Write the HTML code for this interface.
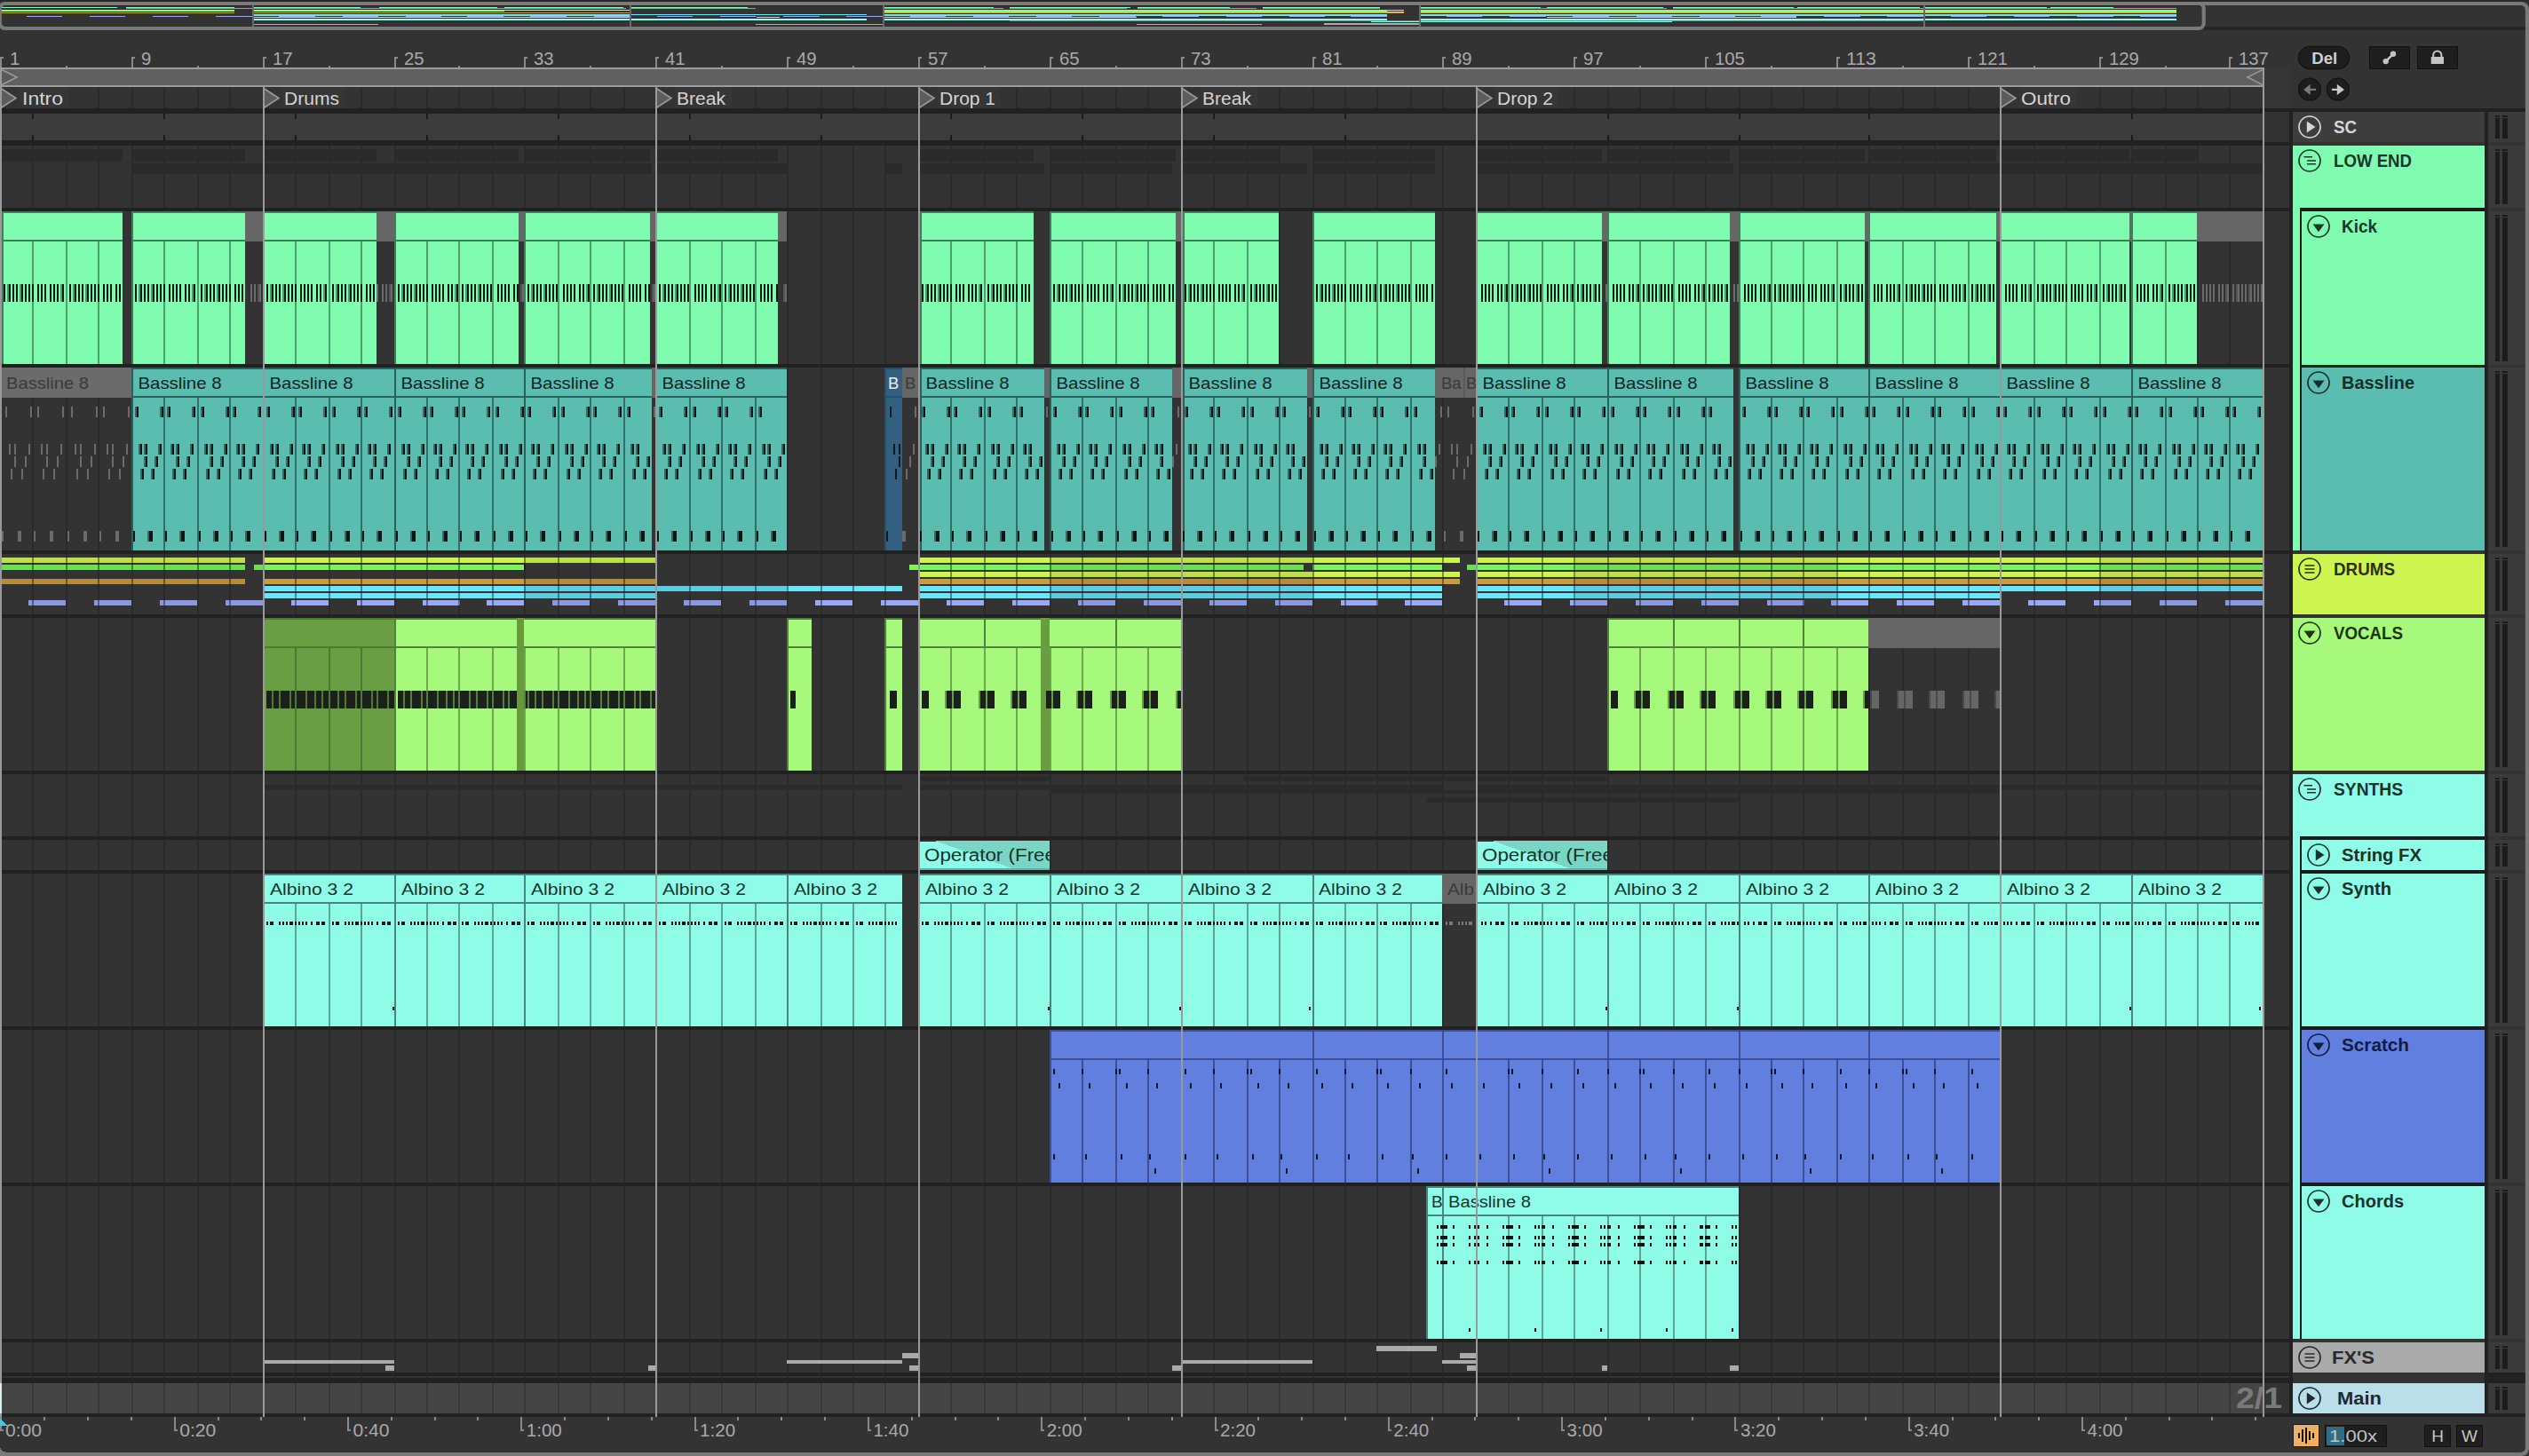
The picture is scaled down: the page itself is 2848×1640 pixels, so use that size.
<!DOCTYPE html>
<html><head><meta charset="utf-8"><style>
html,body{margin:0;padding:0;background:#333;width:2848px;height:1640px;overflow:hidden}
svg{display:block;font-family:"Liberation Sans",sans-serif}
path,rect{shape-rendering:crispEdges}
circle,path.s{shape-rendering:geometricPrecision}
.gp,.gp *{shape-rendering:geometricPrecision !important}
</style></head><body>
<svg width="2848" height="1640" viewBox="0 0 2848 1640">
<path fill="#333333" d="M0 0h2848v1640h-2848z"/>
<path fill="#2a2a2a" d="M0 0h2848v2h-2848z"/>
<path fill="#212121" d="M0 122h2582v1474h-2582z"/>
<path fill="#333333" d="M2 128h2546v30h-2546zM2550 126h28v34h-28zM2 164h2546v70h-2546zM2550 164h28v70h-28zM2 238h2546v172h-2546zM2550 238h28v172h-28zM2 414h2546v206h-2546zM2550 414h28v206h-28zM2 624h2546v68h-2546zM2550 624h28v68h-28zM2 696h2546v172h-2546zM2550 696h28v172h-28zM2 872h2546v70h-2546zM2550 872h28v70h-28zM2 946h2546v34h-2546zM2550 946h28v34h-28zM2 984h2546v172h-2546zM2550 984h28v172h-28zM2 1160h2546v172h-2546zM2550 1160h28v172h-28zM2 1336h2546v172h-2546zM2550 1336h28v172h-28zM2 1512h2546v34h-2546zM2550 1512h28v34h-28z"/>
<path fill="#454545" d="M2 1558h2546v34h-2546z"/>
<path fill="#333333" d="M2550 1558h28v34h-28z"/>
<path fill="#2a2a2a" d="M36 164h2v70h-2zM74 164h2v70h-2zM110 164h2v70h-2zM148 164h2v70h-2zM184 164h2v70h-2zM222 164h2v70h-2zM258 164h2v70h-2zM296 164h2v70h-2zM332 164h2v70h-2zM370 164h2v70h-2zM406 164h2v70h-2zM444 164h2v70h-2zM480 164h2v70h-2zM516 164h2v70h-2zM554 164h2v70h-2zM590 164h2v70h-2zM628 164h2v70h-2zM664 164h2v70h-2zM702 164h2v70h-2zM738 164h2v70h-2zM776 164h2v70h-2zM812 164h2v70h-2zM850 164h2v70h-2zM886 164h2v70h-2zM924 164h2v70h-2zM960 164h2v70h-2zM996 164h2v70h-2zM1034 164h2v70h-2zM1070 164h2v70h-2zM1108 164h2v70h-2zM1144 164h2v70h-2zM1182 164h2v70h-2zM1218 164h2v70h-2zM1256 164h2v70h-2zM1292 164h2v70h-2zM1330 164h2v70h-2zM1366 164h2v70h-2zM1404 164h2v70h-2zM1440 164h2v70h-2zM1478 164h2v70h-2zM1514 164h2v70h-2zM1550 164h2v70h-2zM1588 164h2v70h-2zM1624 164h2v70h-2zM1662 164h2v70h-2zM1698 164h2v70h-2zM1736 164h2v70h-2zM1772 164h2v70h-2zM1810 164h2v70h-2zM1846 164h2v70h-2zM1884 164h2v70h-2zM1920 164h2v70h-2zM1958 164h2v70h-2zM1994 164h2v70h-2zM2030 164h2v70h-2zM2068 164h2v70h-2zM2104 164h2v70h-2zM2142 164h2v70h-2zM2178 164h2v70h-2zM2216 164h2v70h-2zM2252 164h2v70h-2zM2290 164h2v70h-2zM2326 164h2v70h-2zM2364 164h2v70h-2zM2400 164h2v70h-2zM2438 164h2v70h-2zM2474 164h2v70h-2zM2510 164h2v70h-2zM36 238h2v172h-2zM74 238h2v172h-2zM110 238h2v172h-2zM148 238h2v172h-2zM184 238h2v172h-2zM222 238h2v172h-2zM258 238h2v172h-2zM296 238h2v172h-2zM332 238h2v172h-2zM370 238h2v172h-2zM406 238h2v172h-2zM444 238h2v172h-2zM480 238h2v172h-2zM516 238h2v172h-2zM554 238h2v172h-2zM590 238h2v172h-2zM628 238h2v172h-2zM664 238h2v172h-2zM702 238h2v172h-2zM738 238h2v172h-2zM776 238h2v172h-2zM812 238h2v172h-2zM850 238h2v172h-2zM886 238h2v172h-2zM924 238h2v172h-2zM960 238h2v172h-2zM996 238h2v172h-2zM1034 238h2v172h-2zM1070 238h2v172h-2zM1108 238h2v172h-2zM1144 238h2v172h-2zM1182 238h2v172h-2zM1218 238h2v172h-2zM1256 238h2v172h-2zM1292 238h2v172h-2zM1330 238h2v172h-2zM1366 238h2v172h-2zM1404 238h2v172h-2zM1440 238h2v172h-2zM1478 238h2v172h-2zM1514 238h2v172h-2zM1550 238h2v172h-2zM1588 238h2v172h-2zM1624 238h2v172h-2zM1662 238h2v172h-2zM1698 238h2v172h-2zM1736 238h2v172h-2zM1772 238h2v172h-2zM1810 238h2v172h-2zM1846 238h2v172h-2zM1884 238h2v172h-2zM1920 238h2v172h-2zM1958 238h2v172h-2zM1994 238h2v172h-2zM2030 238h2v172h-2zM2068 238h2v172h-2zM2104 238h2v172h-2zM2142 238h2v172h-2zM2178 238h2v172h-2zM2216 238h2v172h-2zM2252 238h2v172h-2zM2290 238h2v172h-2zM2326 238h2v172h-2zM2364 238h2v172h-2zM2400 238h2v172h-2zM2438 238h2v172h-2zM2474 238h2v172h-2zM2510 238h2v172h-2zM36 414h2v206h-2zM74 414h2v206h-2zM110 414h2v206h-2zM148 414h2v206h-2zM184 414h2v206h-2zM222 414h2v206h-2zM258 414h2v206h-2zM296 414h2v206h-2zM332 414h2v206h-2zM370 414h2v206h-2zM406 414h2v206h-2zM444 414h2v206h-2zM480 414h2v206h-2zM516 414h2v206h-2zM554 414h2v206h-2zM590 414h2v206h-2zM628 414h2v206h-2zM664 414h2v206h-2zM702 414h2v206h-2zM738 414h2v206h-2zM776 414h2v206h-2zM812 414h2v206h-2zM850 414h2v206h-2zM886 414h2v206h-2zM924 414h2v206h-2zM960 414h2v206h-2zM996 414h2v206h-2zM1034 414h2v206h-2zM1070 414h2v206h-2zM1108 414h2v206h-2zM1144 414h2v206h-2zM1182 414h2v206h-2zM1218 414h2v206h-2zM1256 414h2v206h-2zM1292 414h2v206h-2zM1330 414h2v206h-2zM1366 414h2v206h-2zM1404 414h2v206h-2zM1440 414h2v206h-2zM1478 414h2v206h-2zM1514 414h2v206h-2zM1550 414h2v206h-2zM1588 414h2v206h-2zM1624 414h2v206h-2zM1662 414h2v206h-2zM1698 414h2v206h-2zM1736 414h2v206h-2zM1772 414h2v206h-2zM1810 414h2v206h-2zM1846 414h2v206h-2zM1884 414h2v206h-2zM1920 414h2v206h-2zM1958 414h2v206h-2zM1994 414h2v206h-2zM2030 414h2v206h-2zM2068 414h2v206h-2zM2104 414h2v206h-2zM2142 414h2v206h-2zM2178 414h2v206h-2zM2216 414h2v206h-2zM2252 414h2v206h-2zM2290 414h2v206h-2zM2326 414h2v206h-2zM2364 414h2v206h-2zM2400 414h2v206h-2zM2438 414h2v206h-2zM2474 414h2v206h-2zM2510 414h2v206h-2zM36 624h2v68h-2zM74 624h2v68h-2zM110 624h2v68h-2zM148 624h2v68h-2zM184 624h2v68h-2zM222 624h2v68h-2zM258 624h2v68h-2zM296 624h2v68h-2zM332 624h2v68h-2zM370 624h2v68h-2zM406 624h2v68h-2zM444 624h2v68h-2zM480 624h2v68h-2zM516 624h2v68h-2zM554 624h2v68h-2zM590 624h2v68h-2zM628 624h2v68h-2zM664 624h2v68h-2zM702 624h2v68h-2zM738 624h2v68h-2zM776 624h2v68h-2zM812 624h2v68h-2zM850 624h2v68h-2zM886 624h2v68h-2zM924 624h2v68h-2zM960 624h2v68h-2zM996 624h2v68h-2zM1034 624h2v68h-2zM1070 624h2v68h-2zM1108 624h2v68h-2zM1144 624h2v68h-2zM1182 624h2v68h-2zM1218 624h2v68h-2zM1256 624h2v68h-2zM1292 624h2v68h-2zM1330 624h2v68h-2zM1366 624h2v68h-2zM1404 624h2v68h-2zM1440 624h2v68h-2zM1478 624h2v68h-2zM1514 624h2v68h-2zM1550 624h2v68h-2zM1588 624h2v68h-2zM1624 624h2v68h-2zM1662 624h2v68h-2zM1698 624h2v68h-2zM1736 624h2v68h-2zM1772 624h2v68h-2zM1810 624h2v68h-2zM1846 624h2v68h-2zM1884 624h2v68h-2zM1920 624h2v68h-2zM1958 624h2v68h-2zM1994 624h2v68h-2zM2030 624h2v68h-2zM2068 624h2v68h-2zM2104 624h2v68h-2zM2142 624h2v68h-2zM2178 624h2v68h-2zM2216 624h2v68h-2zM2252 624h2v68h-2zM2290 624h2v68h-2zM2326 624h2v68h-2zM2364 624h2v68h-2zM2400 624h2v68h-2zM2438 624h2v68h-2zM2474 624h2v68h-2zM2510 624h2v68h-2zM36 696h2v172h-2zM74 696h2v172h-2zM110 696h2v172h-2zM148 696h2v172h-2zM184 696h2v172h-2zM222 696h2v172h-2zM258 696h2v172h-2zM296 696h2v172h-2zM332 696h2v172h-2zM370 696h2v172h-2zM406 696h2v172h-2zM444 696h2v172h-2zM480 696h2v172h-2zM516 696h2v172h-2zM554 696h2v172h-2zM590 696h2v172h-2zM628 696h2v172h-2zM664 696h2v172h-2zM702 696h2v172h-2zM738 696h2v172h-2zM776 696h2v172h-2zM812 696h2v172h-2zM850 696h2v172h-2zM886 696h2v172h-2zM924 696h2v172h-2zM960 696h2v172h-2zM996 696h2v172h-2zM1034 696h2v172h-2zM1070 696h2v172h-2zM1108 696h2v172h-2zM1144 696h2v172h-2zM1182 696h2v172h-2zM1218 696h2v172h-2zM1256 696h2v172h-2zM1292 696h2v172h-2zM1330 696h2v172h-2zM1366 696h2v172h-2zM1404 696h2v172h-2zM1440 696h2v172h-2zM1478 696h2v172h-2zM1514 696h2v172h-2zM1550 696h2v172h-2zM1588 696h2v172h-2zM1624 696h2v172h-2zM1662 696h2v172h-2zM1698 696h2v172h-2zM1736 696h2v172h-2zM1772 696h2v172h-2zM1810 696h2v172h-2zM1846 696h2v172h-2zM1884 696h2v172h-2zM1920 696h2v172h-2zM1958 696h2v172h-2zM1994 696h2v172h-2zM2030 696h2v172h-2zM2068 696h2v172h-2zM2104 696h2v172h-2zM2142 696h2v172h-2zM2178 696h2v172h-2zM2216 696h2v172h-2zM2252 696h2v172h-2zM2290 696h2v172h-2zM2326 696h2v172h-2zM2364 696h2v172h-2zM2400 696h2v172h-2zM2438 696h2v172h-2zM2474 696h2v172h-2zM2510 696h2v172h-2zM36 872h2v70h-2zM74 872h2v70h-2zM110 872h2v70h-2zM148 872h2v70h-2zM184 872h2v70h-2zM222 872h2v70h-2zM258 872h2v70h-2zM296 872h2v70h-2zM332 872h2v70h-2zM370 872h2v70h-2zM406 872h2v70h-2zM444 872h2v70h-2zM480 872h2v70h-2zM516 872h2v70h-2zM554 872h2v70h-2zM590 872h2v70h-2zM628 872h2v70h-2zM664 872h2v70h-2zM702 872h2v70h-2zM738 872h2v70h-2zM776 872h2v70h-2zM812 872h2v70h-2zM850 872h2v70h-2zM886 872h2v70h-2zM924 872h2v70h-2zM960 872h2v70h-2zM996 872h2v70h-2zM1034 872h2v70h-2zM1070 872h2v70h-2zM1108 872h2v70h-2zM1144 872h2v70h-2zM1182 872h2v70h-2zM1218 872h2v70h-2zM1256 872h2v70h-2zM1292 872h2v70h-2zM1330 872h2v70h-2zM1366 872h2v70h-2zM1404 872h2v70h-2zM1440 872h2v70h-2zM1478 872h2v70h-2zM1514 872h2v70h-2zM1550 872h2v70h-2zM1588 872h2v70h-2zM1624 872h2v70h-2zM1662 872h2v70h-2zM1698 872h2v70h-2zM1736 872h2v70h-2zM1772 872h2v70h-2zM1810 872h2v70h-2zM1846 872h2v70h-2zM1884 872h2v70h-2zM1920 872h2v70h-2zM1958 872h2v70h-2zM1994 872h2v70h-2zM2030 872h2v70h-2zM2068 872h2v70h-2zM2104 872h2v70h-2zM2142 872h2v70h-2zM2178 872h2v70h-2zM2216 872h2v70h-2zM2252 872h2v70h-2zM2290 872h2v70h-2zM2326 872h2v70h-2zM2364 872h2v70h-2zM2400 872h2v70h-2zM2438 872h2v70h-2zM2474 872h2v70h-2zM2510 872h2v70h-2zM36 946h2v34h-2zM74 946h2v34h-2zM110 946h2v34h-2zM148 946h2v34h-2zM184 946h2v34h-2zM222 946h2v34h-2zM258 946h2v34h-2zM296 946h2v34h-2zM332 946h2v34h-2zM370 946h2v34h-2zM406 946h2v34h-2zM444 946h2v34h-2zM480 946h2v34h-2zM516 946h2v34h-2zM554 946h2v34h-2zM590 946h2v34h-2zM628 946h2v34h-2zM664 946h2v34h-2zM702 946h2v34h-2zM738 946h2v34h-2zM776 946h2v34h-2zM812 946h2v34h-2zM850 946h2v34h-2zM886 946h2v34h-2zM924 946h2v34h-2zM960 946h2v34h-2zM996 946h2v34h-2zM1034 946h2v34h-2zM1070 946h2v34h-2zM1108 946h2v34h-2zM1144 946h2v34h-2zM1182 946h2v34h-2zM1218 946h2v34h-2zM1256 946h2v34h-2zM1292 946h2v34h-2zM1330 946h2v34h-2zM1366 946h2v34h-2zM1404 946h2v34h-2zM1440 946h2v34h-2zM1478 946h2v34h-2zM1514 946h2v34h-2zM1550 946h2v34h-2zM1588 946h2v34h-2zM1624 946h2v34h-2zM1662 946h2v34h-2zM1698 946h2v34h-2zM1736 946h2v34h-2zM1772 946h2v34h-2zM1810 946h2v34h-2zM1846 946h2v34h-2zM1884 946h2v34h-2zM1920 946h2v34h-2zM1958 946h2v34h-2zM1994 946h2v34h-2zM2030 946h2v34h-2zM2068 946h2v34h-2zM2104 946h2v34h-2zM2142 946h2v34h-2zM2178 946h2v34h-2zM2216 946h2v34h-2zM2252 946h2v34h-2zM2290 946h2v34h-2zM2326 946h2v34h-2zM2364 946h2v34h-2zM2400 946h2v34h-2zM2438 946h2v34h-2zM2474 946h2v34h-2zM2510 946h2v34h-2zM36 984h2v172h-2zM74 984h2v172h-2zM110 984h2v172h-2zM148 984h2v172h-2zM184 984h2v172h-2zM222 984h2v172h-2zM258 984h2v172h-2zM296 984h2v172h-2zM332 984h2v172h-2zM370 984h2v172h-2zM406 984h2v172h-2zM444 984h2v172h-2zM480 984h2v172h-2zM516 984h2v172h-2zM554 984h2v172h-2zM590 984h2v172h-2zM628 984h2v172h-2zM664 984h2v172h-2zM702 984h2v172h-2zM738 984h2v172h-2zM776 984h2v172h-2zM812 984h2v172h-2zM850 984h2v172h-2zM886 984h2v172h-2zM924 984h2v172h-2zM960 984h2v172h-2zM996 984h2v172h-2zM1034 984h2v172h-2zM1070 984h2v172h-2zM1108 984h2v172h-2zM1144 984h2v172h-2zM1182 984h2v172h-2zM1218 984h2v172h-2zM1256 984h2v172h-2zM1292 984h2v172h-2zM1330 984h2v172h-2zM1366 984h2v172h-2zM1404 984h2v172h-2zM1440 984h2v172h-2zM1478 984h2v172h-2zM1514 984h2v172h-2zM1550 984h2v172h-2zM1588 984h2v172h-2zM1624 984h2v172h-2zM1662 984h2v172h-2zM1698 984h2v172h-2zM1736 984h2v172h-2zM1772 984h2v172h-2zM1810 984h2v172h-2zM1846 984h2v172h-2zM1884 984h2v172h-2zM1920 984h2v172h-2zM1958 984h2v172h-2zM1994 984h2v172h-2zM2030 984h2v172h-2zM2068 984h2v172h-2zM2104 984h2v172h-2zM2142 984h2v172h-2zM2178 984h2v172h-2zM2216 984h2v172h-2zM2252 984h2v172h-2zM2290 984h2v172h-2zM2326 984h2v172h-2zM2364 984h2v172h-2zM2400 984h2v172h-2zM2438 984h2v172h-2zM2474 984h2v172h-2zM2510 984h2v172h-2zM36 1160h2v172h-2zM74 1160h2v172h-2zM110 1160h2v172h-2zM148 1160h2v172h-2zM184 1160h2v172h-2zM222 1160h2v172h-2zM258 1160h2v172h-2zM296 1160h2v172h-2zM332 1160h2v172h-2zM370 1160h2v172h-2zM406 1160h2v172h-2zM444 1160h2v172h-2zM480 1160h2v172h-2zM516 1160h2v172h-2zM554 1160h2v172h-2zM590 1160h2v172h-2zM628 1160h2v172h-2zM664 1160h2v172h-2zM702 1160h2v172h-2zM738 1160h2v172h-2zM776 1160h2v172h-2zM812 1160h2v172h-2zM850 1160h2v172h-2zM886 1160h2v172h-2zM924 1160h2v172h-2zM960 1160h2v172h-2zM996 1160h2v172h-2zM1034 1160h2v172h-2zM1070 1160h2v172h-2zM1108 1160h2v172h-2zM1144 1160h2v172h-2zM1182 1160h2v172h-2zM1218 1160h2v172h-2zM1256 1160h2v172h-2zM1292 1160h2v172h-2zM1330 1160h2v172h-2zM1366 1160h2v172h-2zM1404 1160h2v172h-2zM1440 1160h2v172h-2zM1478 1160h2v172h-2zM1514 1160h2v172h-2zM1550 1160h2v172h-2zM1588 1160h2v172h-2zM1624 1160h2v172h-2zM1662 1160h2v172h-2zM1698 1160h2v172h-2zM1736 1160h2v172h-2zM1772 1160h2v172h-2zM1810 1160h2v172h-2zM1846 1160h2v172h-2zM1884 1160h2v172h-2zM1920 1160h2v172h-2zM1958 1160h2v172h-2zM1994 1160h2v172h-2zM2030 1160h2v172h-2zM2068 1160h2v172h-2zM2104 1160h2v172h-2zM2142 1160h2v172h-2zM2178 1160h2v172h-2zM2216 1160h2v172h-2zM2252 1160h2v172h-2zM2290 1160h2v172h-2zM2326 1160h2v172h-2zM2364 1160h2v172h-2zM2400 1160h2v172h-2zM2438 1160h2v172h-2zM2474 1160h2v172h-2zM2510 1160h2v172h-2zM36 1336h2v172h-2zM74 1336h2v172h-2zM110 1336h2v172h-2zM148 1336h2v172h-2zM184 1336h2v172h-2zM222 1336h2v172h-2zM258 1336h2v172h-2zM296 1336h2v172h-2zM332 1336h2v172h-2zM370 1336h2v172h-2zM406 1336h2v172h-2zM444 1336h2v172h-2zM480 1336h2v172h-2zM516 1336h2v172h-2zM554 1336h2v172h-2zM590 1336h2v172h-2zM628 1336h2v172h-2zM664 1336h2v172h-2zM702 1336h2v172h-2zM738 1336h2v172h-2zM776 1336h2v172h-2zM812 1336h2v172h-2zM850 1336h2v172h-2zM886 1336h2v172h-2zM924 1336h2v172h-2zM960 1336h2v172h-2zM996 1336h2v172h-2zM1034 1336h2v172h-2zM1070 1336h2v172h-2zM1108 1336h2v172h-2zM1144 1336h2v172h-2zM1182 1336h2v172h-2zM1218 1336h2v172h-2zM1256 1336h2v172h-2zM1292 1336h2v172h-2zM1330 1336h2v172h-2zM1366 1336h2v172h-2zM1404 1336h2v172h-2zM1440 1336h2v172h-2zM1478 1336h2v172h-2zM1514 1336h2v172h-2zM1550 1336h2v172h-2zM1588 1336h2v172h-2zM1624 1336h2v172h-2zM1662 1336h2v172h-2zM1698 1336h2v172h-2zM1736 1336h2v172h-2zM1772 1336h2v172h-2zM1810 1336h2v172h-2zM1846 1336h2v172h-2zM1884 1336h2v172h-2zM1920 1336h2v172h-2zM1958 1336h2v172h-2zM1994 1336h2v172h-2zM2030 1336h2v172h-2zM2068 1336h2v172h-2zM2104 1336h2v172h-2zM2142 1336h2v172h-2zM2178 1336h2v172h-2zM2216 1336h2v172h-2zM2252 1336h2v172h-2zM2290 1336h2v172h-2zM2326 1336h2v172h-2zM2364 1336h2v172h-2zM2400 1336h2v172h-2zM2438 1336h2v172h-2zM2474 1336h2v172h-2zM2510 1336h2v172h-2zM36 1512h2v34h-2zM74 1512h2v34h-2zM110 1512h2v34h-2zM148 1512h2v34h-2zM184 1512h2v34h-2zM222 1512h2v34h-2zM258 1512h2v34h-2zM296 1512h2v34h-2zM332 1512h2v34h-2zM370 1512h2v34h-2zM406 1512h2v34h-2zM444 1512h2v34h-2zM480 1512h2v34h-2zM516 1512h2v34h-2zM554 1512h2v34h-2zM590 1512h2v34h-2zM628 1512h2v34h-2zM664 1512h2v34h-2zM702 1512h2v34h-2zM738 1512h2v34h-2zM776 1512h2v34h-2zM812 1512h2v34h-2zM850 1512h2v34h-2zM886 1512h2v34h-2zM924 1512h2v34h-2zM960 1512h2v34h-2zM996 1512h2v34h-2zM1034 1512h2v34h-2zM1070 1512h2v34h-2zM1108 1512h2v34h-2zM1144 1512h2v34h-2zM1182 1512h2v34h-2zM1218 1512h2v34h-2zM1256 1512h2v34h-2zM1292 1512h2v34h-2zM1330 1512h2v34h-2zM1366 1512h2v34h-2zM1404 1512h2v34h-2zM1440 1512h2v34h-2zM1478 1512h2v34h-2zM1514 1512h2v34h-2zM1550 1512h2v34h-2zM1588 1512h2v34h-2zM1624 1512h2v34h-2zM1662 1512h2v34h-2zM1698 1512h2v34h-2zM1736 1512h2v34h-2zM1772 1512h2v34h-2zM1810 1512h2v34h-2zM1846 1512h2v34h-2zM1884 1512h2v34h-2zM1920 1512h2v34h-2zM1958 1512h2v34h-2zM1994 1512h2v34h-2zM2030 1512h2v34h-2zM2068 1512h2v34h-2zM2104 1512h2v34h-2zM2142 1512h2v34h-2zM2178 1512h2v34h-2zM2216 1512h2v34h-2zM2252 1512h2v34h-2zM2290 1512h2v34h-2zM2326 1512h2v34h-2zM2364 1512h2v34h-2zM2400 1512h2v34h-2zM2438 1512h2v34h-2zM2474 1512h2v34h-2zM2510 1512h2v34h-2z"/>
<path fill="#383838" d="M36 1558h2v34h-2zM74 1558h2v34h-2zM110 1558h2v34h-2zM148 1558h2v34h-2zM184 1558h2v34h-2zM222 1558h2v34h-2zM258 1558h2v34h-2zM296 1558h2v34h-2zM332 1558h2v34h-2zM370 1558h2v34h-2zM406 1558h2v34h-2zM444 1558h2v34h-2zM480 1558h2v34h-2zM516 1558h2v34h-2zM554 1558h2v34h-2zM590 1558h2v34h-2zM628 1558h2v34h-2zM664 1558h2v34h-2zM702 1558h2v34h-2zM738 1558h2v34h-2zM776 1558h2v34h-2zM812 1558h2v34h-2zM850 1558h2v34h-2zM886 1558h2v34h-2zM924 1558h2v34h-2zM960 1558h2v34h-2zM996 1558h2v34h-2zM1034 1558h2v34h-2zM1070 1558h2v34h-2zM1108 1558h2v34h-2zM1144 1558h2v34h-2zM1182 1558h2v34h-2zM1218 1558h2v34h-2zM1256 1558h2v34h-2zM1292 1558h2v34h-2zM1330 1558h2v34h-2zM1366 1558h2v34h-2zM1404 1558h2v34h-2zM1440 1558h2v34h-2zM1478 1558h2v34h-2zM1514 1558h2v34h-2zM1550 1558h2v34h-2zM1588 1558h2v34h-2zM1624 1558h2v34h-2zM1662 1558h2v34h-2zM1698 1558h2v34h-2zM1736 1558h2v34h-2zM1772 1558h2v34h-2zM1810 1558h2v34h-2zM1846 1558h2v34h-2zM1884 1558h2v34h-2zM1920 1558h2v34h-2zM1958 1558h2v34h-2zM1994 1558h2v34h-2zM2030 1558h2v34h-2zM2068 1558h2v34h-2zM2104 1558h2v34h-2zM2142 1558h2v34h-2zM2178 1558h2v34h-2zM2216 1558h2v34h-2zM2252 1558h2v34h-2zM2290 1558h2v34h-2zM2326 1558h2v34h-2zM2364 1558h2v34h-2zM2400 1558h2v34h-2zM2438 1558h2v34h-2zM2474 1558h2v34h-2zM2510 1558h2v34h-2z"/>
<path fill="#3c3c3c" d="M2 128h2546v30h-2546z"/>
<path fill="#1f1717" d="M36 128h2v6h-2zM36 152h2v6h-2zM184 128h2v6h-2zM184 152h2v6h-2zM332 128h2v6h-2zM332 152h2v6h-2zM480 128h2v6h-2zM480 152h2v6h-2zM628 128h2v6h-2zM628 152h2v6h-2zM776 128h2v6h-2zM776 152h2v6h-2zM924 128h2v6h-2zM924 152h2v6h-2zM1070 128h2v6h-2zM1070 152h2v6h-2zM1218 128h2v6h-2zM1218 152h2v6h-2zM1366 128h2v6h-2zM1366 152h2v6h-2zM1514 128h2v6h-2zM1514 152h2v6h-2zM1662 128h2v6h-2zM1662 152h2v6h-2zM1810 128h2v6h-2zM1810 152h2v6h-2zM1958 128h2v6h-2zM1958 152h2v6h-2zM2104 128h2v6h-2zM2104 152h2v6h-2zM2252 128h2v6h-2zM2252 152h2v6h-2zM2400 128h2v6h-2zM2400 152h2v6h-2zM2548 128h2v6h-2zM2548 152h2v6h-2z"/>
<path fill="#2b2b2b" d="M2 168h136v14h-136zM148 168h128v14h-128zM296 168h128v14h-128zM444 168h140v14h-140zM590 168h142v14h-142zM738 168h138v14h-138zM1036 168h128v14h-128zM1182 168h142v14h-142zM1332 168h108v14h-108zM1478 168h138v14h-138zM1662 168h142v14h-142zM1810 168h138v14h-138zM1958 168h142v14h-142zM2104 168h144v14h-144zM2252 168h146v14h-146zM2400 168h74v14h-74zM148 184h148v12h-148zM296 184h148v12h-148zM444 184h146v12h-146zM590 184h144v12h-144zM738 184h148v12h-148zM996 184h20v12h-20zM1036 184h140v12h-140zM1182 184h138v12h-138zM1332 184h140v12h-140zM1478 184h138v12h-138zM1662 184h148v12h-148zM1810 184h142v12h-142zM1958 184h146v12h-146zM2104 184h148v12h-148zM2252 184h148v12h-148zM2400 184h148v12h-148zM1034 874h148v6h-148zM1400 874h410v6h-410zM296 884h720v6h-720zM1034 884h590v6h-590zM1662 884h886v6h-886zM1182 890h1070v4h-1070zM1606 898h352v6h-352z"/>
<path fill="#2a2a2a" d="M36 164h2v70h-2zM74 164h2v70h-2zM110 164h2v70h-2zM148 164h2v70h-2zM184 164h2v70h-2zM222 164h2v70h-2zM258 164h2v70h-2zM296 164h2v70h-2zM332 164h2v70h-2zM370 164h2v70h-2zM406 164h2v70h-2zM444 164h2v70h-2zM480 164h2v70h-2zM516 164h2v70h-2zM554 164h2v70h-2zM590 164h2v70h-2zM628 164h2v70h-2zM664 164h2v70h-2zM702 164h2v70h-2zM738 164h2v70h-2zM776 164h2v70h-2zM812 164h2v70h-2zM850 164h2v70h-2zM886 164h2v70h-2zM924 164h2v70h-2zM960 164h2v70h-2zM996 164h2v70h-2zM1034 164h2v70h-2zM1070 164h2v70h-2zM1108 164h2v70h-2zM1144 164h2v70h-2zM1182 164h2v70h-2zM1218 164h2v70h-2zM1256 164h2v70h-2zM1292 164h2v70h-2zM1330 164h2v70h-2zM1366 164h2v70h-2zM1404 164h2v70h-2zM1440 164h2v70h-2zM1478 164h2v70h-2zM1514 164h2v70h-2zM1550 164h2v70h-2zM1588 164h2v70h-2zM1624 164h2v70h-2zM1662 164h2v70h-2zM1698 164h2v70h-2zM1736 164h2v70h-2zM1772 164h2v70h-2zM1810 164h2v70h-2zM1846 164h2v70h-2zM1884 164h2v70h-2zM1920 164h2v70h-2zM1958 164h2v70h-2zM1994 164h2v70h-2zM2030 164h2v70h-2zM2068 164h2v70h-2zM2104 164h2v70h-2zM2142 164h2v70h-2zM2178 164h2v70h-2zM2216 164h2v70h-2zM2252 164h2v70h-2zM2290 164h2v70h-2zM2326 164h2v70h-2zM2364 164h2v70h-2zM2400 164h2v70h-2zM2438 164h2v70h-2zM2474 164h2v70h-2zM2510 164h2v70h-2zM36 872h2v70h-2zM74 872h2v70h-2zM110 872h2v70h-2zM148 872h2v70h-2zM184 872h2v70h-2zM222 872h2v70h-2zM258 872h2v70h-2zM296 872h2v70h-2zM332 872h2v70h-2zM370 872h2v70h-2zM406 872h2v70h-2zM444 872h2v70h-2zM480 872h2v70h-2zM516 872h2v70h-2zM554 872h2v70h-2zM590 872h2v70h-2zM628 872h2v70h-2zM664 872h2v70h-2zM702 872h2v70h-2zM738 872h2v70h-2zM776 872h2v70h-2zM812 872h2v70h-2zM850 872h2v70h-2zM886 872h2v70h-2zM924 872h2v70h-2zM960 872h2v70h-2zM996 872h2v70h-2zM1034 872h2v70h-2zM1070 872h2v70h-2zM1108 872h2v70h-2zM1144 872h2v70h-2zM1182 872h2v70h-2zM1218 872h2v70h-2zM1256 872h2v70h-2zM1292 872h2v70h-2zM1330 872h2v70h-2zM1366 872h2v70h-2zM1404 872h2v70h-2zM1440 872h2v70h-2zM1478 872h2v70h-2zM1514 872h2v70h-2zM1550 872h2v70h-2zM1588 872h2v70h-2zM1624 872h2v70h-2zM1662 872h2v70h-2zM1698 872h2v70h-2zM1736 872h2v70h-2zM1772 872h2v70h-2zM1810 872h2v70h-2zM1846 872h2v70h-2zM1884 872h2v70h-2zM1920 872h2v70h-2zM1958 872h2v70h-2zM1994 872h2v70h-2zM2030 872h2v70h-2zM2068 872h2v70h-2zM2104 872h2v70h-2zM2142 872h2v70h-2zM2178 872h2v70h-2zM2216 872h2v70h-2zM2252 872h2v70h-2zM2290 872h2v70h-2zM2326 872h2v70h-2zM2364 872h2v70h-2zM2400 872h2v70h-2zM2438 872h2v70h-2zM2474 872h2v70h-2zM2510 872h2v70h-2z"/>
<path fill="#80fcb0" d="M2 238h136v172h-136z"/>
<path fill="#3e7f5a" d="M2 238h136v2h-136zM2 270h136v2h-136zM2 238h2v172h-2z"/>
<path fill="#4f9f70" d="M36 272h2v138h-2zM74 272h2v138h-2zM110 272h2v138h-2z"/>
<path fill="#111a14" d="M4 320h2v20h-2z"/>
<path fill="#4f9a6c" d="M8 320h2v20h-2z"/>
<path fill="#111a14" d="M10 320h2v20h-2zM14 320h2v20h-2zM18 320h2v20h-2z"/>
<path fill="#4f9a6c" d="M22 320h2v20h-2z"/>
<path fill="#111a14" d="M24 320h2v20h-2zM28 320h2v20h-2zM32 320h2v20h-2zM36 320h2v20h-2zM42 320h2v20h-2zM46 320h2v20h-2zM50 320h2v20h-2zM56 320h2v20h-2zM60 320h2v20h-2zM64 320h2v20h-2z"/>
<path fill="#4f9a6c" d="M68 320h2v20h-2z"/>
<path fill="#111a14" d="M70 320h2v20h-2zM78 320h2v20h-2z"/>
<path fill="#4f9a6c" d="M82 320h2v20h-2z"/>
<path fill="#111a14" d="M84 320h2v20h-2zM88 320h2v20h-2zM92 320h2v20h-2z"/>
<path fill="#4f9a6c" d="M96 320h2v20h-2z"/>
<path fill="#111a14" d="M98 320h2v20h-2zM102 320h2v20h-2zM106 320h2v20h-2zM110 320h2v20h-2zM116 320h2v20h-2zM120 320h2v20h-2zM124 320h2v20h-2zM130 320h2v20h-2zM134 320h2v20h-2z"/>
<path fill="#80fcb0" d="M148 238h128v172h-128z"/>
<path fill="#3e7f5a" d="M148 238h128v2h-128zM148 270h128v2h-128zM148 238h2v172h-2z"/>
<path fill="#4f9f70" d="M184 272h2v138h-2zM222 272h2v138h-2zM258 272h2v138h-2z"/>
<path fill="#111a14" d="M152 320h2v20h-2z"/>
<path fill="#4f9a6c" d="M156 320h2v20h-2z"/>
<path fill="#111a14" d="M158 320h2v20h-2zM162 320h2v20h-2zM166 320h2v20h-2z"/>
<path fill="#4f9a6c" d="M170 320h2v20h-2z"/>
<path fill="#111a14" d="M172 320h2v20h-2zM176 320h2v20h-2zM180 320h2v20h-2zM184 320h2v20h-2zM190 320h2v20h-2zM194 320h2v20h-2zM198 320h2v20h-2zM202 320h2v20h-2zM208 320h2v20h-2zM212 320h2v20h-2z"/>
<path fill="#4f9a6c" d="M216 320h2v20h-2z"/>
<path fill="#111a14" d="M218 320h2v20h-2zM226 320h2v20h-2z"/>
<path fill="#4f9a6c" d="M230 320h2v20h-2z"/>
<path fill="#111a14" d="M232 320h2v20h-2zM236 320h2v20h-2zM240 320h2v20h-2z"/>
<path fill="#4f9a6c" d="M244 320h2v20h-2z"/>
<path fill="#111a14" d="M246 320h2v20h-2zM250 320h2v20h-2zM254 320h2v20h-2zM258 320h2v20h-2zM264 320h2v20h-2zM268 320h2v20h-2zM272 320h2v20h-2z"/>
<path fill="#666666" d="M276 238h20v34h-20z"/>
<path fill="#6a6a6a" d="M282 320h2v20h-2zM286 320h2v20h-2z"/>
<path fill="#555555" d="M290 320h2v20h-2z"/>
<path fill="#6a6a6a" d="M292 320h2v20h-2z"/>
<path fill="#80fcb0" d="M296 238h128v172h-128z"/>
<path fill="#3e7f5a" d="M296 238h128v2h-128zM296 270h128v2h-128zM296 238h2v172h-2z"/>
<path fill="#4f9f70" d="M332 272h2v138h-2zM370 272h2v138h-2zM406 272h2v138h-2z"/>
<path fill="#111a14" d="M300 320h2v20h-2z"/>
<path fill="#4f9a6c" d="M304 320h2v20h-2z"/>
<path fill="#111a14" d="M306 320h2v20h-2zM310 320h2v20h-2zM314 320h2v20h-2z"/>
<path fill="#4f9a6c" d="M318 320h2v20h-2z"/>
<path fill="#111a14" d="M320 320h2v20h-2zM324 320h2v20h-2zM328 320h2v20h-2zM332 320h2v20h-2zM338 320h2v20h-2zM342 320h2v20h-2zM346 320h2v20h-2zM350 320h2v20h-2zM356 320h2v20h-2zM360 320h2v20h-2z"/>
<path fill="#4f9a6c" d="M364 320h2v20h-2z"/>
<path fill="#111a14" d="M366 320h2v20h-2zM374 320h2v20h-2z"/>
<path fill="#4f9a6c" d="M378 320h2v20h-2z"/>
<path fill="#111a14" d="M380 320h2v20h-2zM384 320h2v20h-2zM388 320h2v20h-2z"/>
<path fill="#4f9a6c" d="M392 320h2v20h-2z"/>
<path fill="#111a14" d="M394 320h2v20h-2zM398 320h2v20h-2zM402 320h2v20h-2zM406 320h2v20h-2zM412 320h2v20h-2zM416 320h2v20h-2zM420 320h2v20h-2z"/>
<path fill="#666666" d="M424 238h20v34h-20z"/>
<path fill="#6a6a6a" d="M424 320h2v20h-2zM430 320h2v20h-2zM434 320h2v20h-2z"/>
<path fill="#555555" d="M438 320h2v20h-2z"/>
<path fill="#6a6a6a" d="M440 320h2v20h-2z"/>
<path fill="#80fcb0" d="M444 238h140v172h-140z"/>
<path fill="#3e7f5a" d="M444 238h140v2h-140zM444 270h140v2h-140zM444 238h2v172h-2z"/>
<path fill="#4f9f70" d="M480 272h2v138h-2zM516 272h2v138h-2zM554 272h2v138h-2z"/>
<path fill="#111a14" d="M448 320h2v20h-2z"/>
<path fill="#4f9a6c" d="M452 320h2v20h-2z"/>
<path fill="#111a14" d="M454 320h2v20h-2zM458 320h2v20h-2zM462 320h2v20h-2z"/>
<path fill="#4f9a6c" d="M466 320h2v20h-2z"/>
<path fill="#111a14" d="M468 320h2v20h-2zM472 320h2v20h-2zM476 320h2v20h-2zM480 320h2v20h-2zM486 320h2v20h-2zM490 320h2v20h-2zM494 320h2v20h-2zM498 320h2v20h-2zM504 320h2v20h-2zM508 320h2v20h-2z"/>
<path fill="#4f9a6c" d="M512 320h2v20h-2z"/>
<path fill="#111a14" d="M514 320h2v20h-2zM520 320h2v20h-2z"/>
<path fill="#4f9a6c" d="M524 320h2v20h-2z"/>
<path fill="#111a14" d="M526 320h2v20h-2zM530 320h2v20h-2zM534 320h2v20h-2z"/>
<path fill="#4f9a6c" d="M538 320h2v20h-2z"/>
<path fill="#111a14" d="M540 320h2v20h-2zM544 320h2v20h-2zM548 320h2v20h-2zM552 320h2v20h-2zM560 320h2v20h-2zM564 320h2v20h-2zM568 320h2v20h-2zM572 320h2v20h-2zM578 320h2v20h-2zM582 320h2v20h-2z"/>
<path fill="#666666" d="M584 238h6v34h-6z"/>
<path fill="#555555" d="M586 320h2v20h-2z"/>
<path fill="#6a6a6a" d="M588 320h2v20h-2z"/>
<path fill="#80fcb0" d="M590 238h142v172h-142z"/>
<path fill="#3e7f5a" d="M590 238h142v2h-142zM590 270h142v2h-142zM590 238h2v172h-2z"/>
<path fill="#4f9f70" d="M628 272h2v138h-2zM664 272h2v138h-2zM702 272h2v138h-2z"/>
<path fill="#111a14" d="M594 320h2v20h-2z"/>
<path fill="#4f9a6c" d="M598 320h2v20h-2z"/>
<path fill="#111a14" d="M600 320h2v20h-2zM604 320h2v20h-2zM608 320h2v20h-2z"/>
<path fill="#4f9a6c" d="M612 320h2v20h-2z"/>
<path fill="#111a14" d="M614 320h2v20h-2zM618 320h2v20h-2zM622 320h2v20h-2zM626 320h2v20h-2zM634 320h2v20h-2zM638 320h2v20h-2zM642 320h2v20h-2zM646 320h2v20h-2zM652 320h2v20h-2zM656 320h2v20h-2z"/>
<path fill="#4f9a6c" d="M660 320h2v20h-2z"/>
<path fill="#111a14" d="M662 320h2v20h-2zM668 320h2v20h-2z"/>
<path fill="#4f9a6c" d="M672 320h2v20h-2z"/>
<path fill="#111a14" d="M674 320h2v20h-2zM678 320h2v20h-2zM682 320h2v20h-2z"/>
<path fill="#4f9a6c" d="M686 320h2v20h-2z"/>
<path fill="#111a14" d="M688 320h2v20h-2zM692 320h2v20h-2zM696 320h2v20h-2zM700 320h2v20h-2zM708 320h2v20h-2zM712 320h2v20h-2zM716 320h2v20h-2zM720 320h2v20h-2zM726 320h2v20h-2zM730 320h2v20h-2z"/>
<path fill="#666666" d="M732 238h6v34h-6z"/>
<path fill="#555555" d="M734 320h2v20h-2z"/>
<path fill="#6a6a6a" d="M736 320h2v20h-2z"/>
<path fill="#80fcb0" d="M738 238h138v172h-138z"/>
<path fill="#3e7f5a" d="M738 238h138v2h-138zM738 270h138v2h-138zM738 238h2v172h-2z"/>
<path fill="#4f9f70" d="M776 272h2v138h-2zM812 272h2v138h-2zM850 272h2v138h-2z"/>
<path fill="#111a14" d="M742 320h2v20h-2z"/>
<path fill="#4f9a6c" d="M746 320h2v20h-2z"/>
<path fill="#111a14" d="M748 320h2v20h-2zM752 320h2v20h-2zM756 320h2v20h-2z"/>
<path fill="#4f9a6c" d="M760 320h2v20h-2z"/>
<path fill="#111a14" d="M762 320h2v20h-2zM766 320h2v20h-2zM770 320h2v20h-2zM774 320h2v20h-2zM782 320h2v20h-2zM786 320h2v20h-2zM790 320h2v20h-2zM794 320h2v20h-2zM800 320h2v20h-2zM804 320h2v20h-2z"/>
<path fill="#4f9a6c" d="M808 320h2v20h-2z"/>
<path fill="#111a14" d="M810 320h2v20h-2zM816 320h2v20h-2z"/>
<path fill="#4f9a6c" d="M820 320h2v20h-2z"/>
<path fill="#111a14" d="M822 320h2v20h-2zM826 320h2v20h-2zM830 320h2v20h-2z"/>
<path fill="#4f9a6c" d="M834 320h2v20h-2z"/>
<path fill="#111a14" d="M836 320h2v20h-2zM840 320h2v20h-2zM844 320h2v20h-2zM848 320h2v20h-2zM856 320h2v20h-2zM860 320h2v20h-2zM864 320h2v20h-2zM868 320h2v20h-2zM874 320h2v20h-2z"/>
<path fill="#666666" d="M876 238h10v34h-10z"/>
<path fill="#555555" d="M882 320h2v20h-2z"/>
<path fill="#6a6a6a" d="M884 320h2v20h-2z"/>
<path fill="#80fcb0" d="M1036 238h128v172h-128z"/>
<path fill="#3e7f5a" d="M1036 238h128v2h-128zM1036 270h128v2h-128zM1036 238h2v172h-2z"/>
<path fill="#4f9f70" d="M1070 272h2v138h-2zM1108 272h2v138h-2zM1144 272h2v138h-2z"/>
<path fill="#111a14" d="M1038 320h2v20h-2z"/>
<path fill="#4f9a6c" d="M1042 320h2v20h-2z"/>
<path fill="#111a14" d="M1044 320h2v20h-2zM1048 320h2v20h-2zM1052 320h2v20h-2z"/>
<path fill="#4f9a6c" d="M1056 320h2v20h-2z"/>
<path fill="#111a14" d="M1058 320h2v20h-2zM1062 320h2v20h-2zM1066 320h2v20h-2zM1070 320h2v20h-2zM1076 320h2v20h-2zM1080 320h2v20h-2zM1084 320h2v20h-2zM1090 320h2v20h-2zM1094 320h2v20h-2zM1098 320h2v20h-2z"/>
<path fill="#4f9a6c" d="M1102 320h2v20h-2z"/>
<path fill="#111a14" d="M1104 320h2v20h-2zM1112 320h2v20h-2z"/>
<path fill="#4f9a6c" d="M1116 320h2v20h-2z"/>
<path fill="#111a14" d="M1118 320h2v20h-2zM1122 320h2v20h-2zM1126 320h2v20h-2z"/>
<path fill="#4f9a6c" d="M1130 320h2v20h-2z"/>
<path fill="#111a14" d="M1132 320h2v20h-2zM1136 320h2v20h-2zM1140 320h2v20h-2zM1144 320h2v20h-2zM1150 320h2v20h-2zM1154 320h2v20h-2zM1158 320h2v20h-2z"/>
<path fill="#80fcb0" d="M1182 238h142v172h-142z"/>
<path fill="#3e7f5a" d="M1182 238h142v2h-142zM1182 270h142v2h-142zM1182 238h2v172h-2z"/>
<path fill="#4f9f70" d="M1218 272h2v138h-2zM1256 272h2v138h-2zM1292 272h2v138h-2z"/>
<path fill="#111a14" d="M1186 320h2v20h-2z"/>
<path fill="#4f9a6c" d="M1190 320h2v20h-2z"/>
<path fill="#111a14" d="M1192 320h2v20h-2zM1196 320h2v20h-2zM1200 320h2v20h-2z"/>
<path fill="#4f9a6c" d="M1204 320h2v20h-2z"/>
<path fill="#111a14" d="M1206 320h2v20h-2zM1210 320h2v20h-2zM1214 320h2v20h-2zM1218 320h2v20h-2zM1224 320h2v20h-2zM1228 320h2v20h-2zM1232 320h2v20h-2zM1236 320h2v20h-2zM1242 320h2v20h-2zM1246 320h2v20h-2z"/>
<path fill="#4f9a6c" d="M1250 320h2v20h-2z"/>
<path fill="#111a14" d="M1252 320h2v20h-2zM1260 320h2v20h-2z"/>
<path fill="#4f9a6c" d="M1264 320h2v20h-2z"/>
<path fill="#111a14" d="M1266 320h2v20h-2zM1270 320h2v20h-2zM1274 320h2v20h-2z"/>
<path fill="#4f9a6c" d="M1278 320h2v20h-2z"/>
<path fill="#111a14" d="M1280 320h2v20h-2zM1284 320h2v20h-2zM1288 320h2v20h-2zM1292 320h2v20h-2zM1298 320h2v20h-2zM1302 320h2v20h-2zM1306 320h2v20h-2zM1310 320h2v20h-2zM1316 320h2v20h-2zM1320 320h2v20h-2z"/>
<path fill="#666666" d="M1324 238h6v34h-6z"/>
<path fill="#80fcb0" d="M1332 238h108v172h-108z"/>
<path fill="#3e7f5a" d="M1332 238h108v2h-108zM1332 270h108v2h-108zM1332 238h2v172h-2z"/>
<path fill="#4f9f70" d="M1366 272h2v138h-2zM1404 272h2v138h-2z"/>
<path fill="#111a14" d="M1334 320h2v20h-2z"/>
<path fill="#4f9a6c" d="M1338 320h2v20h-2z"/>
<path fill="#111a14" d="M1340 320h2v20h-2zM1344 320h2v20h-2zM1348 320h2v20h-2z"/>
<path fill="#4f9a6c" d="M1352 320h2v20h-2z"/>
<path fill="#111a14" d="M1354 320h2v20h-2zM1358 320h2v20h-2zM1362 320h2v20h-2zM1366 320h2v20h-2zM1372 320h2v20h-2zM1376 320h2v20h-2zM1380 320h2v20h-2zM1384 320h2v20h-2zM1390 320h2v20h-2zM1394 320h2v20h-2z"/>
<path fill="#4f9a6c" d="M1398 320h2v20h-2z"/>
<path fill="#111a14" d="M1400 320h2v20h-2zM1408 320h2v20h-2z"/>
<path fill="#4f9a6c" d="M1412 320h2v20h-2z"/>
<path fill="#111a14" d="M1414 320h2v20h-2zM1418 320h2v20h-2zM1422 320h2v20h-2z"/>
<path fill="#4f9a6c" d="M1426 320h2v20h-2z"/>
<path fill="#111a14" d="M1428 320h2v20h-2zM1432 320h2v20h-2zM1436 320h2v20h-2z"/>
<path fill="#80fcb0" d="M1478 238h138v172h-138z"/>
<path fill="#3e7f5a" d="M1478 238h138v2h-138zM1478 270h138v2h-138zM1478 238h2v172h-2z"/>
<path fill="#4f9f70" d="M1514 272h2v138h-2zM1550 272h2v138h-2zM1588 272h2v138h-2z"/>
<path fill="#111a14" d="M1482 320h2v20h-2z"/>
<path fill="#4f9a6c" d="M1486 320h2v20h-2z"/>
<path fill="#111a14" d="M1488 320h2v20h-2zM1492 320h2v20h-2zM1496 320h2v20h-2z"/>
<path fill="#4f9a6c" d="M1500 320h2v20h-2z"/>
<path fill="#111a14" d="M1502 320h2v20h-2zM1506 320h2v20h-2zM1510 320h2v20h-2zM1514 320h2v20h-2zM1520 320h2v20h-2zM1524 320h2v20h-2zM1528 320h2v20h-2zM1532 320h2v20h-2zM1538 320h2v20h-2zM1542 320h2v20h-2z"/>
<path fill="#4f9a6c" d="M1546 320h2v20h-2z"/>
<path fill="#111a14" d="M1548 320h2v20h-2zM1554 320h2v20h-2z"/>
<path fill="#4f9a6c" d="M1558 320h2v20h-2z"/>
<path fill="#111a14" d="M1560 320h2v20h-2zM1564 320h2v20h-2zM1568 320h2v20h-2z"/>
<path fill="#4f9a6c" d="M1572 320h2v20h-2z"/>
<path fill="#111a14" d="M1574 320h2v20h-2zM1578 320h2v20h-2zM1582 320h2v20h-2zM1586 320h2v20h-2zM1594 320h2v20h-2zM1598 320h2v20h-2zM1602 320h2v20h-2zM1606 320h2v20h-2zM1612 320h2v20h-2z"/>
<path fill="#80fcb0" d="M1662 238h142v172h-142z"/>
<path fill="#3e7f5a" d="M1662 238h142v2h-142zM1662 270h142v2h-142zM1662 238h2v172h-2z"/>
<path fill="#4f9f70" d="M1698 272h2v138h-2zM1736 272h2v138h-2zM1772 272h2v138h-2z"/>
<path fill="#111a14" d="M1668 320h2v20h-2zM1672 320h2v20h-2zM1676 320h2v20h-2zM1680 320h2v20h-2zM1686 320h2v20h-2zM1690 320h2v20h-2z"/>
<path fill="#4f9a6c" d="M1694 320h2v20h-2z"/>
<path fill="#111a14" d="M1696 320h2v20h-2zM1702 320h2v20h-2z"/>
<path fill="#4f9a6c" d="M1706 320h2v20h-2z"/>
<path fill="#111a14" d="M1708 320h2v20h-2zM1712 320h2v20h-2zM1716 320h2v20h-2z"/>
<path fill="#4f9a6c" d="M1720 320h2v20h-2z"/>
<path fill="#111a14" d="M1722 320h2v20h-2zM1726 320h2v20h-2zM1730 320h2v20h-2zM1734 320h2v20h-2zM1742 320h2v20h-2zM1746 320h2v20h-2zM1750 320h2v20h-2zM1754 320h2v20h-2zM1760 320h2v20h-2zM1764 320h2v20h-2z"/>
<path fill="#4f9a6c" d="M1768 320h2v20h-2z"/>
<path fill="#111a14" d="M1770 320h2v20h-2zM1776 320h2v20h-2z"/>
<path fill="#4f9a6c" d="M1780 320h2v20h-2z"/>
<path fill="#111a14" d="M1782 320h2v20h-2zM1786 320h2v20h-2zM1790 320h2v20h-2z"/>
<path fill="#4f9a6c" d="M1794 320h2v20h-2z"/>
<path fill="#111a14" d="M1796 320h2v20h-2zM1800 320h2v20h-2z"/>
<path fill="#666666" d="M1804 238h6v34h-6z"/>
<path fill="#6a6a6a" d="M1808 320h2v20h-2z"/>
<path fill="#80fcb0" d="M1810 238h138v172h-138z"/>
<path fill="#3e7f5a" d="M1810 238h138v2h-138zM1810 270h138v2h-138zM1810 238h2v172h-2z"/>
<path fill="#4f9f70" d="M1846 272h2v138h-2zM1884 272h2v138h-2zM1920 272h2v138h-2z"/>
<path fill="#111a14" d="M1816 320h2v20h-2zM1820 320h2v20h-2zM1824 320h2v20h-2zM1828 320h2v20h-2zM1834 320h2v20h-2zM1838 320h2v20h-2z"/>
<path fill="#4f9a6c" d="M1842 320h2v20h-2z"/>
<path fill="#111a14" d="M1844 320h2v20h-2zM1850 320h2v20h-2z"/>
<path fill="#4f9a6c" d="M1854 320h2v20h-2z"/>
<path fill="#111a14" d="M1856 320h2v20h-2zM1860 320h2v20h-2zM1864 320h2v20h-2z"/>
<path fill="#4f9a6c" d="M1868 320h2v20h-2z"/>
<path fill="#111a14" d="M1870 320h2v20h-2zM1874 320h2v20h-2zM1878 320h2v20h-2zM1882 320h2v20h-2zM1890 320h2v20h-2zM1894 320h2v20h-2zM1898 320h2v20h-2zM1902 320h2v20h-2zM1908 320h2v20h-2zM1912 320h2v20h-2z"/>
<path fill="#4f9a6c" d="M1916 320h2v20h-2z"/>
<path fill="#111a14" d="M1918 320h2v20h-2zM1924 320h2v20h-2z"/>
<path fill="#4f9a6c" d="M1928 320h2v20h-2z"/>
<path fill="#111a14" d="M1930 320h2v20h-2zM1934 320h2v20h-2zM1938 320h2v20h-2z"/>
<path fill="#4f9a6c" d="M1942 320h2v20h-2z"/>
<path fill="#111a14" d="M1944 320h2v20h-2z"/>
<path fill="#666666" d="M1948 238h10v34h-10z"/>
<path fill="#6a6a6a" d="M1952 320h2v20h-2zM1956 320h2v20h-2z"/>
<path fill="#80fcb0" d="M1958 238h142v172h-142z"/>
<path fill="#3e7f5a" d="M1958 238h142v2h-142zM1958 270h142v2h-142zM1958 238h2v172h-2z"/>
<path fill="#4f9f70" d="M1994 272h2v138h-2zM2030 272h2v138h-2zM2068 272h2v138h-2z"/>
<path fill="#111a14" d="M1964 320h2v20h-2zM1968 320h2v20h-2zM1972 320h2v20h-2zM1976 320h2v20h-2zM1982 320h2v20h-2zM1986 320h2v20h-2z"/>
<path fill="#4f9a6c" d="M1990 320h2v20h-2z"/>
<path fill="#111a14" d="M1992 320h2v20h-2zM1998 320h2v20h-2z"/>
<path fill="#4f9a6c" d="M2002 320h2v20h-2z"/>
<path fill="#111a14" d="M2004 320h2v20h-2zM2008 320h2v20h-2zM2012 320h2v20h-2z"/>
<path fill="#4f9a6c" d="M2016 320h2v20h-2z"/>
<path fill="#111a14" d="M2018 320h2v20h-2zM2022 320h2v20h-2zM2026 320h2v20h-2zM2030 320h2v20h-2zM2036 320h2v20h-2zM2040 320h2v20h-2zM2044 320h2v20h-2zM2050 320h2v20h-2zM2054 320h2v20h-2zM2058 320h2v20h-2z"/>
<path fill="#4f9a6c" d="M2062 320h2v20h-2z"/>
<path fill="#111a14" d="M2064 320h2v20h-2zM2072 320h2v20h-2z"/>
<path fill="#4f9a6c" d="M2076 320h2v20h-2z"/>
<path fill="#111a14" d="M2078 320h2v20h-2zM2082 320h2v20h-2zM2086 320h2v20h-2z"/>
<path fill="#4f9a6c" d="M2090 320h2v20h-2z"/>
<path fill="#111a14" d="M2092 320h2v20h-2zM2096 320h2v20h-2z"/>
<path fill="#666666" d="M2100 238h6v34h-6z"/>
<path fill="#80fcb0" d="M2104 238h144v172h-144z"/>
<path fill="#3e7f5a" d="M2104 238h144v2h-144zM2104 270h144v2h-144zM2104 238h2v172h-2z"/>
<path fill="#4f9f70" d="M2142 272h2v138h-2zM2178 272h2v138h-2zM2216 272h2v138h-2z"/>
<path fill="#111a14" d="M2110 320h2v20h-2zM2114 320h2v20h-2zM2118 320h2v20h-2zM2124 320h2v20h-2zM2128 320h2v20h-2zM2132 320h2v20h-2z"/>
<path fill="#4f9a6c" d="M2136 320h2v20h-2z"/>
<path fill="#111a14" d="M2138 320h2v20h-2zM2146 320h2v20h-2z"/>
<path fill="#4f9a6c" d="M2150 320h2v20h-2z"/>
<path fill="#111a14" d="M2152 320h2v20h-2zM2156 320h2v20h-2zM2160 320h2v20h-2z"/>
<path fill="#4f9a6c" d="M2164 320h2v20h-2z"/>
<path fill="#111a14" d="M2166 320h2v20h-2zM2170 320h2v20h-2zM2174 320h2v20h-2zM2178 320h2v20h-2zM2184 320h2v20h-2zM2188 320h2v20h-2zM2192 320h2v20h-2zM2198 320h2v20h-2zM2202 320h2v20h-2zM2206 320h2v20h-2z"/>
<path fill="#4f9a6c" d="M2210 320h2v20h-2z"/>
<path fill="#111a14" d="M2212 320h2v20h-2zM2220 320h2v20h-2z"/>
<path fill="#4f9a6c" d="M2224 320h2v20h-2z"/>
<path fill="#111a14" d="M2226 320h2v20h-2zM2230 320h2v20h-2zM2234 320h2v20h-2z"/>
<path fill="#4f9a6c" d="M2238 320h2v20h-2z"/>
<path fill="#111a14" d="M2240 320h2v20h-2zM2244 320h2v20h-2z"/>
<path fill="#666666" d="M2248 238h4v34h-4z"/>
<path fill="#80fcb0" d="M2252 238h146v172h-146z"/>
<path fill="#3e7f5a" d="M2252 238h146v2h-146zM2252 270h146v2h-146zM2252 238h2v172h-2z"/>
<path fill="#4f9f70" d="M2290 272h2v138h-2zM2326 272h2v138h-2zM2364 272h2v138h-2z"/>
<path fill="#111a14" d="M2258 320h2v20h-2zM2262 320h2v20h-2zM2266 320h2v20h-2zM2270 320h2v20h-2zM2276 320h2v20h-2zM2280 320h2v20h-2z"/>
<path fill="#4f9a6c" d="M2284 320h2v20h-2z"/>
<path fill="#111a14" d="M2286 320h2v20h-2zM2294 320h2v20h-2z"/>
<path fill="#4f9a6c" d="M2298 320h2v20h-2z"/>
<path fill="#111a14" d="M2300 320h2v20h-2zM2304 320h2v20h-2zM2308 320h2v20h-2z"/>
<path fill="#4f9a6c" d="M2312 320h2v20h-2z"/>
<path fill="#111a14" d="M2314 320h2v20h-2zM2318 320h2v20h-2zM2322 320h2v20h-2zM2326 320h2v20h-2zM2332 320h2v20h-2zM2336 320h2v20h-2zM2340 320h2v20h-2zM2344 320h2v20h-2zM2350 320h2v20h-2zM2354 320h2v20h-2z"/>
<path fill="#4f9a6c" d="M2358 320h2v20h-2z"/>
<path fill="#111a14" d="M2360 320h2v20h-2zM2368 320h2v20h-2z"/>
<path fill="#4f9a6c" d="M2372 320h2v20h-2z"/>
<path fill="#111a14" d="M2374 320h2v20h-2zM2378 320h2v20h-2zM2382 320h2v20h-2z"/>
<path fill="#4f9a6c" d="M2386 320h2v20h-2z"/>
<path fill="#111a14" d="M2388 320h2v20h-2zM2392 320h2v20h-2z"/>
<path fill="#666666" d="M2398 238h4v34h-4z"/>
<path fill="#80fcb0" d="M2400 238h74v172h-74z"/>
<path fill="#3e7f5a" d="M2400 238h74v2h-74zM2400 270h74v2h-74zM2400 238h2v172h-2z"/>
<path fill="#4f9f70" d="M2438 272h2v138h-2z"/>
<path fill="#111a14" d="M2406 320h2v20h-2zM2410 320h2v20h-2zM2414 320h2v20h-2zM2418 320h2v20h-2zM2424 320h2v20h-2zM2428 320h2v20h-2z"/>
<path fill="#4f9a6c" d="M2432 320h2v20h-2z"/>
<path fill="#111a14" d="M2434 320h2v20h-2zM2442 320h2v20h-2z"/>
<path fill="#4f9a6c" d="M2446 320h2v20h-2z"/>
<path fill="#111a14" d="M2448 320h2v20h-2zM2452 320h2v20h-2zM2456 320h2v20h-2z"/>
<path fill="#4f9a6c" d="M2460 320h2v20h-2z"/>
<path fill="#111a14" d="M2462 320h2v20h-2zM2466 320h2v20h-2zM2470 320h2v20h-2z"/>
<path fill="#666666" d="M2474 238h74v34h-74z"/>
<path fill="#6a6a6a" d="M2480 320h2v20h-2zM2484 320h2v20h-2zM2488 320h2v20h-2zM2492 320h2v20h-2zM2498 320h2v20h-2zM2502 320h2v20h-2z"/>
<path fill="#555555" d="M2506 320h2v20h-2z"/>
<path fill="#6a6a6a" d="M2508 320h2v20h-2zM2514 320h2v20h-2z"/>
<path fill="#555555" d="M2518 320h2v20h-2z"/>
<path fill="#6a6a6a" d="M2520 320h2v20h-2zM2524 320h2v20h-2zM2528 320h2v20h-2z"/>
<path fill="#555555" d="M2532 320h2v20h-2z"/>
<path fill="#6a6a6a" d="M2534 320h2v20h-2zM2538 320h2v20h-2zM2542 320h2v20h-2zM2546 320h2v20h-2z"/>
<path fill="#6b6b6b" d="M2 414h146v34h-146z"/>
<path fill="#2a2a2a" d="M36 448h2v172h-2zM74 448h2v172h-2zM110 448h2v172h-2z"/>
<path fill="#6a6a6a" d="M6 458h2v12h-2zM34 458h2v12h-2zM10 500h2v12h-2zM16 500h2v12h-2zM32 500h2v12h-2zM16 514h2v12h-2zM28 514h2v12h-2zM12 528h2v12h-2zM24 528h2v12h-2zM2 598h2v12h-2zM20 598h4v12h-4zM42 458h2v12h-2zM70 458h2v12h-2zM46 500h2v12h-2zM52 500h2v12h-2zM68 500h2v12h-2zM52 514h2v12h-2zM64 514h2v12h-2zM48 528h2v12h-2zM60 528h2v12h-2zM38 598h2v12h-2zM56 598h4v12h-4zM80 458h2v12h-2zM108 458h2v12h-2zM84 500h2v12h-2zM90 500h2v12h-2zM106 500h2v12h-2zM90 514h2v12h-2zM102 514h2v12h-2zM86 528h2v12h-2zM98 528h2v12h-2zM76 598h2v12h-2zM94 598h4v12h-4zM116 458h2v12h-2zM144 458h2v12h-2zM120 500h2v12h-2zM126 500h2v12h-2zM142 500h2v12h-2zM126 514h2v12h-2zM138 514h2v12h-2zM122 528h2v12h-2zM134 528h2v12h-2zM112 598h2v12h-2zM130 598h4v12h-4z"/>
<text x="7" y="438" font-size="18.5" fill="#3a3a3a" textLength="93" lengthAdjust="spacingAndGlyphs">Bassline 8</text>
<path fill="#5bbdb0" d="M148 414h148v206h-148z"/>
<path fill="#2a625b" d="M148 414h148v2h-148zM148 446h148v2h-148zM148 414h2v206h-2z"/>
<path fill="#30706a" d="M184 448h2v172h-2zM222 448h2v172h-2zM258 448h2v172h-2z"/>
<path fill="#2f6a63" d="M152 458h2v12h-2z"/>
<path fill="#141414" d="M154 458h2v12h-2z"/>
<path fill="#2f6a63" d="M180 458h2v12h-2z"/>
<path fill="#141414" d="M182 458h2v12h-2z"/>
<path fill="#2f6a63" d="M156 500h2v12h-2z"/>
<path fill="#141414" d="M158 500h2v12h-2z"/>
<path fill="#2f6a63" d="M162 500h2v12h-2z"/>
<path fill="#141414" d="M164 500h2v12h-2z"/>
<path fill="#2f6a63" d="M178 500h2v12h-2z"/>
<path fill="#141414" d="M180 500h2v12h-2z"/>
<path fill="#2f6a63" d="M162 514h2v12h-2z"/>
<path fill="#141414" d="M164 514h2v12h-2z"/>
<path fill="#2f6a63" d="M174 514h2v12h-2z"/>
<path fill="#141414" d="M176 514h2v12h-2z"/>
<path fill="#2f6a63" d="M158 528h2v12h-2z"/>
<path fill="#141414" d="M160 528h2v12h-2z"/>
<path fill="#2f6a63" d="M170 528h2v12h-2z"/>
<path fill="#141414" d="M172 528h2v12h-2zM150 598h2v12h-2z"/>
<path fill="#2f6a63" d="M166 598h2v12h-2z"/>
<path fill="#141414" d="M168 598h4v12h-4z"/>
<path fill="#2f6a63" d="M188 458h2v12h-2z"/>
<path fill="#141414" d="M190 458h2v12h-2z"/>
<path fill="#2f6a63" d="M216 458h2v12h-2z"/>
<path fill="#141414" d="M218 458h2v12h-2z"/>
<path fill="#2f6a63" d="M192 500h2v12h-2z"/>
<path fill="#141414" d="M194 500h2v12h-2z"/>
<path fill="#2f6a63" d="M198 500h2v12h-2z"/>
<path fill="#141414" d="M200 500h2v12h-2z"/>
<path fill="#2f6a63" d="M214 500h2v12h-2z"/>
<path fill="#141414" d="M216 500h2v12h-2z"/>
<path fill="#2f6a63" d="M198 514h2v12h-2z"/>
<path fill="#141414" d="M200 514h2v12h-2z"/>
<path fill="#2f6a63" d="M210 514h2v12h-2z"/>
<path fill="#141414" d="M212 514h2v12h-2z"/>
<path fill="#2f6a63" d="M194 528h2v12h-2z"/>
<path fill="#141414" d="M196 528h2v12h-2z"/>
<path fill="#2f6a63" d="M206 528h2v12h-2z"/>
<path fill="#141414" d="M208 528h2v12h-2z"/>
<path fill="#2f6a63" d="M184 598h2v12h-2z"/>
<path fill="#141414" d="M186 598h2v12h-2z"/>
<path fill="#2f6a63" d="M202 598h2v12h-2z"/>
<path fill="#141414" d="M204 598h4v12h-4z"/>
<path fill="#2f6a63" d="M226 458h2v12h-2z"/>
<path fill="#141414" d="M228 458h2v12h-2z"/>
<path fill="#2f6a63" d="M254 458h2v12h-2z"/>
<path fill="#141414" d="M256 458h2v12h-2z"/>
<path fill="#2f6a63" d="M230 500h2v12h-2z"/>
<path fill="#141414" d="M232 500h2v12h-2z"/>
<path fill="#2f6a63" d="M236 500h2v12h-2z"/>
<path fill="#141414" d="M238 500h2v12h-2z"/>
<path fill="#2f6a63" d="M252 500h2v12h-2z"/>
<path fill="#141414" d="M254 500h2v12h-2z"/>
<path fill="#2f6a63" d="M236 514h2v12h-2z"/>
<path fill="#141414" d="M238 514h2v12h-2z"/>
<path fill="#2f6a63" d="M248 514h2v12h-2z"/>
<path fill="#141414" d="M250 514h2v12h-2z"/>
<path fill="#2f6a63" d="M232 528h2v12h-2z"/>
<path fill="#141414" d="M234 528h2v12h-2z"/>
<path fill="#2f6a63" d="M244 528h2v12h-2z"/>
<path fill="#141414" d="M246 528h2v12h-2z"/>
<path fill="#2f6a63" d="M222 598h2v12h-2z"/>
<path fill="#141414" d="M224 598h2v12h-2z"/>
<path fill="#2f6a63" d="M240 598h2v12h-2z"/>
<path fill="#141414" d="M242 598h4v12h-4z"/>
<path fill="#2f6a63" d="M262 458h2v12h-2z"/>
<path fill="#141414" d="M264 458h2v12h-2z"/>
<path fill="#2f6a63" d="M290 458h2v12h-2z"/>
<path fill="#141414" d="M292 458h2v12h-2z"/>
<path fill="#2f6a63" d="M266 500h2v12h-2z"/>
<path fill="#141414" d="M268 500h2v12h-2z"/>
<path fill="#2f6a63" d="M272 500h2v12h-2z"/>
<path fill="#141414" d="M274 500h2v12h-2z"/>
<path fill="#2f6a63" d="M288 500h2v12h-2z"/>
<path fill="#141414" d="M290 500h2v12h-2z"/>
<path fill="#2f6a63" d="M272 514h2v12h-2z"/>
<path fill="#141414" d="M274 514h2v12h-2z"/>
<path fill="#2f6a63" d="M284 514h2v12h-2z"/>
<path fill="#141414" d="M286 514h2v12h-2z"/>
<path fill="#2f6a63" d="M268 528h2v12h-2z"/>
<path fill="#141414" d="M270 528h2v12h-2z"/>
<path fill="#2f6a63" d="M280 528h2v12h-2z"/>
<path fill="#141414" d="M282 528h2v12h-2z"/>
<path fill="#2f6a63" d="M258 598h2v12h-2z"/>
<path fill="#141414" d="M260 598h2v12h-2z"/>
<path fill="#2f6a63" d="M276 598h2v12h-2z"/>
<path fill="#141414" d="M278 598h4v12h-4z"/>
<text x="155.5" y="438" font-size="18.5" fill="#0f2522" textLength="94" lengthAdjust="spacingAndGlyphs">Bassline 8</text>
<path fill="#5bbdb0" d="M296 414h148v206h-148z"/>
<path fill="#2a625b" d="M296 414h148v2h-148zM296 446h148v2h-148zM296 414h2v206h-2z"/>
<path fill="#30706a" d="M332 448h2v172h-2zM370 448h2v172h-2zM406 448h2v172h-2z"/>
<path fill="#2f6a63" d="M300 458h2v12h-2z"/>
<path fill="#141414" d="M302 458h2v12h-2z"/>
<path fill="#2f6a63" d="M328 458h2v12h-2z"/>
<path fill="#141414" d="M330 458h2v12h-2z"/>
<path fill="#2f6a63" d="M304 500h2v12h-2z"/>
<path fill="#141414" d="M306 500h2v12h-2z"/>
<path fill="#2f6a63" d="M310 500h2v12h-2z"/>
<path fill="#141414" d="M312 500h2v12h-2z"/>
<path fill="#2f6a63" d="M326 500h2v12h-2z"/>
<path fill="#141414" d="M328 500h2v12h-2z"/>
<path fill="#2f6a63" d="M310 514h2v12h-2z"/>
<path fill="#141414" d="M312 514h2v12h-2z"/>
<path fill="#2f6a63" d="M322 514h2v12h-2z"/>
<path fill="#141414" d="M324 514h2v12h-2z"/>
<path fill="#2f6a63" d="M306 528h2v12h-2z"/>
<path fill="#141414" d="M308 528h2v12h-2z"/>
<path fill="#2f6a63" d="M318 528h2v12h-2z"/>
<path fill="#141414" d="M320 528h2v12h-2zM298 598h2v12h-2z"/>
<path fill="#2f6a63" d="M314 598h2v12h-2z"/>
<path fill="#141414" d="M316 598h4v12h-4z"/>
<path fill="#2f6a63" d="M336 458h2v12h-2z"/>
<path fill="#141414" d="M338 458h2v12h-2z"/>
<path fill="#2f6a63" d="M364 458h2v12h-2z"/>
<path fill="#141414" d="M366 458h2v12h-2z"/>
<path fill="#2f6a63" d="M340 500h2v12h-2z"/>
<path fill="#141414" d="M342 500h2v12h-2z"/>
<path fill="#2f6a63" d="M346 500h2v12h-2z"/>
<path fill="#141414" d="M348 500h2v12h-2z"/>
<path fill="#2f6a63" d="M362 500h2v12h-2z"/>
<path fill="#141414" d="M364 500h2v12h-2z"/>
<path fill="#2f6a63" d="M346 514h2v12h-2z"/>
<path fill="#141414" d="M348 514h2v12h-2z"/>
<path fill="#2f6a63" d="M358 514h2v12h-2z"/>
<path fill="#141414" d="M360 514h2v12h-2z"/>
<path fill="#2f6a63" d="M342 528h2v12h-2z"/>
<path fill="#141414" d="M344 528h2v12h-2z"/>
<path fill="#2f6a63" d="M354 528h2v12h-2z"/>
<path fill="#141414" d="M356 528h2v12h-2z"/>
<path fill="#2f6a63" d="M332 598h2v12h-2z"/>
<path fill="#141414" d="M334 598h2v12h-2z"/>
<path fill="#2f6a63" d="M350 598h2v12h-2z"/>
<path fill="#141414" d="M352 598h4v12h-4z"/>
<path fill="#2f6a63" d="M374 458h2v12h-2z"/>
<path fill="#141414" d="M376 458h2v12h-2z"/>
<path fill="#2f6a63" d="M402 458h2v12h-2z"/>
<path fill="#141414" d="M404 458h2v12h-2z"/>
<path fill="#2f6a63" d="M378 500h2v12h-2z"/>
<path fill="#141414" d="M380 500h2v12h-2z"/>
<path fill="#2f6a63" d="M384 500h2v12h-2z"/>
<path fill="#141414" d="M386 500h2v12h-2z"/>
<path fill="#2f6a63" d="M400 500h2v12h-2z"/>
<path fill="#141414" d="M402 500h2v12h-2z"/>
<path fill="#2f6a63" d="M384 514h2v12h-2z"/>
<path fill="#141414" d="M386 514h2v12h-2z"/>
<path fill="#2f6a63" d="M396 514h2v12h-2z"/>
<path fill="#141414" d="M398 514h2v12h-2z"/>
<path fill="#2f6a63" d="M380 528h2v12h-2z"/>
<path fill="#141414" d="M382 528h2v12h-2z"/>
<path fill="#2f6a63" d="M392 528h2v12h-2z"/>
<path fill="#141414" d="M394 528h2v12h-2z"/>
<path fill="#2f6a63" d="M370 598h2v12h-2z"/>
<path fill="#141414" d="M372 598h2v12h-2z"/>
<path fill="#2f6a63" d="M388 598h2v12h-2z"/>
<path fill="#141414" d="M390 598h4v12h-4z"/>
<path fill="#2f6a63" d="M410 458h2v12h-2z"/>
<path fill="#141414" d="M412 458h2v12h-2z"/>
<path fill="#2f6a63" d="M438 458h2v12h-2z"/>
<path fill="#141414" d="M440 458h2v12h-2z"/>
<path fill="#2f6a63" d="M414 500h2v12h-2z"/>
<path fill="#141414" d="M416 500h2v12h-2z"/>
<path fill="#2f6a63" d="M420 500h2v12h-2z"/>
<path fill="#141414" d="M422 500h2v12h-2z"/>
<path fill="#2f6a63" d="M436 500h2v12h-2z"/>
<path fill="#141414" d="M438 500h2v12h-2z"/>
<path fill="#2f6a63" d="M420 514h2v12h-2z"/>
<path fill="#141414" d="M422 514h2v12h-2z"/>
<path fill="#2f6a63" d="M432 514h2v12h-2z"/>
<path fill="#141414" d="M434 514h2v12h-2z"/>
<path fill="#2f6a63" d="M416 528h2v12h-2z"/>
<path fill="#141414" d="M418 528h2v12h-2z"/>
<path fill="#2f6a63" d="M428 528h2v12h-2z"/>
<path fill="#141414" d="M430 528h2v12h-2z"/>
<path fill="#2f6a63" d="M406 598h2v12h-2z"/>
<path fill="#141414" d="M408 598h2v12h-2z"/>
<path fill="#2f6a63" d="M424 598h2v12h-2z"/>
<path fill="#141414" d="M426 598h4v12h-4z"/>
<text x="303.5" y="438" font-size="18.5" fill="#0f2522" textLength="94" lengthAdjust="spacingAndGlyphs">Bassline 8</text>
<path fill="#5bbdb0" d="M444 414h146v206h-146z"/>
<path fill="#2a625b" d="M444 414h146v2h-146zM444 446h146v2h-146zM444 414h2v206h-2z"/>
<path fill="#30706a" d="M480 448h2v172h-2zM516 448h2v172h-2zM554 448h2v172h-2z"/>
<path fill="#2f6a63" d="M448 458h2v12h-2z"/>
<path fill="#141414" d="M450 458h2v12h-2z"/>
<path fill="#2f6a63" d="M476 458h2v12h-2z"/>
<path fill="#141414" d="M478 458h2v12h-2z"/>
<path fill="#2f6a63" d="M452 500h2v12h-2z"/>
<path fill="#141414" d="M454 500h2v12h-2z"/>
<path fill="#2f6a63" d="M458 500h2v12h-2z"/>
<path fill="#141414" d="M460 500h2v12h-2z"/>
<path fill="#2f6a63" d="M474 500h2v12h-2z"/>
<path fill="#141414" d="M476 500h2v12h-2z"/>
<path fill="#2f6a63" d="M458 514h2v12h-2z"/>
<path fill="#141414" d="M460 514h2v12h-2z"/>
<path fill="#2f6a63" d="M470 514h2v12h-2z"/>
<path fill="#141414" d="M472 514h2v12h-2z"/>
<path fill="#2f6a63" d="M454 528h2v12h-2z"/>
<path fill="#141414" d="M456 528h2v12h-2z"/>
<path fill="#2f6a63" d="M466 528h2v12h-2z"/>
<path fill="#141414" d="M468 528h2v12h-2zM446 598h2v12h-2z"/>
<path fill="#2f6a63" d="M462 598h2v12h-2z"/>
<path fill="#141414" d="M464 598h4v12h-4z"/>
<path fill="#2f6a63" d="M484 458h2v12h-2z"/>
<path fill="#141414" d="M486 458h2v12h-2z"/>
<path fill="#2f6a63" d="M512 458h2v12h-2z"/>
<path fill="#141414" d="M514 458h2v12h-2z"/>
<path fill="#2f6a63" d="M488 500h2v12h-2z"/>
<path fill="#141414" d="M490 500h2v12h-2z"/>
<path fill="#2f6a63" d="M494 500h2v12h-2z"/>
<path fill="#141414" d="M496 500h2v12h-2z"/>
<path fill="#2f6a63" d="M510 500h2v12h-2z"/>
<path fill="#141414" d="M512 500h2v12h-2z"/>
<path fill="#2f6a63" d="M494 514h2v12h-2z"/>
<path fill="#141414" d="M496 514h2v12h-2z"/>
<path fill="#2f6a63" d="M506 514h2v12h-2z"/>
<path fill="#141414" d="M508 514h2v12h-2z"/>
<path fill="#2f6a63" d="M490 528h2v12h-2z"/>
<path fill="#141414" d="M492 528h2v12h-2z"/>
<path fill="#2f6a63" d="M502 528h2v12h-2z"/>
<path fill="#141414" d="M504 528h2v12h-2z"/>
<path fill="#2f6a63" d="M480 598h2v12h-2z"/>
<path fill="#141414" d="M482 598h2v12h-2z"/>
<path fill="#2f6a63" d="M498 598h2v12h-2z"/>
<path fill="#141414" d="M500 598h4v12h-4z"/>
<path fill="#2f6a63" d="M520 458h2v12h-2z"/>
<path fill="#141414" d="M522 458h2v12h-2z"/>
<path fill="#2f6a63" d="M548 458h2v12h-2z"/>
<path fill="#141414" d="M550 458h2v12h-2z"/>
<path fill="#2f6a63" d="M524 500h2v12h-2z"/>
<path fill="#141414" d="M526 500h2v12h-2z"/>
<path fill="#2f6a63" d="M530 500h2v12h-2z"/>
<path fill="#141414" d="M532 500h2v12h-2z"/>
<path fill="#2f6a63" d="M546 500h2v12h-2z"/>
<path fill="#141414" d="M548 500h2v12h-2z"/>
<path fill="#2f6a63" d="M530 514h2v12h-2z"/>
<path fill="#141414" d="M532 514h2v12h-2z"/>
<path fill="#2f6a63" d="M542 514h2v12h-2z"/>
<path fill="#141414" d="M544 514h2v12h-2z"/>
<path fill="#2f6a63" d="M526 528h2v12h-2z"/>
<path fill="#141414" d="M528 528h2v12h-2z"/>
<path fill="#2f6a63" d="M538 528h2v12h-2z"/>
<path fill="#141414" d="M540 528h2v12h-2z"/>
<path fill="#2f6a63" d="M516 598h2v12h-2z"/>
<path fill="#141414" d="M518 598h2v12h-2z"/>
<path fill="#2f6a63" d="M534 598h2v12h-2z"/>
<path fill="#141414" d="M536 598h4v12h-4z"/>
<path fill="#2f6a63" d="M558 458h2v12h-2z"/>
<path fill="#141414" d="M560 458h2v12h-2z"/>
<path fill="#2f6a63" d="M586 458h2v12h-2z"/>
<path fill="#141414" d="M588 458h2v12h-2z"/>
<path fill="#2f6a63" d="M562 500h2v12h-2z"/>
<path fill="#141414" d="M564 500h2v12h-2z"/>
<path fill="#2f6a63" d="M568 500h2v12h-2z"/>
<path fill="#141414" d="M570 500h2v12h-2z"/>
<path fill="#2f6a63" d="M584 500h2v12h-2z"/>
<path fill="#141414" d="M586 500h2v12h-2z"/>
<path fill="#2f6a63" d="M568 514h2v12h-2z"/>
<path fill="#141414" d="M570 514h2v12h-2z"/>
<path fill="#2f6a63" d="M580 514h2v12h-2z"/>
<path fill="#141414" d="M582 514h2v12h-2z"/>
<path fill="#2f6a63" d="M564 528h2v12h-2z"/>
<path fill="#141414" d="M566 528h2v12h-2z"/>
<path fill="#2f6a63" d="M576 528h2v12h-2z"/>
<path fill="#141414" d="M578 528h2v12h-2z"/>
<path fill="#2f6a63" d="M554 598h2v12h-2z"/>
<path fill="#141414" d="M556 598h2v12h-2z"/>
<path fill="#2f6a63" d="M572 598h2v12h-2z"/>
<path fill="#141414" d="M574 598h4v12h-4z"/>
<text x="451.5" y="438" font-size="18.5" fill="#0f2522" textLength="94" lengthAdjust="spacingAndGlyphs">Bassline 8</text>
<path fill="#5bbdb0" d="M590 414h144v206h-144z"/>
<path fill="#2a625b" d="M590 414h144v2h-144zM590 446h144v2h-144zM590 414h2v206h-2z"/>
<path fill="#30706a" d="M628 448h2v172h-2zM664 448h2v172h-2zM702 448h2v172h-2z"/>
<path fill="#2f6a63" d="M594 458h2v12h-2z"/>
<path fill="#141414" d="M596 458h2v12h-2z"/>
<path fill="#2f6a63" d="M622 458h2v12h-2z"/>
<path fill="#141414" d="M624 458h2v12h-2z"/>
<path fill="#2f6a63" d="M598 500h2v12h-2z"/>
<path fill="#141414" d="M600 500h2v12h-2z"/>
<path fill="#2f6a63" d="M604 500h2v12h-2z"/>
<path fill="#141414" d="M606 500h2v12h-2z"/>
<path fill="#2f6a63" d="M620 500h2v12h-2z"/>
<path fill="#141414" d="M622 500h2v12h-2z"/>
<path fill="#2f6a63" d="M604 514h2v12h-2z"/>
<path fill="#141414" d="M606 514h2v12h-2z"/>
<path fill="#2f6a63" d="M616 514h2v12h-2z"/>
<path fill="#141414" d="M618 514h2v12h-2z"/>
<path fill="#2f6a63" d="M600 528h2v12h-2z"/>
<path fill="#141414" d="M602 528h2v12h-2z"/>
<path fill="#2f6a63" d="M612 528h2v12h-2z"/>
<path fill="#141414" d="M614 528h2v12h-2zM592 598h2v12h-2z"/>
<path fill="#2f6a63" d="M608 598h2v12h-2z"/>
<path fill="#141414" d="M610 598h4v12h-4z"/>
<path fill="#2f6a63" d="M632 458h2v12h-2z"/>
<path fill="#141414" d="M634 458h2v12h-2z"/>
<path fill="#2f6a63" d="M660 458h2v12h-2z"/>
<path fill="#141414" d="M662 458h2v12h-2z"/>
<path fill="#2f6a63" d="M636 500h2v12h-2z"/>
<path fill="#141414" d="M638 500h2v12h-2z"/>
<path fill="#2f6a63" d="M642 500h2v12h-2z"/>
<path fill="#141414" d="M644 500h2v12h-2z"/>
<path fill="#2f6a63" d="M658 500h2v12h-2z"/>
<path fill="#141414" d="M660 500h2v12h-2z"/>
<path fill="#2f6a63" d="M642 514h2v12h-2z"/>
<path fill="#141414" d="M644 514h2v12h-2z"/>
<path fill="#2f6a63" d="M654 514h2v12h-2z"/>
<path fill="#141414" d="M656 514h2v12h-2z"/>
<path fill="#2f6a63" d="M638 528h2v12h-2z"/>
<path fill="#141414" d="M640 528h2v12h-2z"/>
<path fill="#2f6a63" d="M650 528h2v12h-2z"/>
<path fill="#141414" d="M652 528h2v12h-2z"/>
<path fill="#2f6a63" d="M628 598h2v12h-2z"/>
<path fill="#141414" d="M630 598h2v12h-2z"/>
<path fill="#2f6a63" d="M646 598h2v12h-2z"/>
<path fill="#141414" d="M648 598h4v12h-4z"/>
<path fill="#2f6a63" d="M668 458h2v12h-2z"/>
<path fill="#141414" d="M670 458h2v12h-2z"/>
<path fill="#2f6a63" d="M696 458h2v12h-2z"/>
<path fill="#141414" d="M698 458h2v12h-2z"/>
<path fill="#2f6a63" d="M672 500h2v12h-2z"/>
<path fill="#141414" d="M674 500h2v12h-2z"/>
<path fill="#2f6a63" d="M678 500h2v12h-2z"/>
<path fill="#141414" d="M680 500h2v12h-2z"/>
<path fill="#2f6a63" d="M694 500h2v12h-2z"/>
<path fill="#141414" d="M696 500h2v12h-2z"/>
<path fill="#2f6a63" d="M678 514h2v12h-2z"/>
<path fill="#141414" d="M680 514h2v12h-2z"/>
<path fill="#2f6a63" d="M690 514h2v12h-2z"/>
<path fill="#141414" d="M692 514h2v12h-2z"/>
<path fill="#2f6a63" d="M674 528h2v12h-2z"/>
<path fill="#141414" d="M676 528h2v12h-2z"/>
<path fill="#2f6a63" d="M686 528h2v12h-2z"/>
<path fill="#141414" d="M688 528h2v12h-2z"/>
<path fill="#2f6a63" d="M664 598h2v12h-2z"/>
<path fill="#141414" d="M666 598h2v12h-2z"/>
<path fill="#2f6a63" d="M682 598h2v12h-2z"/>
<path fill="#141414" d="M684 598h4v12h-4z"/>
<path fill="#2f6a63" d="M706 458h2v12h-2z"/>
<path fill="#141414" d="M708 458h2v12h-2z"/>
<path fill="#2f6a63" d="M710 500h2v12h-2z"/>
<path fill="#141414" d="M712 500h2v12h-2z"/>
<path fill="#2f6a63" d="M716 500h2v12h-2z"/>
<path fill="#141414" d="M718 500h2v12h-2z"/>
<path fill="#2f6a63" d="M716 514h2v12h-2z"/>
<path fill="#141414" d="M718 514h2v12h-2z"/>
<path fill="#2f6a63" d="M728 514h2v12h-2z"/>
<path fill="#141414" d="M730 514h2v12h-2z"/>
<path fill="#2f6a63" d="M712 528h2v12h-2z"/>
<path fill="#141414" d="M714 528h2v12h-2z"/>
<path fill="#2f6a63" d="M724 528h2v12h-2z"/>
<path fill="#141414" d="M726 528h2v12h-2z"/>
<path fill="#2f6a63" d="M702 598h2v12h-2z"/>
<path fill="#141414" d="M704 598h2v12h-2z"/>
<path fill="#2f6a63" d="M720 598h2v12h-2z"/>
<path fill="#141414" d="M722 598h4v12h-4z"/>
<text x="597.5" y="438" font-size="18.5" fill="#0f2522" textLength="94" lengthAdjust="spacingAndGlyphs">Bassline 8</text>
<path fill="#666666" d="M734 414h6v34h-6z"/>
<path fill="#6a6a6a" d="M736 458h2v12h-2z"/>
<path fill="#5bbdb0" d="M738 414h148v206h-148z"/>
<path fill="#2a625b" d="M738 414h148v2h-148zM738 446h148v2h-148zM738 414h2v206h-2z"/>
<path fill="#30706a" d="M776 448h2v172h-2zM812 448h2v172h-2zM850 448h2v172h-2z"/>
<path fill="#2f6a63" d="M742 458h2v12h-2z"/>
<path fill="#141414" d="M744 458h2v12h-2z"/>
<path fill="#2f6a63" d="M770 458h2v12h-2z"/>
<path fill="#141414" d="M772 458h2v12h-2z"/>
<path fill="#2f6a63" d="M746 500h2v12h-2z"/>
<path fill="#141414" d="M748 500h2v12h-2z"/>
<path fill="#2f6a63" d="M752 500h2v12h-2z"/>
<path fill="#141414" d="M754 500h2v12h-2z"/>
<path fill="#2f6a63" d="M768 500h2v12h-2z"/>
<path fill="#141414" d="M770 500h2v12h-2z"/>
<path fill="#2f6a63" d="M752 514h2v12h-2z"/>
<path fill="#141414" d="M754 514h2v12h-2z"/>
<path fill="#2f6a63" d="M764 514h2v12h-2z"/>
<path fill="#141414" d="M766 514h2v12h-2z"/>
<path fill="#2f6a63" d="M748 528h2v12h-2z"/>
<path fill="#141414" d="M750 528h2v12h-2z"/>
<path fill="#2f6a63" d="M760 528h2v12h-2z"/>
<path fill="#141414" d="M762 528h2v12h-2zM740 598h2v12h-2z"/>
<path fill="#2f6a63" d="M756 598h2v12h-2z"/>
<path fill="#141414" d="M758 598h4v12h-4z"/>
<path fill="#2f6a63" d="M780 458h2v12h-2z"/>
<path fill="#141414" d="M782 458h2v12h-2z"/>
<path fill="#2f6a63" d="M808 458h2v12h-2z"/>
<path fill="#141414" d="M810 458h2v12h-2z"/>
<path fill="#2f6a63" d="M784 500h2v12h-2z"/>
<path fill="#141414" d="M786 500h2v12h-2z"/>
<path fill="#2f6a63" d="M790 500h2v12h-2z"/>
<path fill="#141414" d="M792 500h2v12h-2z"/>
<path fill="#2f6a63" d="M806 500h2v12h-2z"/>
<path fill="#141414" d="M808 500h2v12h-2z"/>
<path fill="#2f6a63" d="M790 514h2v12h-2z"/>
<path fill="#141414" d="M792 514h2v12h-2z"/>
<path fill="#2f6a63" d="M802 514h2v12h-2z"/>
<path fill="#141414" d="M804 514h2v12h-2z"/>
<path fill="#2f6a63" d="M786 528h2v12h-2z"/>
<path fill="#141414" d="M788 528h2v12h-2z"/>
<path fill="#2f6a63" d="M798 528h2v12h-2z"/>
<path fill="#141414" d="M800 528h2v12h-2z"/>
<path fill="#2f6a63" d="M776 598h2v12h-2z"/>
<path fill="#141414" d="M778 598h2v12h-2z"/>
<path fill="#2f6a63" d="M794 598h2v12h-2z"/>
<path fill="#141414" d="M796 598h4v12h-4z"/>
<path fill="#2f6a63" d="M816 458h2v12h-2z"/>
<path fill="#141414" d="M818 458h2v12h-2z"/>
<path fill="#2f6a63" d="M844 458h2v12h-2z"/>
<path fill="#141414" d="M846 458h2v12h-2z"/>
<path fill="#2f6a63" d="M820 500h2v12h-2z"/>
<path fill="#141414" d="M822 500h2v12h-2z"/>
<path fill="#2f6a63" d="M826 500h2v12h-2z"/>
<path fill="#141414" d="M828 500h2v12h-2z"/>
<path fill="#2f6a63" d="M842 500h2v12h-2z"/>
<path fill="#141414" d="M844 500h2v12h-2z"/>
<path fill="#2f6a63" d="M826 514h2v12h-2z"/>
<path fill="#141414" d="M828 514h2v12h-2z"/>
<path fill="#2f6a63" d="M838 514h2v12h-2z"/>
<path fill="#141414" d="M840 514h2v12h-2z"/>
<path fill="#2f6a63" d="M822 528h2v12h-2z"/>
<path fill="#141414" d="M824 528h2v12h-2z"/>
<path fill="#2f6a63" d="M834 528h2v12h-2z"/>
<path fill="#141414" d="M836 528h2v12h-2z"/>
<path fill="#2f6a63" d="M812 598h2v12h-2z"/>
<path fill="#141414" d="M814 598h2v12h-2z"/>
<path fill="#2f6a63" d="M830 598h2v12h-2z"/>
<path fill="#141414" d="M832 598h4v12h-4z"/>
<path fill="#2f6a63" d="M854 458h2v12h-2z"/>
<path fill="#141414" d="M856 458h2v12h-2z"/>
<path fill="#2f6a63" d="M858 500h2v12h-2z"/>
<path fill="#141414" d="M860 500h2v12h-2z"/>
<path fill="#2f6a63" d="M864 500h2v12h-2z"/>
<path fill="#141414" d="M866 500h2v12h-2z"/>
<path fill="#2f6a63" d="M880 500h2v12h-2z"/>
<path fill="#141414" d="M882 500h2v12h-2z"/>
<path fill="#2f6a63" d="M864 514h2v12h-2z"/>
<path fill="#141414" d="M866 514h2v12h-2z"/>
<path fill="#2f6a63" d="M876 514h2v12h-2z"/>
<path fill="#141414" d="M878 514h2v12h-2z"/>
<path fill="#2f6a63" d="M860 528h2v12h-2z"/>
<path fill="#141414" d="M862 528h2v12h-2z"/>
<path fill="#2f6a63" d="M872 528h2v12h-2z"/>
<path fill="#141414" d="M874 528h2v12h-2z"/>
<path fill="#2f6a63" d="M850 598h2v12h-2z"/>
<path fill="#141414" d="M852 598h2v12h-2z"/>
<path fill="#2f6a63" d="M868 598h2v12h-2z"/>
<path fill="#141414" d="M870 598h4v12h-4z"/>
<text x="745.5" y="438" font-size="18.5" fill="#0f2522" textLength="94" lengthAdjust="spacingAndGlyphs">Bassline 8</text>
<path fill="#5bbdb0" d="M1036 414h140v206h-140z"/>
<path fill="#2a625b" d="M1036 414h140v2h-140zM1036 446h140v2h-140zM1036 414h2v206h-2z"/>
<path fill="#30706a" d="M1070 448h2v172h-2zM1108 448h2v172h-2zM1144 448h2v172h-2z"/>
<path fill="#2f6a63" d="M1038 458h2v12h-2z"/>
<path fill="#141414" d="M1040 458h2v12h-2z"/>
<path fill="#2f6a63" d="M1066 458h2v12h-2z"/>
<path fill="#141414" d="M1068 458h2v12h-2z"/>
<path fill="#2f6a63" d="M1042 500h2v12h-2z"/>
<path fill="#141414" d="M1044 500h2v12h-2z"/>
<path fill="#2f6a63" d="M1048 500h2v12h-2z"/>
<path fill="#141414" d="M1050 500h2v12h-2z"/>
<path fill="#2f6a63" d="M1064 500h2v12h-2z"/>
<path fill="#141414" d="M1066 500h2v12h-2z"/>
<path fill="#2f6a63" d="M1048 514h2v12h-2z"/>
<path fill="#141414" d="M1050 514h2v12h-2z"/>
<path fill="#2f6a63" d="M1060 514h2v12h-2z"/>
<path fill="#141414" d="M1062 514h2v12h-2z"/>
<path fill="#2f6a63" d="M1044 528h2v12h-2z"/>
<path fill="#141414" d="M1046 528h2v12h-2z"/>
<path fill="#2f6a63" d="M1056 528h2v12h-2z"/>
<path fill="#141414" d="M1058 528h2v12h-2zM1036 598h2v12h-2z"/>
<path fill="#2f6a63" d="M1052 598h2v12h-2z"/>
<path fill="#141414" d="M1054 598h4v12h-4z"/>
<path fill="#2f6a63" d="M1074 458h2v12h-2z"/>
<path fill="#141414" d="M1076 458h2v12h-2z"/>
<path fill="#2f6a63" d="M1102 458h2v12h-2z"/>
<path fill="#141414" d="M1104 458h2v12h-2z"/>
<path fill="#2f6a63" d="M1078 500h2v12h-2z"/>
<path fill="#141414" d="M1080 500h2v12h-2z"/>
<path fill="#2f6a63" d="M1084 500h2v12h-2z"/>
<path fill="#141414" d="M1086 500h2v12h-2z"/>
<path fill="#2f6a63" d="M1100 500h2v12h-2z"/>
<path fill="#141414" d="M1102 500h2v12h-2z"/>
<path fill="#2f6a63" d="M1084 514h2v12h-2z"/>
<path fill="#141414" d="M1086 514h2v12h-2z"/>
<path fill="#2f6a63" d="M1096 514h2v12h-2z"/>
<path fill="#141414" d="M1098 514h2v12h-2z"/>
<path fill="#2f6a63" d="M1080 528h2v12h-2z"/>
<path fill="#141414" d="M1082 528h2v12h-2z"/>
<path fill="#2f6a63" d="M1092 528h2v12h-2z"/>
<path fill="#141414" d="M1094 528h2v12h-2z"/>
<path fill="#2f6a63" d="M1070 598h2v12h-2z"/>
<path fill="#141414" d="M1072 598h2v12h-2z"/>
<path fill="#2f6a63" d="M1088 598h2v12h-2z"/>
<path fill="#141414" d="M1090 598h4v12h-4z"/>
<path fill="#2f6a63" d="M1112 458h2v12h-2z"/>
<path fill="#141414" d="M1114 458h2v12h-2z"/>
<path fill="#2f6a63" d="M1140 458h2v12h-2z"/>
<path fill="#141414" d="M1142 458h2v12h-2z"/>
<path fill="#2f6a63" d="M1116 500h2v12h-2z"/>
<path fill="#141414" d="M1118 500h2v12h-2z"/>
<path fill="#2f6a63" d="M1122 500h2v12h-2z"/>
<path fill="#141414" d="M1124 500h2v12h-2z"/>
<path fill="#2f6a63" d="M1138 500h2v12h-2z"/>
<path fill="#141414" d="M1140 500h2v12h-2z"/>
<path fill="#2f6a63" d="M1122 514h2v12h-2z"/>
<path fill="#141414" d="M1124 514h2v12h-2z"/>
<path fill="#2f6a63" d="M1134 514h2v12h-2z"/>
<path fill="#141414" d="M1136 514h2v12h-2z"/>
<path fill="#2f6a63" d="M1118 528h2v12h-2z"/>
<path fill="#141414" d="M1120 528h2v12h-2z"/>
<path fill="#2f6a63" d="M1130 528h2v12h-2z"/>
<path fill="#141414" d="M1132 528h2v12h-2z"/>
<path fill="#2f6a63" d="M1108 598h2v12h-2z"/>
<path fill="#141414" d="M1110 598h2v12h-2z"/>
<path fill="#2f6a63" d="M1126 598h2v12h-2z"/>
<path fill="#141414" d="M1128 598h4v12h-4z"/>
<path fill="#2f6a63" d="M1148 458h2v12h-2z"/>
<path fill="#141414" d="M1150 458h2v12h-2z"/>
<path fill="#2f6a63" d="M1152 500h2v12h-2z"/>
<path fill="#141414" d="M1154 500h2v12h-2z"/>
<path fill="#2f6a63" d="M1158 500h2v12h-2z"/>
<path fill="#141414" d="M1160 500h2v12h-2z"/>
<path fill="#2f6a63" d="M1158 514h2v12h-2z"/>
<path fill="#141414" d="M1160 514h2v12h-2z"/>
<path fill="#2f6a63" d="M1170 514h2v12h-2z"/>
<path fill="#141414" d="M1172 514h2v12h-2z"/>
<path fill="#2f6a63" d="M1154 528h2v12h-2z"/>
<path fill="#141414" d="M1156 528h2v12h-2z"/>
<path fill="#2f6a63" d="M1166 528h2v12h-2z"/>
<path fill="#141414" d="M1168 528h2v12h-2z"/>
<path fill="#2f6a63" d="M1144 598h2v12h-2z"/>
<path fill="#141414" d="M1146 598h2v12h-2z"/>
<path fill="#2f6a63" d="M1162 598h2v12h-2z"/>
<path fill="#141414" d="M1164 598h4v12h-4z"/>
<text x="1042.5" y="438" font-size="18.5" fill="#0f2522" textLength="94" lengthAdjust="spacingAndGlyphs">Bassline 8</text>
<path fill="#666666" d="M1176 414h6v34h-6z"/>
<path fill="#6a6a6a" d="M1178 458h2v12h-2z"/>
<path fill="#5bbdb0" d="M1182 414h138v206h-138z"/>
<path fill="#2a625b" d="M1182 414h138v2h-138zM1182 446h138v2h-138zM1182 414h2v206h-2z"/>
<path fill="#30706a" d="M1218 448h2v172h-2zM1256 448h2v172h-2zM1292 448h2v172h-2z"/>
<path fill="#2f6a63" d="M1186 458h2v12h-2z"/>
<path fill="#141414" d="M1188 458h2v12h-2z"/>
<path fill="#2f6a63" d="M1214 458h2v12h-2z"/>
<path fill="#141414" d="M1216 458h2v12h-2z"/>
<path fill="#2f6a63" d="M1190 500h2v12h-2z"/>
<path fill="#141414" d="M1192 500h2v12h-2z"/>
<path fill="#2f6a63" d="M1196 500h2v12h-2z"/>
<path fill="#141414" d="M1198 500h2v12h-2z"/>
<path fill="#2f6a63" d="M1212 500h2v12h-2z"/>
<path fill="#141414" d="M1214 500h2v12h-2z"/>
<path fill="#2f6a63" d="M1196 514h2v12h-2z"/>
<path fill="#141414" d="M1198 514h2v12h-2z"/>
<path fill="#2f6a63" d="M1208 514h2v12h-2z"/>
<path fill="#141414" d="M1210 514h2v12h-2z"/>
<path fill="#2f6a63" d="M1192 528h2v12h-2z"/>
<path fill="#141414" d="M1194 528h2v12h-2z"/>
<path fill="#2f6a63" d="M1204 528h2v12h-2z"/>
<path fill="#141414" d="M1206 528h2v12h-2zM1184 598h2v12h-2z"/>
<path fill="#2f6a63" d="M1200 598h2v12h-2z"/>
<path fill="#141414" d="M1202 598h4v12h-4z"/>
<path fill="#2f6a63" d="M1222 458h2v12h-2z"/>
<path fill="#141414" d="M1224 458h2v12h-2z"/>
<path fill="#2f6a63" d="M1250 458h2v12h-2z"/>
<path fill="#141414" d="M1252 458h2v12h-2z"/>
<path fill="#2f6a63" d="M1226 500h2v12h-2z"/>
<path fill="#141414" d="M1228 500h2v12h-2z"/>
<path fill="#2f6a63" d="M1232 500h2v12h-2z"/>
<path fill="#141414" d="M1234 500h2v12h-2z"/>
<path fill="#2f6a63" d="M1248 500h2v12h-2z"/>
<path fill="#141414" d="M1250 500h2v12h-2z"/>
<path fill="#2f6a63" d="M1232 514h2v12h-2z"/>
<path fill="#141414" d="M1234 514h2v12h-2z"/>
<path fill="#2f6a63" d="M1244 514h2v12h-2z"/>
<path fill="#141414" d="M1246 514h2v12h-2z"/>
<path fill="#2f6a63" d="M1228 528h2v12h-2z"/>
<path fill="#141414" d="M1230 528h2v12h-2z"/>
<path fill="#2f6a63" d="M1240 528h2v12h-2z"/>
<path fill="#141414" d="M1242 528h2v12h-2z"/>
<path fill="#2f6a63" d="M1218 598h2v12h-2z"/>
<path fill="#141414" d="M1220 598h2v12h-2z"/>
<path fill="#2f6a63" d="M1236 598h2v12h-2z"/>
<path fill="#141414" d="M1238 598h4v12h-4z"/>
<path fill="#2f6a63" d="M1260 458h2v12h-2z"/>
<path fill="#141414" d="M1262 458h2v12h-2z"/>
<path fill="#2f6a63" d="M1288 458h2v12h-2z"/>
<path fill="#141414" d="M1290 458h2v12h-2z"/>
<path fill="#2f6a63" d="M1264 500h2v12h-2z"/>
<path fill="#141414" d="M1266 500h2v12h-2z"/>
<path fill="#2f6a63" d="M1270 500h2v12h-2z"/>
<path fill="#141414" d="M1272 500h2v12h-2z"/>
<path fill="#2f6a63" d="M1286 500h2v12h-2z"/>
<path fill="#141414" d="M1288 500h2v12h-2z"/>
<path fill="#2f6a63" d="M1270 514h2v12h-2z"/>
<path fill="#141414" d="M1272 514h2v12h-2z"/>
<path fill="#2f6a63" d="M1282 514h2v12h-2z"/>
<path fill="#141414" d="M1284 514h2v12h-2z"/>
<path fill="#2f6a63" d="M1266 528h2v12h-2z"/>
<path fill="#141414" d="M1268 528h2v12h-2z"/>
<path fill="#2f6a63" d="M1278 528h2v12h-2z"/>
<path fill="#141414" d="M1280 528h2v12h-2z"/>
<path fill="#2f6a63" d="M1256 598h2v12h-2z"/>
<path fill="#141414" d="M1258 598h2v12h-2z"/>
<path fill="#2f6a63" d="M1274 598h2v12h-2z"/>
<path fill="#141414" d="M1276 598h4v12h-4z"/>
<path fill="#2f6a63" d="M1296 458h2v12h-2z"/>
<path fill="#141414" d="M1298 458h2v12h-2z"/>
<path fill="#2f6a63" d="M1300 500h2v12h-2z"/>
<path fill="#141414" d="M1302 500h2v12h-2z"/>
<path fill="#2f6a63" d="M1306 500h2v12h-2z"/>
<path fill="#141414" d="M1308 500h2v12h-2z"/>
<path fill="#2f6a63" d="M1306 514h2v12h-2z"/>
<path fill="#141414" d="M1308 514h2v12h-2z"/>
<path fill="#2f6a63" d="M1302 528h2v12h-2z"/>
<path fill="#141414" d="M1304 528h2v12h-2z"/>
<path fill="#2f6a63" d="M1314 528h2v12h-2z"/>
<path fill="#141414" d="M1316 528h2v12h-2z"/>
<path fill="#2f6a63" d="M1292 598h2v12h-2z"/>
<path fill="#141414" d="M1294 598h2v12h-2z"/>
<path fill="#2f6a63" d="M1310 598h2v12h-2z"/>
<path fill="#141414" d="M1312 598h4v12h-4z"/>
<text x="1189.5" y="438" font-size="18.5" fill="#0f2522" textLength="94" lengthAdjust="spacingAndGlyphs">Bassline 8</text>
<path fill="#666666" d="M1320 414h10v34h-10z"/>
<path fill="#6a6a6a" d="M1326 458h2v12h-2zM1324 500h2v12h-2zM1320 514h2v12h-2z"/>
<path fill="#5bbdb0" d="M1332 414h140v206h-140z"/>
<path fill="#2a625b" d="M1332 414h140v2h-140zM1332 446h140v2h-140zM1332 414h2v206h-2z"/>
<path fill="#30706a" d="M1366 448h2v172h-2zM1404 448h2v172h-2zM1440 448h2v172h-2z"/>
<path fill="#2f6a63" d="M1334 458h2v12h-2z"/>
<path fill="#141414" d="M1336 458h2v12h-2z"/>
<path fill="#2f6a63" d="M1362 458h2v12h-2z"/>
<path fill="#141414" d="M1364 458h2v12h-2z"/>
<path fill="#2f6a63" d="M1338 500h2v12h-2z"/>
<path fill="#141414" d="M1340 500h2v12h-2z"/>
<path fill="#2f6a63" d="M1344 500h2v12h-2z"/>
<path fill="#141414" d="M1346 500h2v12h-2z"/>
<path fill="#2f6a63" d="M1360 500h2v12h-2z"/>
<path fill="#141414" d="M1362 500h2v12h-2z"/>
<path fill="#2f6a63" d="M1344 514h2v12h-2z"/>
<path fill="#141414" d="M1346 514h2v12h-2z"/>
<path fill="#2f6a63" d="M1356 514h2v12h-2z"/>
<path fill="#141414" d="M1358 514h2v12h-2z"/>
<path fill="#2f6a63" d="M1340 528h2v12h-2z"/>
<path fill="#141414" d="M1342 528h2v12h-2z"/>
<path fill="#2f6a63" d="M1352 528h2v12h-2z"/>
<path fill="#141414" d="M1354 528h2v12h-2zM1332 598h2v12h-2z"/>
<path fill="#2f6a63" d="M1348 598h2v12h-2z"/>
<path fill="#141414" d="M1350 598h4v12h-4z"/>
<path fill="#2f6a63" d="M1370 458h2v12h-2z"/>
<path fill="#141414" d="M1372 458h2v12h-2z"/>
<path fill="#2f6a63" d="M1398 458h2v12h-2z"/>
<path fill="#141414" d="M1400 458h2v12h-2z"/>
<path fill="#2f6a63" d="M1374 500h2v12h-2z"/>
<path fill="#141414" d="M1376 500h2v12h-2z"/>
<path fill="#2f6a63" d="M1380 500h2v12h-2z"/>
<path fill="#141414" d="M1382 500h2v12h-2z"/>
<path fill="#2f6a63" d="M1396 500h2v12h-2z"/>
<path fill="#141414" d="M1398 500h2v12h-2z"/>
<path fill="#2f6a63" d="M1380 514h2v12h-2z"/>
<path fill="#141414" d="M1382 514h2v12h-2z"/>
<path fill="#2f6a63" d="M1392 514h2v12h-2z"/>
<path fill="#141414" d="M1394 514h2v12h-2z"/>
<path fill="#2f6a63" d="M1376 528h2v12h-2z"/>
<path fill="#141414" d="M1378 528h2v12h-2z"/>
<path fill="#2f6a63" d="M1388 528h2v12h-2z"/>
<path fill="#141414" d="M1390 528h2v12h-2z"/>
<path fill="#2f6a63" d="M1366 598h2v12h-2z"/>
<path fill="#141414" d="M1368 598h2v12h-2z"/>
<path fill="#2f6a63" d="M1384 598h2v12h-2z"/>
<path fill="#141414" d="M1386 598h4v12h-4z"/>
<path fill="#2f6a63" d="M1408 458h2v12h-2z"/>
<path fill="#141414" d="M1410 458h2v12h-2z"/>
<path fill="#2f6a63" d="M1436 458h2v12h-2z"/>
<path fill="#141414" d="M1438 458h2v12h-2z"/>
<path fill="#2f6a63" d="M1412 500h2v12h-2z"/>
<path fill="#141414" d="M1414 500h2v12h-2z"/>
<path fill="#2f6a63" d="M1418 500h2v12h-2z"/>
<path fill="#141414" d="M1420 500h2v12h-2z"/>
<path fill="#2f6a63" d="M1434 500h2v12h-2z"/>
<path fill="#141414" d="M1436 500h2v12h-2z"/>
<path fill="#2f6a63" d="M1418 514h2v12h-2z"/>
<path fill="#141414" d="M1420 514h2v12h-2z"/>
<path fill="#2f6a63" d="M1430 514h2v12h-2z"/>
<path fill="#141414" d="M1432 514h2v12h-2z"/>
<path fill="#2f6a63" d="M1414 528h2v12h-2z"/>
<path fill="#141414" d="M1416 528h2v12h-2z"/>
<path fill="#2f6a63" d="M1426 528h2v12h-2z"/>
<path fill="#141414" d="M1428 528h2v12h-2z"/>
<path fill="#2f6a63" d="M1404 598h2v12h-2z"/>
<path fill="#141414" d="M1406 598h2v12h-2z"/>
<path fill="#2f6a63" d="M1422 598h2v12h-2z"/>
<path fill="#141414" d="M1424 598h4v12h-4z"/>
<path fill="#2f6a63" d="M1444 458h2v12h-2z"/>
<path fill="#141414" d="M1446 458h2v12h-2z"/>
<path fill="#2f6a63" d="M1448 500h2v12h-2z"/>
<path fill="#141414" d="M1450 500h2v12h-2z"/>
<path fill="#2f6a63" d="M1454 500h2v12h-2z"/>
<path fill="#141414" d="M1456 500h2v12h-2z"/>
<path fill="#2f6a63" d="M1454 514h2v12h-2z"/>
<path fill="#141414" d="M1456 514h2v12h-2z"/>
<path fill="#2f6a63" d="M1466 514h2v12h-2z"/>
<path fill="#141414" d="M1468 514h2v12h-2z"/>
<path fill="#2f6a63" d="M1450 528h2v12h-2z"/>
<path fill="#141414" d="M1452 528h2v12h-2z"/>
<path fill="#2f6a63" d="M1462 528h2v12h-2z"/>
<path fill="#141414" d="M1464 528h2v12h-2z"/>
<path fill="#2f6a63" d="M1440 598h2v12h-2z"/>
<path fill="#141414" d="M1442 598h2v12h-2z"/>
<path fill="#2f6a63" d="M1458 598h2v12h-2z"/>
<path fill="#141414" d="M1460 598h4v12h-4z"/>
<text x="1338.5" y="438" font-size="18.5" fill="#0f2522" textLength="94" lengthAdjust="spacingAndGlyphs">Bassline 8</text>
<path fill="#666666" d="M1472 414h6v34h-6z"/>
<path fill="#6a6a6a" d="M1474 458h2v12h-2z"/>
<path fill="#5bbdb0" d="M1478 414h138v206h-138z"/>
<path fill="#2a625b" d="M1478 414h138v2h-138zM1478 446h138v2h-138zM1478 414h2v206h-2z"/>
<path fill="#30706a" d="M1514 448h2v172h-2zM1550 448h2v172h-2zM1588 448h2v172h-2z"/>
<path fill="#2f6a63" d="M1482 458h2v12h-2z"/>
<path fill="#141414" d="M1484 458h2v12h-2z"/>
<path fill="#2f6a63" d="M1510 458h2v12h-2z"/>
<path fill="#141414" d="M1512 458h2v12h-2z"/>
<path fill="#2f6a63" d="M1486 500h2v12h-2z"/>
<path fill="#141414" d="M1488 500h2v12h-2z"/>
<path fill="#2f6a63" d="M1492 500h2v12h-2z"/>
<path fill="#141414" d="M1494 500h2v12h-2z"/>
<path fill="#2f6a63" d="M1508 500h2v12h-2z"/>
<path fill="#141414" d="M1510 500h2v12h-2z"/>
<path fill="#2f6a63" d="M1492 514h2v12h-2z"/>
<path fill="#141414" d="M1494 514h2v12h-2z"/>
<path fill="#2f6a63" d="M1504 514h2v12h-2z"/>
<path fill="#141414" d="M1506 514h2v12h-2z"/>
<path fill="#2f6a63" d="M1488 528h2v12h-2z"/>
<path fill="#141414" d="M1490 528h2v12h-2z"/>
<path fill="#2f6a63" d="M1500 528h2v12h-2z"/>
<path fill="#141414" d="M1502 528h2v12h-2zM1480 598h2v12h-2z"/>
<path fill="#2f6a63" d="M1496 598h2v12h-2z"/>
<path fill="#141414" d="M1498 598h4v12h-4z"/>
<path fill="#2f6a63" d="M1518 458h2v12h-2z"/>
<path fill="#141414" d="M1520 458h2v12h-2z"/>
<path fill="#2f6a63" d="M1546 458h2v12h-2z"/>
<path fill="#141414" d="M1548 458h2v12h-2z"/>
<path fill="#2f6a63" d="M1522 500h2v12h-2z"/>
<path fill="#141414" d="M1524 500h2v12h-2z"/>
<path fill="#2f6a63" d="M1528 500h2v12h-2z"/>
<path fill="#141414" d="M1530 500h2v12h-2z"/>
<path fill="#2f6a63" d="M1544 500h2v12h-2z"/>
<path fill="#141414" d="M1546 500h2v12h-2z"/>
<path fill="#2f6a63" d="M1528 514h2v12h-2z"/>
<path fill="#141414" d="M1530 514h2v12h-2z"/>
<path fill="#2f6a63" d="M1540 514h2v12h-2z"/>
<path fill="#141414" d="M1542 514h2v12h-2z"/>
<path fill="#2f6a63" d="M1524 528h2v12h-2z"/>
<path fill="#141414" d="M1526 528h2v12h-2z"/>
<path fill="#2f6a63" d="M1536 528h2v12h-2z"/>
<path fill="#141414" d="M1538 528h2v12h-2z"/>
<path fill="#2f6a63" d="M1514 598h2v12h-2z"/>
<path fill="#141414" d="M1516 598h2v12h-2z"/>
<path fill="#2f6a63" d="M1532 598h2v12h-2z"/>
<path fill="#141414" d="M1534 598h4v12h-4z"/>
<path fill="#2f6a63" d="M1554 458h2v12h-2z"/>
<path fill="#141414" d="M1556 458h2v12h-2z"/>
<path fill="#2f6a63" d="M1582 458h2v12h-2z"/>
<path fill="#141414" d="M1584 458h2v12h-2z"/>
<path fill="#2f6a63" d="M1558 500h2v12h-2z"/>
<path fill="#141414" d="M1560 500h2v12h-2z"/>
<path fill="#2f6a63" d="M1564 500h2v12h-2z"/>
<path fill="#141414" d="M1566 500h2v12h-2z"/>
<path fill="#2f6a63" d="M1580 500h2v12h-2z"/>
<path fill="#141414" d="M1582 500h2v12h-2z"/>
<path fill="#2f6a63" d="M1564 514h2v12h-2z"/>
<path fill="#141414" d="M1566 514h2v12h-2z"/>
<path fill="#2f6a63" d="M1576 514h2v12h-2z"/>
<path fill="#141414" d="M1578 514h2v12h-2z"/>
<path fill="#2f6a63" d="M1560 528h2v12h-2z"/>
<path fill="#141414" d="M1562 528h2v12h-2z"/>
<path fill="#2f6a63" d="M1572 528h2v12h-2z"/>
<path fill="#141414" d="M1574 528h2v12h-2z"/>
<path fill="#2f6a63" d="M1550 598h2v12h-2z"/>
<path fill="#141414" d="M1552 598h2v12h-2z"/>
<path fill="#2f6a63" d="M1568 598h2v12h-2z"/>
<path fill="#141414" d="M1570 598h4v12h-4z"/>
<path fill="#2f6a63" d="M1592 458h2v12h-2z"/>
<path fill="#141414" d="M1594 458h2v12h-2z"/>
<path fill="#2f6a63" d="M1596 500h2v12h-2z"/>
<path fill="#141414" d="M1598 500h2v12h-2z"/>
<path fill="#2f6a63" d="M1602 500h2v12h-2z"/>
<path fill="#141414" d="M1604 500h2v12h-2z"/>
<path fill="#2f6a63" d="M1602 514h2v12h-2z"/>
<path fill="#141414" d="M1604 514h2v12h-2z"/>
<path fill="#2f6a63" d="M1598 528h2v12h-2z"/>
<path fill="#141414" d="M1600 528h2v12h-2z"/>
<path fill="#2f6a63" d="M1610 528h2v12h-2z"/>
<path fill="#141414" d="M1612 528h2v12h-2z"/>
<path fill="#2f6a63" d="M1588 598h2v12h-2z"/>
<path fill="#141414" d="M1590 598h2v12h-2z"/>
<path fill="#2f6a63" d="M1606 598h2v12h-2z"/>
<path fill="#141414" d="M1608 598h4v12h-4z"/>
<text x="1485.5" y="438" font-size="18.5" fill="#0f2522" textLength="94" lengthAdjust="spacingAndGlyphs">Bassline 8</text>
<path fill="#5bbdb0" d="M1662 414h148v206h-148z"/>
<path fill="#2a625b" d="M1662 414h148v2h-148zM1662 446h148v2h-148zM1662 414h2v206h-2z"/>
<path fill="#30706a" d="M1698 448h2v172h-2zM1736 448h2v172h-2zM1772 448h2v172h-2z"/>
<path fill="#2f6a63" d="M1666 458h2v12h-2z"/>
<path fill="#141414" d="M1668 458h2v12h-2z"/>
<path fill="#2f6a63" d="M1694 458h2v12h-2z"/>
<path fill="#141414" d="M1696 458h2v12h-2z"/>
<path fill="#2f6a63" d="M1670 500h2v12h-2z"/>
<path fill="#141414" d="M1672 500h2v12h-2z"/>
<path fill="#2f6a63" d="M1676 500h2v12h-2z"/>
<path fill="#141414" d="M1678 500h2v12h-2z"/>
<path fill="#2f6a63" d="M1692 500h2v12h-2z"/>
<path fill="#141414" d="M1694 500h2v12h-2z"/>
<path fill="#2f6a63" d="M1676 514h2v12h-2z"/>
<path fill="#141414" d="M1678 514h2v12h-2z"/>
<path fill="#2f6a63" d="M1688 514h2v12h-2z"/>
<path fill="#141414" d="M1690 514h2v12h-2z"/>
<path fill="#2f6a63" d="M1672 528h2v12h-2z"/>
<path fill="#141414" d="M1674 528h2v12h-2z"/>
<path fill="#2f6a63" d="M1684 528h2v12h-2z"/>
<path fill="#141414" d="M1686 528h2v12h-2zM1664 598h2v12h-2z"/>
<path fill="#2f6a63" d="M1680 598h2v12h-2z"/>
<path fill="#141414" d="M1682 598h4v12h-4z"/>
<path fill="#2f6a63" d="M1702 458h2v12h-2z"/>
<path fill="#141414" d="M1704 458h2v12h-2z"/>
<path fill="#2f6a63" d="M1730 458h2v12h-2z"/>
<path fill="#141414" d="M1732 458h2v12h-2z"/>
<path fill="#2f6a63" d="M1706 500h2v12h-2z"/>
<path fill="#141414" d="M1708 500h2v12h-2z"/>
<path fill="#2f6a63" d="M1712 500h2v12h-2z"/>
<path fill="#141414" d="M1714 500h2v12h-2z"/>
<path fill="#2f6a63" d="M1728 500h2v12h-2z"/>
<path fill="#141414" d="M1730 500h2v12h-2z"/>
<path fill="#2f6a63" d="M1712 514h2v12h-2z"/>
<path fill="#141414" d="M1714 514h2v12h-2z"/>
<path fill="#2f6a63" d="M1724 514h2v12h-2z"/>
<path fill="#141414" d="M1726 514h2v12h-2z"/>
<path fill="#2f6a63" d="M1708 528h2v12h-2z"/>
<path fill="#141414" d="M1710 528h2v12h-2z"/>
<path fill="#2f6a63" d="M1720 528h2v12h-2z"/>
<path fill="#141414" d="M1722 528h2v12h-2z"/>
<path fill="#2f6a63" d="M1698 598h2v12h-2z"/>
<path fill="#141414" d="M1700 598h2v12h-2z"/>
<path fill="#2f6a63" d="M1716 598h2v12h-2z"/>
<path fill="#141414" d="M1718 598h4v12h-4z"/>
<path fill="#2f6a63" d="M1740 458h2v12h-2z"/>
<path fill="#141414" d="M1742 458h2v12h-2z"/>
<path fill="#2f6a63" d="M1768 458h2v12h-2z"/>
<path fill="#141414" d="M1770 458h2v12h-2z"/>
<path fill="#2f6a63" d="M1744 500h2v12h-2z"/>
<path fill="#141414" d="M1746 500h2v12h-2z"/>
<path fill="#2f6a63" d="M1750 500h2v12h-2z"/>
<path fill="#141414" d="M1752 500h2v12h-2z"/>
<path fill="#2f6a63" d="M1766 500h2v12h-2z"/>
<path fill="#141414" d="M1768 500h2v12h-2z"/>
<path fill="#2f6a63" d="M1750 514h2v12h-2z"/>
<path fill="#141414" d="M1752 514h2v12h-2z"/>
<path fill="#2f6a63" d="M1762 514h2v12h-2z"/>
<path fill="#141414" d="M1764 514h2v12h-2z"/>
<path fill="#2f6a63" d="M1746 528h2v12h-2z"/>
<path fill="#141414" d="M1748 528h2v12h-2z"/>
<path fill="#2f6a63" d="M1758 528h2v12h-2z"/>
<path fill="#141414" d="M1760 528h2v12h-2z"/>
<path fill="#2f6a63" d="M1736 598h2v12h-2z"/>
<path fill="#141414" d="M1738 598h2v12h-2z"/>
<path fill="#2f6a63" d="M1754 598h2v12h-2z"/>
<path fill="#141414" d="M1756 598h4v12h-4z"/>
<path fill="#2f6a63" d="M1776 458h2v12h-2z"/>
<path fill="#141414" d="M1778 458h2v12h-2z"/>
<path fill="#2f6a63" d="M1804 458h2v12h-2z"/>
<path fill="#141414" d="M1806 458h2v12h-2z"/>
<path fill="#2f6a63" d="M1780 500h2v12h-2z"/>
<path fill="#141414" d="M1782 500h2v12h-2z"/>
<path fill="#2f6a63" d="M1786 500h2v12h-2z"/>
<path fill="#141414" d="M1788 500h2v12h-2z"/>
<path fill="#2f6a63" d="M1802 500h2v12h-2z"/>
<path fill="#141414" d="M1804 500h2v12h-2z"/>
<path fill="#2f6a63" d="M1786 514h2v12h-2z"/>
<path fill="#141414" d="M1788 514h2v12h-2z"/>
<path fill="#2f6a63" d="M1798 514h2v12h-2z"/>
<path fill="#141414" d="M1800 514h2v12h-2z"/>
<path fill="#2f6a63" d="M1782 528h2v12h-2z"/>
<path fill="#141414" d="M1784 528h2v12h-2z"/>
<path fill="#2f6a63" d="M1794 528h2v12h-2z"/>
<path fill="#141414" d="M1796 528h2v12h-2z"/>
<path fill="#2f6a63" d="M1772 598h2v12h-2z"/>
<path fill="#141414" d="M1774 598h2v12h-2z"/>
<path fill="#2f6a63" d="M1790 598h2v12h-2z"/>
<path fill="#141414" d="M1792 598h4v12h-4z"/>
<text x="1669.5" y="438" font-size="18.5" fill="#0f2522" textLength="94" lengthAdjust="spacingAndGlyphs">Bassline 8</text>
<path fill="#5bbdb0" d="M1810 414h142v206h-142z"/>
<path fill="#2a625b" d="M1810 414h142v2h-142zM1810 446h142v2h-142zM1810 414h2v206h-2z"/>
<path fill="#30706a" d="M1846 448h2v172h-2zM1884 448h2v172h-2zM1920 448h2v172h-2z"/>
<path fill="#2f6a63" d="M1814 458h2v12h-2z"/>
<path fill="#141414" d="M1816 458h2v12h-2z"/>
<path fill="#2f6a63" d="M1842 458h2v12h-2z"/>
<path fill="#141414" d="M1844 458h2v12h-2z"/>
<path fill="#2f6a63" d="M1818 500h2v12h-2z"/>
<path fill="#141414" d="M1820 500h2v12h-2z"/>
<path fill="#2f6a63" d="M1824 500h2v12h-2z"/>
<path fill="#141414" d="M1826 500h2v12h-2z"/>
<path fill="#2f6a63" d="M1840 500h2v12h-2z"/>
<path fill="#141414" d="M1842 500h2v12h-2z"/>
<path fill="#2f6a63" d="M1824 514h2v12h-2z"/>
<path fill="#141414" d="M1826 514h2v12h-2z"/>
<path fill="#2f6a63" d="M1836 514h2v12h-2z"/>
<path fill="#141414" d="M1838 514h2v12h-2z"/>
<path fill="#2f6a63" d="M1820 528h2v12h-2z"/>
<path fill="#141414" d="M1822 528h2v12h-2z"/>
<path fill="#2f6a63" d="M1832 528h2v12h-2z"/>
<path fill="#141414" d="M1834 528h2v12h-2zM1812 598h2v12h-2z"/>
<path fill="#2f6a63" d="M1828 598h2v12h-2z"/>
<path fill="#141414" d="M1830 598h4v12h-4z"/>
<path fill="#2f6a63" d="M1850 458h2v12h-2z"/>
<path fill="#141414" d="M1852 458h2v12h-2z"/>
<path fill="#2f6a63" d="M1878 458h2v12h-2z"/>
<path fill="#141414" d="M1880 458h2v12h-2z"/>
<path fill="#2f6a63" d="M1854 500h2v12h-2z"/>
<path fill="#141414" d="M1856 500h2v12h-2z"/>
<path fill="#2f6a63" d="M1860 500h2v12h-2z"/>
<path fill="#141414" d="M1862 500h2v12h-2z"/>
<path fill="#2f6a63" d="M1876 500h2v12h-2z"/>
<path fill="#141414" d="M1878 500h2v12h-2z"/>
<path fill="#2f6a63" d="M1860 514h2v12h-2z"/>
<path fill="#141414" d="M1862 514h2v12h-2z"/>
<path fill="#2f6a63" d="M1872 514h2v12h-2z"/>
<path fill="#141414" d="M1874 514h2v12h-2z"/>
<path fill="#2f6a63" d="M1856 528h2v12h-2z"/>
<path fill="#141414" d="M1858 528h2v12h-2z"/>
<path fill="#2f6a63" d="M1868 528h2v12h-2z"/>
<path fill="#141414" d="M1870 528h2v12h-2z"/>
<path fill="#2f6a63" d="M1846 598h2v12h-2z"/>
<path fill="#141414" d="M1848 598h2v12h-2z"/>
<path fill="#2f6a63" d="M1864 598h2v12h-2z"/>
<path fill="#141414" d="M1866 598h4v12h-4z"/>
<path fill="#2f6a63" d="M1888 458h2v12h-2z"/>
<path fill="#141414" d="M1890 458h2v12h-2z"/>
<path fill="#2f6a63" d="M1916 458h2v12h-2z"/>
<path fill="#141414" d="M1918 458h2v12h-2z"/>
<path fill="#2f6a63" d="M1892 500h2v12h-2z"/>
<path fill="#141414" d="M1894 500h2v12h-2z"/>
<path fill="#2f6a63" d="M1898 500h2v12h-2z"/>
<path fill="#141414" d="M1900 500h2v12h-2z"/>
<path fill="#2f6a63" d="M1914 500h2v12h-2z"/>
<path fill="#141414" d="M1916 500h2v12h-2z"/>
<path fill="#2f6a63" d="M1898 514h2v12h-2z"/>
<path fill="#141414" d="M1900 514h2v12h-2z"/>
<path fill="#2f6a63" d="M1910 514h2v12h-2z"/>
<path fill="#141414" d="M1912 514h2v12h-2z"/>
<path fill="#2f6a63" d="M1894 528h2v12h-2z"/>
<path fill="#141414" d="M1896 528h2v12h-2z"/>
<path fill="#2f6a63" d="M1906 528h2v12h-2z"/>
<path fill="#141414" d="M1908 528h2v12h-2z"/>
<path fill="#2f6a63" d="M1884 598h2v12h-2z"/>
<path fill="#141414" d="M1886 598h2v12h-2z"/>
<path fill="#2f6a63" d="M1902 598h2v12h-2z"/>
<path fill="#141414" d="M1904 598h4v12h-4z"/>
<path fill="#2f6a63" d="M1924 458h2v12h-2z"/>
<path fill="#141414" d="M1926 458h2v12h-2z"/>
<path fill="#2f6a63" d="M1928 500h2v12h-2z"/>
<path fill="#141414" d="M1930 500h2v12h-2z"/>
<path fill="#2f6a63" d="M1934 500h2v12h-2z"/>
<path fill="#141414" d="M1936 500h2v12h-2z"/>
<path fill="#2f6a63" d="M1934 514h2v12h-2z"/>
<path fill="#141414" d="M1936 514h2v12h-2z"/>
<path fill="#2f6a63" d="M1946 514h2v12h-2z"/>
<path fill="#141414" d="M1948 514h2v12h-2z"/>
<path fill="#2f6a63" d="M1930 528h2v12h-2z"/>
<path fill="#141414" d="M1932 528h2v12h-2z"/>
<path fill="#2f6a63" d="M1942 528h2v12h-2z"/>
<path fill="#141414" d="M1944 528h2v12h-2z"/>
<path fill="#2f6a63" d="M1920 598h2v12h-2z"/>
<path fill="#141414" d="M1922 598h2v12h-2z"/>
<path fill="#2f6a63" d="M1938 598h2v12h-2z"/>
<path fill="#141414" d="M1940 598h4v12h-4z"/>
<text x="1817.5" y="438" font-size="18.5" fill="#0f2522" textLength="94" lengthAdjust="spacingAndGlyphs">Bassline 8</text>
<path fill="#5bbdb0" d="M1958 414h146v206h-146z"/>
<path fill="#2a625b" d="M1958 414h146v2h-146zM1958 446h146v2h-146zM1958 414h2v206h-2z"/>
<path fill="#30706a" d="M1994 448h2v172h-2zM2030 448h2v172h-2zM2068 448h2v172h-2z"/>
<path fill="#2f6a63" d="M1962 458h2v12h-2z"/>
<path fill="#141414" d="M1964 458h2v12h-2z"/>
<path fill="#2f6a63" d="M1990 458h2v12h-2z"/>
<path fill="#141414" d="M1992 458h2v12h-2z"/>
<path fill="#2f6a63" d="M1966 500h2v12h-2z"/>
<path fill="#141414" d="M1968 500h2v12h-2z"/>
<path fill="#2f6a63" d="M1972 500h2v12h-2z"/>
<path fill="#141414" d="M1974 500h2v12h-2z"/>
<path fill="#2f6a63" d="M1988 500h2v12h-2z"/>
<path fill="#141414" d="M1990 500h2v12h-2z"/>
<path fill="#2f6a63" d="M1972 514h2v12h-2z"/>
<path fill="#141414" d="M1974 514h2v12h-2z"/>
<path fill="#2f6a63" d="M1984 514h2v12h-2z"/>
<path fill="#141414" d="M1986 514h2v12h-2z"/>
<path fill="#2f6a63" d="M1968 528h2v12h-2z"/>
<path fill="#141414" d="M1970 528h2v12h-2z"/>
<path fill="#2f6a63" d="M1980 528h2v12h-2z"/>
<path fill="#141414" d="M1982 528h2v12h-2zM1960 598h2v12h-2z"/>
<path fill="#2f6a63" d="M1976 598h2v12h-2z"/>
<path fill="#141414" d="M1978 598h4v12h-4z"/>
<path fill="#2f6a63" d="M1998 458h2v12h-2z"/>
<path fill="#141414" d="M2000 458h2v12h-2z"/>
<path fill="#2f6a63" d="M2026 458h2v12h-2z"/>
<path fill="#141414" d="M2028 458h2v12h-2z"/>
<path fill="#2f6a63" d="M2002 500h2v12h-2z"/>
<path fill="#141414" d="M2004 500h2v12h-2z"/>
<path fill="#2f6a63" d="M2008 500h2v12h-2z"/>
<path fill="#141414" d="M2010 500h2v12h-2z"/>
<path fill="#2f6a63" d="M2024 500h2v12h-2z"/>
<path fill="#141414" d="M2026 500h2v12h-2z"/>
<path fill="#2f6a63" d="M2008 514h2v12h-2z"/>
<path fill="#141414" d="M2010 514h2v12h-2z"/>
<path fill="#2f6a63" d="M2020 514h2v12h-2z"/>
<path fill="#141414" d="M2022 514h2v12h-2z"/>
<path fill="#2f6a63" d="M2004 528h2v12h-2z"/>
<path fill="#141414" d="M2006 528h2v12h-2z"/>
<path fill="#2f6a63" d="M2016 528h2v12h-2z"/>
<path fill="#141414" d="M2018 528h2v12h-2z"/>
<path fill="#2f6a63" d="M1994 598h2v12h-2z"/>
<path fill="#141414" d="M1996 598h2v12h-2z"/>
<path fill="#2f6a63" d="M2012 598h2v12h-2z"/>
<path fill="#141414" d="M2014 598h4v12h-4z"/>
<path fill="#2f6a63" d="M2034 458h2v12h-2z"/>
<path fill="#141414" d="M2036 458h2v12h-2z"/>
<path fill="#2f6a63" d="M2062 458h2v12h-2z"/>
<path fill="#141414" d="M2064 458h2v12h-2z"/>
<path fill="#2f6a63" d="M2038 500h2v12h-2z"/>
<path fill="#141414" d="M2040 500h2v12h-2z"/>
<path fill="#2f6a63" d="M2044 500h2v12h-2z"/>
<path fill="#141414" d="M2046 500h2v12h-2z"/>
<path fill="#2f6a63" d="M2060 500h2v12h-2z"/>
<path fill="#141414" d="M2062 500h2v12h-2z"/>
<path fill="#2f6a63" d="M2044 514h2v12h-2z"/>
<path fill="#141414" d="M2046 514h2v12h-2z"/>
<path fill="#2f6a63" d="M2056 514h2v12h-2z"/>
<path fill="#141414" d="M2058 514h2v12h-2z"/>
<path fill="#2f6a63" d="M2040 528h2v12h-2z"/>
<path fill="#141414" d="M2042 528h2v12h-2z"/>
<path fill="#2f6a63" d="M2052 528h2v12h-2z"/>
<path fill="#141414" d="M2054 528h2v12h-2z"/>
<path fill="#2f6a63" d="M2030 598h2v12h-2z"/>
<path fill="#141414" d="M2032 598h2v12h-2z"/>
<path fill="#2f6a63" d="M2048 598h2v12h-2z"/>
<path fill="#141414" d="M2050 598h4v12h-4z"/>
<path fill="#2f6a63" d="M2072 458h2v12h-2z"/>
<path fill="#141414" d="M2074 458h2v12h-2z"/>
<path fill="#2f6a63" d="M2100 458h2v12h-2z"/>
<path fill="#141414" d="M2102 458h2v12h-2z"/>
<path fill="#2f6a63" d="M2076 500h2v12h-2z"/>
<path fill="#141414" d="M2078 500h2v12h-2z"/>
<path fill="#2f6a63" d="M2082 500h2v12h-2z"/>
<path fill="#141414" d="M2084 500h2v12h-2z"/>
<path fill="#2f6a63" d="M2098 500h2v12h-2z"/>
<path fill="#141414" d="M2100 500h2v12h-2z"/>
<path fill="#2f6a63" d="M2082 514h2v12h-2z"/>
<path fill="#141414" d="M2084 514h2v12h-2z"/>
<path fill="#2f6a63" d="M2094 514h2v12h-2z"/>
<path fill="#141414" d="M2096 514h2v12h-2z"/>
<path fill="#2f6a63" d="M2078 528h2v12h-2z"/>
<path fill="#141414" d="M2080 528h2v12h-2z"/>
<path fill="#2f6a63" d="M2090 528h2v12h-2z"/>
<path fill="#141414" d="M2092 528h2v12h-2z"/>
<path fill="#2f6a63" d="M2068 598h2v12h-2z"/>
<path fill="#141414" d="M2070 598h2v12h-2z"/>
<path fill="#2f6a63" d="M2086 598h2v12h-2z"/>
<path fill="#141414" d="M2088 598h4v12h-4z"/>
<text x="1965.5" y="438" font-size="18.5" fill="#0f2522" textLength="94" lengthAdjust="spacingAndGlyphs">Bassline 8</text>
<path fill="#5bbdb0" d="M2104 414h148v206h-148z"/>
<path fill="#2a625b" d="M2104 414h148v2h-148zM2104 446h148v2h-148zM2104 414h2v206h-2z"/>
<path fill="#30706a" d="M2142 448h2v172h-2zM2178 448h2v172h-2zM2216 448h2v172h-2z"/>
<path fill="#2f6a63" d="M2108 458h2v12h-2z"/>
<path fill="#141414" d="M2110 458h2v12h-2z"/>
<path fill="#2f6a63" d="M2136 458h2v12h-2z"/>
<path fill="#141414" d="M2138 458h2v12h-2z"/>
<path fill="#2f6a63" d="M2112 500h2v12h-2z"/>
<path fill="#141414" d="M2114 500h2v12h-2z"/>
<path fill="#2f6a63" d="M2118 500h2v12h-2z"/>
<path fill="#141414" d="M2120 500h2v12h-2z"/>
<path fill="#2f6a63" d="M2134 500h2v12h-2z"/>
<path fill="#141414" d="M2136 500h2v12h-2z"/>
<path fill="#2f6a63" d="M2118 514h2v12h-2z"/>
<path fill="#141414" d="M2120 514h2v12h-2z"/>
<path fill="#2f6a63" d="M2130 514h2v12h-2z"/>
<path fill="#141414" d="M2132 514h2v12h-2z"/>
<path fill="#2f6a63" d="M2114 528h2v12h-2z"/>
<path fill="#141414" d="M2116 528h2v12h-2z"/>
<path fill="#2f6a63" d="M2126 528h2v12h-2z"/>
<path fill="#141414" d="M2128 528h2v12h-2zM2106 598h2v12h-2z"/>
<path fill="#2f6a63" d="M2122 598h2v12h-2z"/>
<path fill="#141414" d="M2124 598h4v12h-4z"/>
<path fill="#2f6a63" d="M2146 458h2v12h-2z"/>
<path fill="#141414" d="M2148 458h2v12h-2z"/>
<path fill="#2f6a63" d="M2174 458h2v12h-2z"/>
<path fill="#141414" d="M2176 458h2v12h-2z"/>
<path fill="#2f6a63" d="M2150 500h2v12h-2z"/>
<path fill="#141414" d="M2152 500h2v12h-2z"/>
<path fill="#2f6a63" d="M2156 500h2v12h-2z"/>
<path fill="#141414" d="M2158 500h2v12h-2z"/>
<path fill="#2f6a63" d="M2172 500h2v12h-2z"/>
<path fill="#141414" d="M2174 500h2v12h-2z"/>
<path fill="#2f6a63" d="M2156 514h2v12h-2z"/>
<path fill="#141414" d="M2158 514h2v12h-2z"/>
<path fill="#2f6a63" d="M2168 514h2v12h-2z"/>
<path fill="#141414" d="M2170 514h2v12h-2z"/>
<path fill="#2f6a63" d="M2152 528h2v12h-2z"/>
<path fill="#141414" d="M2154 528h2v12h-2z"/>
<path fill="#2f6a63" d="M2164 528h2v12h-2z"/>
<path fill="#141414" d="M2166 528h2v12h-2z"/>
<path fill="#2f6a63" d="M2142 598h2v12h-2z"/>
<path fill="#141414" d="M2144 598h2v12h-2z"/>
<path fill="#2f6a63" d="M2160 598h2v12h-2z"/>
<path fill="#141414" d="M2162 598h4v12h-4z"/>
<path fill="#2f6a63" d="M2182 458h2v12h-2z"/>
<path fill="#141414" d="M2184 458h2v12h-2z"/>
<path fill="#2f6a63" d="M2210 458h2v12h-2z"/>
<path fill="#141414" d="M2212 458h2v12h-2z"/>
<path fill="#2f6a63" d="M2186 500h2v12h-2z"/>
<path fill="#141414" d="M2188 500h2v12h-2z"/>
<path fill="#2f6a63" d="M2192 500h2v12h-2z"/>
<path fill="#141414" d="M2194 500h2v12h-2z"/>
<path fill="#2f6a63" d="M2208 500h2v12h-2z"/>
<path fill="#141414" d="M2210 500h2v12h-2z"/>
<path fill="#2f6a63" d="M2192 514h2v12h-2z"/>
<path fill="#141414" d="M2194 514h2v12h-2z"/>
<path fill="#2f6a63" d="M2204 514h2v12h-2z"/>
<path fill="#141414" d="M2206 514h2v12h-2z"/>
<path fill="#2f6a63" d="M2188 528h2v12h-2z"/>
<path fill="#141414" d="M2190 528h2v12h-2z"/>
<path fill="#2f6a63" d="M2200 528h2v12h-2z"/>
<path fill="#141414" d="M2202 528h2v12h-2z"/>
<path fill="#2f6a63" d="M2178 598h2v12h-2z"/>
<path fill="#141414" d="M2180 598h2v12h-2z"/>
<path fill="#2f6a63" d="M2196 598h2v12h-2z"/>
<path fill="#141414" d="M2198 598h4v12h-4z"/>
<path fill="#2f6a63" d="M2220 458h2v12h-2z"/>
<path fill="#141414" d="M2222 458h2v12h-2z"/>
<path fill="#2f6a63" d="M2248 458h2v12h-2z"/>
<path fill="#141414" d="M2250 458h2v12h-2z"/>
<path fill="#2f6a63" d="M2224 500h2v12h-2z"/>
<path fill="#141414" d="M2226 500h2v12h-2z"/>
<path fill="#2f6a63" d="M2230 500h2v12h-2z"/>
<path fill="#141414" d="M2232 500h2v12h-2z"/>
<path fill="#2f6a63" d="M2246 500h2v12h-2z"/>
<path fill="#141414" d="M2248 500h2v12h-2z"/>
<path fill="#2f6a63" d="M2230 514h2v12h-2z"/>
<path fill="#141414" d="M2232 514h2v12h-2z"/>
<path fill="#2f6a63" d="M2242 514h2v12h-2z"/>
<path fill="#141414" d="M2244 514h2v12h-2z"/>
<path fill="#2f6a63" d="M2226 528h2v12h-2z"/>
<path fill="#141414" d="M2228 528h2v12h-2z"/>
<path fill="#2f6a63" d="M2238 528h2v12h-2z"/>
<path fill="#141414" d="M2240 528h2v12h-2z"/>
<path fill="#2f6a63" d="M2216 598h2v12h-2z"/>
<path fill="#141414" d="M2218 598h2v12h-2z"/>
<path fill="#2f6a63" d="M2234 598h2v12h-2z"/>
<path fill="#141414" d="M2236 598h4v12h-4z"/>
<text x="2111.5" y="438" font-size="18.5" fill="#0f2522" textLength="94" lengthAdjust="spacingAndGlyphs">Bassline 8</text>
<path fill="#5bbdb0" d="M2252 414h148v206h-148z"/>
<path fill="#2a625b" d="M2252 414h148v2h-148zM2252 446h148v2h-148zM2252 414h2v206h-2z"/>
<path fill="#30706a" d="M2290 448h2v172h-2zM2326 448h2v172h-2zM2364 448h2v172h-2z"/>
<path fill="#2f6a63" d="M2256 458h2v12h-2z"/>
<path fill="#141414" d="M2258 458h2v12h-2z"/>
<path fill="#2f6a63" d="M2284 458h2v12h-2z"/>
<path fill="#141414" d="M2286 458h2v12h-2z"/>
<path fill="#2f6a63" d="M2260 500h2v12h-2z"/>
<path fill="#141414" d="M2262 500h2v12h-2z"/>
<path fill="#2f6a63" d="M2266 500h2v12h-2z"/>
<path fill="#141414" d="M2268 500h2v12h-2z"/>
<path fill="#2f6a63" d="M2282 500h2v12h-2z"/>
<path fill="#141414" d="M2284 500h2v12h-2z"/>
<path fill="#2f6a63" d="M2266 514h2v12h-2z"/>
<path fill="#141414" d="M2268 514h2v12h-2z"/>
<path fill="#2f6a63" d="M2278 514h2v12h-2z"/>
<path fill="#141414" d="M2280 514h2v12h-2z"/>
<path fill="#2f6a63" d="M2262 528h2v12h-2z"/>
<path fill="#141414" d="M2264 528h2v12h-2z"/>
<path fill="#2f6a63" d="M2274 528h2v12h-2z"/>
<path fill="#141414" d="M2276 528h2v12h-2zM2254 598h2v12h-2z"/>
<path fill="#2f6a63" d="M2270 598h2v12h-2z"/>
<path fill="#141414" d="M2272 598h4v12h-4z"/>
<path fill="#2f6a63" d="M2294 458h2v12h-2z"/>
<path fill="#141414" d="M2296 458h2v12h-2z"/>
<path fill="#2f6a63" d="M2322 458h2v12h-2z"/>
<path fill="#141414" d="M2324 458h2v12h-2z"/>
<path fill="#2f6a63" d="M2298 500h2v12h-2z"/>
<path fill="#141414" d="M2300 500h2v12h-2z"/>
<path fill="#2f6a63" d="M2304 500h2v12h-2z"/>
<path fill="#141414" d="M2306 500h2v12h-2z"/>
<path fill="#2f6a63" d="M2320 500h2v12h-2z"/>
<path fill="#141414" d="M2322 500h2v12h-2z"/>
<path fill="#2f6a63" d="M2304 514h2v12h-2z"/>
<path fill="#141414" d="M2306 514h2v12h-2z"/>
<path fill="#2f6a63" d="M2316 514h2v12h-2z"/>
<path fill="#141414" d="M2318 514h2v12h-2z"/>
<path fill="#2f6a63" d="M2300 528h2v12h-2z"/>
<path fill="#141414" d="M2302 528h2v12h-2z"/>
<path fill="#2f6a63" d="M2312 528h2v12h-2z"/>
<path fill="#141414" d="M2314 528h2v12h-2z"/>
<path fill="#2f6a63" d="M2290 598h2v12h-2z"/>
<path fill="#141414" d="M2292 598h2v12h-2z"/>
<path fill="#2f6a63" d="M2308 598h2v12h-2z"/>
<path fill="#141414" d="M2310 598h4v12h-4z"/>
<path fill="#2f6a63" d="M2330 458h2v12h-2z"/>
<path fill="#141414" d="M2332 458h2v12h-2z"/>
<path fill="#2f6a63" d="M2358 458h2v12h-2z"/>
<path fill="#141414" d="M2360 458h2v12h-2z"/>
<path fill="#2f6a63" d="M2334 500h2v12h-2z"/>
<path fill="#141414" d="M2336 500h2v12h-2z"/>
<path fill="#2f6a63" d="M2340 500h2v12h-2z"/>
<path fill="#141414" d="M2342 500h2v12h-2z"/>
<path fill="#2f6a63" d="M2356 500h2v12h-2z"/>
<path fill="#141414" d="M2358 500h2v12h-2z"/>
<path fill="#2f6a63" d="M2340 514h2v12h-2z"/>
<path fill="#141414" d="M2342 514h2v12h-2z"/>
<path fill="#2f6a63" d="M2352 514h2v12h-2z"/>
<path fill="#141414" d="M2354 514h2v12h-2z"/>
<path fill="#2f6a63" d="M2336 528h2v12h-2z"/>
<path fill="#141414" d="M2338 528h2v12h-2z"/>
<path fill="#2f6a63" d="M2348 528h2v12h-2z"/>
<path fill="#141414" d="M2350 528h2v12h-2z"/>
<path fill="#2f6a63" d="M2326 598h2v12h-2z"/>
<path fill="#141414" d="M2328 598h2v12h-2z"/>
<path fill="#2f6a63" d="M2344 598h2v12h-2z"/>
<path fill="#141414" d="M2346 598h4v12h-4z"/>
<path fill="#2f6a63" d="M2368 458h2v12h-2z"/>
<path fill="#141414" d="M2370 458h2v12h-2z"/>
<path fill="#2f6a63" d="M2396 458h2v12h-2z"/>
<path fill="#141414" d="M2398 458h2v12h-2z"/>
<path fill="#2f6a63" d="M2372 500h2v12h-2z"/>
<path fill="#141414" d="M2374 500h2v12h-2z"/>
<path fill="#2f6a63" d="M2378 500h2v12h-2z"/>
<path fill="#141414" d="M2380 500h2v12h-2z"/>
<path fill="#2f6a63" d="M2394 500h2v12h-2z"/>
<path fill="#141414" d="M2396 500h2v12h-2z"/>
<path fill="#2f6a63" d="M2378 514h2v12h-2z"/>
<path fill="#141414" d="M2380 514h2v12h-2z"/>
<path fill="#2f6a63" d="M2390 514h2v12h-2z"/>
<path fill="#141414" d="M2392 514h2v12h-2z"/>
<path fill="#2f6a63" d="M2374 528h2v12h-2z"/>
<path fill="#141414" d="M2376 528h2v12h-2z"/>
<path fill="#2f6a63" d="M2386 528h2v12h-2z"/>
<path fill="#141414" d="M2388 528h2v12h-2z"/>
<path fill="#2f6a63" d="M2364 598h2v12h-2z"/>
<path fill="#141414" d="M2366 598h2v12h-2z"/>
<path fill="#2f6a63" d="M2382 598h2v12h-2z"/>
<path fill="#141414" d="M2384 598h4v12h-4z"/>
<text x="2259.5" y="438" font-size="18.5" fill="#0f2522" textLength="94" lengthAdjust="spacingAndGlyphs">Bassline 8</text>
<path fill="#5bbdb0" d="M2400 414h148v206h-148z"/>
<path fill="#2a625b" d="M2400 414h148v2h-148zM2400 446h148v2h-148zM2400 414h2v206h-2z"/>
<path fill="#30706a" d="M2438 448h2v172h-2zM2474 448h2v172h-2zM2510 448h2v172h-2z"/>
<path fill="#2f6a63" d="M2404 458h2v12h-2z"/>
<path fill="#141414" d="M2406 458h2v12h-2z"/>
<path fill="#2f6a63" d="M2432 458h2v12h-2z"/>
<path fill="#141414" d="M2434 458h2v12h-2z"/>
<path fill="#2f6a63" d="M2408 500h2v12h-2z"/>
<path fill="#141414" d="M2410 500h2v12h-2z"/>
<path fill="#2f6a63" d="M2414 500h2v12h-2z"/>
<path fill="#141414" d="M2416 500h2v12h-2z"/>
<path fill="#2f6a63" d="M2430 500h2v12h-2z"/>
<path fill="#141414" d="M2432 500h2v12h-2z"/>
<path fill="#2f6a63" d="M2414 514h2v12h-2z"/>
<path fill="#141414" d="M2416 514h2v12h-2z"/>
<path fill="#2f6a63" d="M2426 514h2v12h-2z"/>
<path fill="#141414" d="M2428 514h2v12h-2z"/>
<path fill="#2f6a63" d="M2410 528h2v12h-2z"/>
<path fill="#141414" d="M2412 528h2v12h-2z"/>
<path fill="#2f6a63" d="M2422 528h2v12h-2z"/>
<path fill="#141414" d="M2424 528h2v12h-2zM2402 598h2v12h-2z"/>
<path fill="#2f6a63" d="M2418 598h2v12h-2z"/>
<path fill="#141414" d="M2420 598h4v12h-4z"/>
<path fill="#2f6a63" d="M2442 458h2v12h-2z"/>
<path fill="#141414" d="M2444 458h2v12h-2z"/>
<path fill="#2f6a63" d="M2470 458h2v12h-2z"/>
<path fill="#141414" d="M2472 458h2v12h-2z"/>
<path fill="#2f6a63" d="M2446 500h2v12h-2z"/>
<path fill="#141414" d="M2448 500h2v12h-2z"/>
<path fill="#2f6a63" d="M2452 500h2v12h-2z"/>
<path fill="#141414" d="M2454 500h2v12h-2z"/>
<path fill="#2f6a63" d="M2468 500h2v12h-2z"/>
<path fill="#141414" d="M2470 500h2v12h-2z"/>
<path fill="#2f6a63" d="M2452 514h2v12h-2z"/>
<path fill="#141414" d="M2454 514h2v12h-2z"/>
<path fill="#2f6a63" d="M2464 514h2v12h-2z"/>
<path fill="#141414" d="M2466 514h2v12h-2z"/>
<path fill="#2f6a63" d="M2448 528h2v12h-2z"/>
<path fill="#141414" d="M2450 528h2v12h-2z"/>
<path fill="#2f6a63" d="M2460 528h2v12h-2z"/>
<path fill="#141414" d="M2462 528h2v12h-2z"/>
<path fill="#2f6a63" d="M2438 598h2v12h-2z"/>
<path fill="#141414" d="M2440 598h2v12h-2z"/>
<path fill="#2f6a63" d="M2456 598h2v12h-2z"/>
<path fill="#141414" d="M2458 598h4v12h-4z"/>
<path fill="#2f6a63" d="M2478 458h2v12h-2z"/>
<path fill="#141414" d="M2480 458h2v12h-2z"/>
<path fill="#2f6a63" d="M2506 458h2v12h-2z"/>
<path fill="#141414" d="M2508 458h2v12h-2z"/>
<path fill="#2f6a63" d="M2482 500h2v12h-2z"/>
<path fill="#141414" d="M2484 500h2v12h-2z"/>
<path fill="#2f6a63" d="M2488 500h2v12h-2z"/>
<path fill="#141414" d="M2490 500h2v12h-2z"/>
<path fill="#2f6a63" d="M2504 500h2v12h-2z"/>
<path fill="#141414" d="M2506 500h2v12h-2z"/>
<path fill="#2f6a63" d="M2488 514h2v12h-2z"/>
<path fill="#141414" d="M2490 514h2v12h-2z"/>
<path fill="#2f6a63" d="M2500 514h2v12h-2z"/>
<path fill="#141414" d="M2502 514h2v12h-2z"/>
<path fill="#2f6a63" d="M2484 528h2v12h-2z"/>
<path fill="#141414" d="M2486 528h2v12h-2z"/>
<path fill="#2f6a63" d="M2496 528h2v12h-2z"/>
<path fill="#141414" d="M2498 528h2v12h-2z"/>
<path fill="#2f6a63" d="M2474 598h2v12h-2z"/>
<path fill="#141414" d="M2476 598h2v12h-2z"/>
<path fill="#2f6a63" d="M2492 598h2v12h-2z"/>
<path fill="#141414" d="M2494 598h4v12h-4z"/>
<path fill="#2f6a63" d="M2514 458h2v12h-2z"/>
<path fill="#141414" d="M2516 458h2v12h-2z"/>
<path fill="#2f6a63" d="M2542 458h2v12h-2z"/>
<path fill="#141414" d="M2544 458h2v12h-2z"/>
<path fill="#2f6a63" d="M2518 500h2v12h-2z"/>
<path fill="#141414" d="M2520 500h2v12h-2z"/>
<path fill="#2f6a63" d="M2524 500h2v12h-2z"/>
<path fill="#141414" d="M2526 500h2v12h-2z"/>
<path fill="#2f6a63" d="M2540 500h2v12h-2z"/>
<path fill="#141414" d="M2542 500h2v12h-2z"/>
<path fill="#2f6a63" d="M2524 514h2v12h-2z"/>
<path fill="#141414" d="M2526 514h2v12h-2z"/>
<path fill="#2f6a63" d="M2536 514h2v12h-2z"/>
<path fill="#141414" d="M2538 514h2v12h-2z"/>
<path fill="#2f6a63" d="M2520 528h2v12h-2z"/>
<path fill="#141414" d="M2522 528h2v12h-2z"/>
<path fill="#2f6a63" d="M2532 528h2v12h-2z"/>
<path fill="#141414" d="M2534 528h2v12h-2z"/>
<path fill="#2f6a63" d="M2510 598h2v12h-2z"/>
<path fill="#141414" d="M2512 598h2v12h-2z"/>
<path fill="#2f6a63" d="M2528 598h2v12h-2z"/>
<path fill="#141414" d="M2530 598h4v12h-4z"/>
<text x="2407.5" y="438" font-size="18.5" fill="#0f2522" textLength="94" lengthAdjust="spacingAndGlyphs">Bassline 8</text>
<path fill="#34607f" d="M996 414h20v206h-20z"/>
<path fill="#28506c" d="M996 414h20v2h-20zM996 446h20v2h-20zM996 414h2v206h-2z"/>
<path fill="#0e1a24" d="M1002 458h2v12h-2zM1006 500h2v12h-2zM1012 500h2v12h-2zM1012 514h2v12h-2zM1008 528h2v12h-2zM998 598h2v12h-2z"/>
<text x="1000" y="438" font-size="18.5" fill="#e6eef5">B</text>
<path fill="#666666" d="M1016 414h18v34h-18z"/>
<text x="1019" y="438" font-size="18.5" fill="#3a3a3a">B</text>
<path fill="#6a6a6a" d="M1030 458h2v12h-2zM1028 500h2v12h-2zM1024 514h2v12h-2zM1020 528h2v12h-2zM1016 598h4v12h-4z"/>
<path fill="#666666" d="M1616 414h46v34h-46z"/>
<text x="1623" y="438" font-size="18.5" fill="#3a3a3a">Ba</text>
<text x="1651" y="438" font-size="18.5" fill="#3a3a3a">B</text>
<path fill="#5a5a5a" d="M1648 414h2v34h-2z"/>
<path fill="#6a6a6a" d="M1622 458h2v12h-2zM1620 500h2v12h-2zM1616 514h2v12h-2zM1630 458h2v12h-2zM1658 458h2v12h-2zM1634 500h2v12h-2zM1640 500h2v12h-2zM1656 500h2v12h-2zM1640 514h2v12h-2zM1652 514h2v12h-2zM1636 528h2v12h-2zM1648 528h2v12h-2zM1626 598h2v12h-2zM1644 598h4v12h-4z"/>
<path fill="#bde04a" d="M2 628h274v6h-274z"/>
<rect x="36" y="628" width="2" height="6" fill="#000" fill-opacity="0.4"/>
<rect x="74" y="628" width="2" height="6" fill="#000" fill-opacity="0.4"/>
<rect x="110" y="628" width="2" height="6" fill="#000" fill-opacity="0.4"/>
<rect x="148" y="628" width="2" height="6" fill="#000" fill-opacity="0.4"/>
<rect x="184" y="628" width="2" height="6" fill="#000" fill-opacity="0.4"/>
<rect x="222" y="628" width="2" height="6" fill="#000" fill-opacity="0.4"/>
<rect x="258" y="628" width="2" height="6" fill="#000" fill-opacity="0.4"/>
<path fill="#6be050" d="M2 636h274v6h-274z"/>
<rect x="36" y="636" width="2" height="6" fill="#000" fill-opacity="0.4"/>
<rect x="74" y="636" width="2" height="6" fill="#000" fill-opacity="0.4"/>
<rect x="110" y="636" width="2" height="6" fill="#000" fill-opacity="0.4"/>
<rect x="148" y="636" width="2" height="6" fill="#000" fill-opacity="0.4"/>
<rect x="184" y="636" width="2" height="6" fill="#000" fill-opacity="0.4"/>
<rect x="222" y="636" width="2" height="6" fill="#000" fill-opacity="0.4"/>
<rect x="258" y="636" width="2" height="6" fill="#000" fill-opacity="0.4"/>
<path fill="#b48c3c" d="M2 652h274v6h-274z"/>
<rect x="36" y="652" width="2" height="6" fill="#000" fill-opacity="0.4"/>
<rect x="74" y="652" width="2" height="6" fill="#000" fill-opacity="0.4"/>
<rect x="110" y="652" width="2" height="6" fill="#000" fill-opacity="0.4"/>
<rect x="148" y="652" width="2" height="6" fill="#000" fill-opacity="0.4"/>
<rect x="184" y="652" width="2" height="6" fill="#000" fill-opacity="0.4"/>
<rect x="222" y="652" width="2" height="6" fill="#000" fill-opacity="0.4"/>
<rect x="258" y="652" width="2" height="6" fill="#000" fill-opacity="0.4"/>
<path fill="#6be050" d="M286 636h10v6h-10z"/>
<path fill="#cdf54f" d="M296 628h294v6h-294z"/>
<rect x="296" y="628" width="2" height="6" fill="#000" fill-opacity="0.4"/>
<rect x="332" y="628" width="2" height="6" fill="#000" fill-opacity="0.4"/>
<rect x="370" y="628" width="2" height="6" fill="#000" fill-opacity="0.4"/>
<rect x="406" y="628" width="2" height="6" fill="#000" fill-opacity="0.4"/>
<rect x="444" y="628" width="2" height="6" fill="#000" fill-opacity="0.4"/>
<rect x="480" y="628" width="2" height="6" fill="#000" fill-opacity="0.4"/>
<rect x="516" y="628" width="2" height="6" fill="#000" fill-opacity="0.4"/>
<rect x="554" y="628" width="2" height="6" fill="#000" fill-opacity="0.4"/>
<rect x="590" y="628" width="2" height="6" fill="#000" fill-opacity="0.4"/>
<path fill="#bde04a" d="M590 628h148v6h-148z"/>
<rect x="590" y="628" width="2" height="6" fill="#000" fill-opacity="0.4"/>
<rect x="628" y="628" width="2" height="6" fill="#000" fill-opacity="0.4"/>
<rect x="664" y="628" width="2" height="6" fill="#000" fill-opacity="0.4"/>
<rect x="702" y="628" width="2" height="6" fill="#000" fill-opacity="0.4"/>
<rect x="738" y="628" width="2" height="6" fill="#000" fill-opacity="0.4"/>
<path fill="#7bf55a" d="M296 636h294v6h-294z"/>
<rect x="296" y="636" width="2" height="6" fill="#000" fill-opacity="0.4"/>
<rect x="332" y="636" width="2" height="6" fill="#000" fill-opacity="0.4"/>
<rect x="370" y="636" width="2" height="6" fill="#000" fill-opacity="0.4"/>
<rect x="406" y="636" width="2" height="6" fill="#000" fill-opacity="0.4"/>
<rect x="444" y="636" width="2" height="6" fill="#000" fill-opacity="0.4"/>
<rect x="480" y="636" width="2" height="6" fill="#000" fill-opacity="0.4"/>
<rect x="516" y="636" width="2" height="6" fill="#000" fill-opacity="0.4"/>
<rect x="554" y="636" width="2" height="6" fill="#000" fill-opacity="0.4"/>
<rect x="590" y="636" width="2" height="6" fill="#000" fill-opacity="0.4"/>
<path fill="#c99c42" d="M296 652h294v6h-294z"/>
<rect x="296" y="652" width="2" height="6" fill="#000" fill-opacity="0.4"/>
<rect x="332" y="652" width="2" height="6" fill="#000" fill-opacity="0.4"/>
<rect x="370" y="652" width="2" height="6" fill="#000" fill-opacity="0.4"/>
<rect x="406" y="652" width="2" height="6" fill="#000" fill-opacity="0.4"/>
<rect x="444" y="652" width="2" height="6" fill="#000" fill-opacity="0.4"/>
<rect x="480" y="652" width="2" height="6" fill="#000" fill-opacity="0.4"/>
<rect x="516" y="652" width="2" height="6" fill="#000" fill-opacity="0.4"/>
<rect x="554" y="652" width="2" height="6" fill="#000" fill-opacity="0.4"/>
<rect x="590" y="652" width="2" height="6" fill="#000" fill-opacity="0.4"/>
<path fill="#b48c3c" d="M590 652h148v6h-148z"/>
<rect x="590" y="652" width="2" height="6" fill="#000" fill-opacity="0.4"/>
<rect x="628" y="652" width="2" height="6" fill="#000" fill-opacity="0.4"/>
<rect x="664" y="652" width="2" height="6" fill="#000" fill-opacity="0.4"/>
<rect x="702" y="652" width="2" height="6" fill="#000" fill-opacity="0.4"/>
<rect x="738" y="652" width="2" height="6" fill="#000" fill-opacity="0.4"/>
<path fill="#6ae6fa" d="M296 660h294v6h-294z"/>
<rect x="296" y="660" width="2" height="6" fill="#000" fill-opacity="0.4"/>
<rect x="332" y="660" width="2" height="6" fill="#000" fill-opacity="0.4"/>
<rect x="370" y="660" width="2" height="6" fill="#000" fill-opacity="0.4"/>
<rect x="406" y="660" width="2" height="6" fill="#000" fill-opacity="0.4"/>
<rect x="444" y="660" width="2" height="6" fill="#000" fill-opacity="0.4"/>
<rect x="480" y="660" width="2" height="6" fill="#000" fill-opacity="0.4"/>
<rect x="516" y="660" width="2" height="6" fill="#000" fill-opacity="0.4"/>
<rect x="554" y="660" width="2" height="6" fill="#000" fill-opacity="0.4"/>
<rect x="590" y="660" width="2" height="6" fill="#000" fill-opacity="0.4"/>
<path fill="#5ccde0" d="M590 660h148v6h-148z"/>
<rect x="590" y="660" width="2" height="6" fill="#000" fill-opacity="0.4"/>
<rect x="628" y="660" width="2" height="6" fill="#000" fill-opacity="0.4"/>
<rect x="664" y="660" width="2" height="6" fill="#000" fill-opacity="0.4"/>
<rect x="702" y="660" width="2" height="6" fill="#000" fill-opacity="0.4"/>
<rect x="738" y="660" width="2" height="6" fill="#000" fill-opacity="0.4"/>
<path fill="#6ae6fa" d="M296 668h294v6h-294z"/>
<rect x="296" y="668" width="2" height="6" fill="#000" fill-opacity="0.4"/>
<rect x="332" y="668" width="2" height="6" fill="#000" fill-opacity="0.4"/>
<rect x="370" y="668" width="2" height="6" fill="#000" fill-opacity="0.4"/>
<rect x="406" y="668" width="2" height="6" fill="#000" fill-opacity="0.4"/>
<rect x="444" y="668" width="2" height="6" fill="#000" fill-opacity="0.4"/>
<rect x="480" y="668" width="2" height="6" fill="#000" fill-opacity="0.4"/>
<rect x="516" y="668" width="2" height="6" fill="#000" fill-opacity="0.4"/>
<rect x="554" y="668" width="2" height="6" fill="#000" fill-opacity="0.4"/>
<rect x="590" y="668" width="2" height="6" fill="#000" fill-opacity="0.4"/>
<path fill="#5ccde0" d="M590 668h148v6h-148z"/>
<rect x="590" y="668" width="2" height="6" fill="#000" fill-opacity="0.4"/>
<rect x="628" y="668" width="2" height="6" fill="#000" fill-opacity="0.4"/>
<rect x="664" y="668" width="2" height="6" fill="#000" fill-opacity="0.4"/>
<rect x="702" y="668" width="2" height="6" fill="#000" fill-opacity="0.4"/>
<rect x="738" y="668" width="2" height="6" fill="#000" fill-opacity="0.4"/>
<path fill="#5ccde0" d="M738 660h148v6h-148z"/>
<rect x="738" y="660" width="2" height="6" fill="#000" fill-opacity="0.4"/>
<rect x="776" y="660" width="2" height="6" fill="#000" fill-opacity="0.4"/>
<rect x="812" y="660" width="2" height="6" fill="#000" fill-opacity="0.4"/>
<rect x="850" y="660" width="2" height="6" fill="#000" fill-opacity="0.4"/>
<rect x="886" y="660" width="2" height="6" fill="#000" fill-opacity="0.4"/>
<path fill="#6ae6fa" d="M886 660h130v6h-130z"/>
<rect x="886" y="660" width="2" height="6" fill="#000" fill-opacity="0.4"/>
<rect x="924" y="660" width="2" height="6" fill="#000" fill-opacity="0.4"/>
<rect x="960" y="660" width="2" height="6" fill="#000" fill-opacity="0.4"/>
<rect x="996" y="660" width="2" height="6" fill="#000" fill-opacity="0.4"/>
<path fill="#7bf55a" d="M1024 636h10v6h-10z"/>
<rect x="1034" y="636" width="2" height="6" fill="#000" fill-opacity="0.4"/>
<path fill="#cdf54f" d="M1034 628h148v6h-148z"/>
<rect x="1034" y="628" width="2" height="6" fill="#000" fill-opacity="0.4"/>
<rect x="1070" y="628" width="2" height="6" fill="#000" fill-opacity="0.4"/>
<rect x="1108" y="628" width="2" height="6" fill="#000" fill-opacity="0.4"/>
<rect x="1144" y="628" width="2" height="6" fill="#000" fill-opacity="0.4"/>
<rect x="1182" y="628" width="2" height="6" fill="#000" fill-opacity="0.4"/>
<path fill="#bde04a" d="M1182 628h148v6h-148z"/>
<rect x="1182" y="628" width="2" height="6" fill="#000" fill-opacity="0.4"/>
<rect x="1218" y="628" width="2" height="6" fill="#000" fill-opacity="0.4"/>
<rect x="1256" y="628" width="2" height="6" fill="#000" fill-opacity="0.4"/>
<rect x="1292" y="628" width="2" height="6" fill="#000" fill-opacity="0.4"/>
<rect x="1330" y="628" width="2" height="6" fill="#000" fill-opacity="0.4"/>
<path fill="#7bf55a" d="M1034 636h148v6h-148z"/>
<rect x="1034" y="636" width="2" height="6" fill="#000" fill-opacity="0.4"/>
<rect x="1070" y="636" width="2" height="6" fill="#000" fill-opacity="0.4"/>
<rect x="1108" y="636" width="2" height="6" fill="#000" fill-opacity="0.4"/>
<rect x="1144" y="636" width="2" height="6" fill="#000" fill-opacity="0.4"/>
<rect x="1182" y="636" width="2" height="6" fill="#000" fill-opacity="0.4"/>
<path fill="#6be050" d="M1182 636h148v6h-148z"/>
<rect x="1182" y="636" width="2" height="6" fill="#000" fill-opacity="0.4"/>
<rect x="1218" y="636" width="2" height="6" fill="#000" fill-opacity="0.4"/>
<rect x="1256" y="636" width="2" height="6" fill="#000" fill-opacity="0.4"/>
<rect x="1292" y="636" width="2" height="6" fill="#000" fill-opacity="0.4"/>
<rect x="1330" y="636" width="2" height="6" fill="#000" fill-opacity="0.4"/>
<path fill="#cdf54f" d="M1034 644h148v6h-148z"/>
<rect x="1034" y="644" width="2" height="6" fill="#000" fill-opacity="0.4"/>
<rect x="1070" y="644" width="2" height="6" fill="#000" fill-opacity="0.4"/>
<rect x="1108" y="644" width="2" height="6" fill="#000" fill-opacity="0.4"/>
<rect x="1144" y="644" width="2" height="6" fill="#000" fill-opacity="0.4"/>
<rect x="1182" y="644" width="2" height="6" fill="#000" fill-opacity="0.4"/>
<path fill="#bde04a" d="M1182 644h148v6h-148z"/>
<rect x="1182" y="644" width="2" height="6" fill="#000" fill-opacity="0.4"/>
<rect x="1218" y="644" width="2" height="6" fill="#000" fill-opacity="0.4"/>
<rect x="1256" y="644" width="2" height="6" fill="#000" fill-opacity="0.4"/>
<rect x="1292" y="644" width="2" height="6" fill="#000" fill-opacity="0.4"/>
<rect x="1330" y="644" width="2" height="6" fill="#000" fill-opacity="0.4"/>
<path fill="#c99c42" d="M1034 652h148v6h-148z"/>
<rect x="1034" y="652" width="2" height="6" fill="#000" fill-opacity="0.4"/>
<rect x="1070" y="652" width="2" height="6" fill="#000" fill-opacity="0.4"/>
<rect x="1108" y="652" width="2" height="6" fill="#000" fill-opacity="0.4"/>
<rect x="1144" y="652" width="2" height="6" fill="#000" fill-opacity="0.4"/>
<rect x="1182" y="652" width="2" height="6" fill="#000" fill-opacity="0.4"/>
<path fill="#b48c3c" d="M1182 652h148v6h-148z"/>
<rect x="1182" y="652" width="2" height="6" fill="#000" fill-opacity="0.4"/>
<rect x="1218" y="652" width="2" height="6" fill="#000" fill-opacity="0.4"/>
<rect x="1256" y="652" width="2" height="6" fill="#000" fill-opacity="0.4"/>
<rect x="1292" y="652" width="2" height="6" fill="#000" fill-opacity="0.4"/>
<rect x="1330" y="652" width="2" height="6" fill="#000" fill-opacity="0.4"/>
<path fill="#6ae6fa" d="M1034 660h148v6h-148z"/>
<rect x="1034" y="660" width="2" height="6" fill="#000" fill-opacity="0.4"/>
<rect x="1070" y="660" width="2" height="6" fill="#000" fill-opacity="0.4"/>
<rect x="1108" y="660" width="2" height="6" fill="#000" fill-opacity="0.4"/>
<rect x="1144" y="660" width="2" height="6" fill="#000" fill-opacity="0.4"/>
<rect x="1182" y="660" width="2" height="6" fill="#000" fill-opacity="0.4"/>
<path fill="#5ccde0" d="M1182 660h148v6h-148z"/>
<rect x="1182" y="660" width="2" height="6" fill="#000" fill-opacity="0.4"/>
<rect x="1218" y="660" width="2" height="6" fill="#000" fill-opacity="0.4"/>
<rect x="1256" y="660" width="2" height="6" fill="#000" fill-opacity="0.4"/>
<rect x="1292" y="660" width="2" height="6" fill="#000" fill-opacity="0.4"/>
<rect x="1330" y="660" width="2" height="6" fill="#000" fill-opacity="0.4"/>
<path fill="#6ae6fa" d="M1034 668h148v6h-148z"/>
<rect x="1034" y="668" width="2" height="6" fill="#000" fill-opacity="0.4"/>
<rect x="1070" y="668" width="2" height="6" fill="#000" fill-opacity="0.4"/>
<rect x="1108" y="668" width="2" height="6" fill="#000" fill-opacity="0.4"/>
<rect x="1144" y="668" width="2" height="6" fill="#000" fill-opacity="0.4"/>
<rect x="1182" y="668" width="2" height="6" fill="#000" fill-opacity="0.4"/>
<path fill="#5ccde0" d="M1182 668h148v6h-148z"/>
<rect x="1182" y="668" width="2" height="6" fill="#000" fill-opacity="0.4"/>
<rect x="1218" y="668" width="2" height="6" fill="#000" fill-opacity="0.4"/>
<rect x="1256" y="668" width="2" height="6" fill="#000" fill-opacity="0.4"/>
<rect x="1292" y="668" width="2" height="6" fill="#000" fill-opacity="0.4"/>
<rect x="1330" y="668" width="2" height="6" fill="#000" fill-opacity="0.4"/>
<path fill="#bde04a" d="M1330 628h148v6h-148z"/>
<rect x="1330" y="628" width="2" height="6" fill="#000" fill-opacity="0.4"/>
<rect x="1366" y="628" width="2" height="6" fill="#000" fill-opacity="0.4"/>
<rect x="1404" y="628" width="2" height="6" fill="#000" fill-opacity="0.4"/>
<rect x="1440" y="628" width="2" height="6" fill="#000" fill-opacity="0.4"/>
<path fill="#cdf54f" d="M1478 628h166v6h-166z"/>
<rect x="1478" y="628" width="2" height="6" fill="#000" fill-opacity="0.4"/>
<rect x="1514" y="628" width="2" height="6" fill="#000" fill-opacity="0.4"/>
<rect x="1550" y="628" width="2" height="6" fill="#000" fill-opacity="0.4"/>
<rect x="1588" y="628" width="2" height="6" fill="#000" fill-opacity="0.4"/>
<rect x="1624" y="628" width="2" height="6" fill="#000" fill-opacity="0.4"/>
<path fill="#bde04a" d="M1330 644h148v6h-148z"/>
<rect x="1330" y="644" width="2" height="6" fill="#000" fill-opacity="0.4"/>
<rect x="1366" y="644" width="2" height="6" fill="#000" fill-opacity="0.4"/>
<rect x="1404" y="644" width="2" height="6" fill="#000" fill-opacity="0.4"/>
<rect x="1440" y="644" width="2" height="6" fill="#000" fill-opacity="0.4"/>
<path fill="#cdf54f" d="M1478 644h166v6h-166z"/>
<rect x="1478" y="644" width="2" height="6" fill="#000" fill-opacity="0.4"/>
<rect x="1514" y="644" width="2" height="6" fill="#000" fill-opacity="0.4"/>
<rect x="1550" y="644" width="2" height="6" fill="#000" fill-opacity="0.4"/>
<rect x="1588" y="644" width="2" height="6" fill="#000" fill-opacity="0.4"/>
<rect x="1624" y="644" width="2" height="6" fill="#000" fill-opacity="0.4"/>
<path fill="#b48c3c" d="M1330 652h148v6h-148z"/>
<rect x="1330" y="652" width="2" height="6" fill="#000" fill-opacity="0.4"/>
<rect x="1366" y="652" width="2" height="6" fill="#000" fill-opacity="0.4"/>
<rect x="1404" y="652" width="2" height="6" fill="#000" fill-opacity="0.4"/>
<rect x="1440" y="652" width="2" height="6" fill="#000" fill-opacity="0.4"/>
<path fill="#c99c42" d="M1478 652h166v6h-166z"/>
<rect x="1478" y="652" width="2" height="6" fill="#000" fill-opacity="0.4"/>
<rect x="1514" y="652" width="2" height="6" fill="#000" fill-opacity="0.4"/>
<rect x="1550" y="652" width="2" height="6" fill="#000" fill-opacity="0.4"/>
<rect x="1588" y="652" width="2" height="6" fill="#000" fill-opacity="0.4"/>
<rect x="1624" y="652" width="2" height="6" fill="#000" fill-opacity="0.4"/>
<path fill="#6be050" d="M1330 636h138v6h-138z"/>
<rect x="1330" y="636" width="2" height="6" fill="#000" fill-opacity="0.4"/>
<rect x="1366" y="636" width="2" height="6" fill="#000" fill-opacity="0.4"/>
<rect x="1404" y="636" width="2" height="6" fill="#000" fill-opacity="0.4"/>
<rect x="1440" y="636" width="2" height="6" fill="#000" fill-opacity="0.4"/>
<path fill="#7bf55a" d="M1478 636h146v6h-146z"/>
<rect x="1478" y="636" width="2" height="6" fill="#000" fill-opacity="0.4"/>
<rect x="1514" y="636" width="2" height="6" fill="#000" fill-opacity="0.4"/>
<rect x="1550" y="636" width="2" height="6" fill="#000" fill-opacity="0.4"/>
<rect x="1588" y="636" width="2" height="6" fill="#000" fill-opacity="0.4"/>
<path fill="#5ccde0" d="M1330 660h148v6h-148z"/>
<rect x="1330" y="660" width="2" height="6" fill="#000" fill-opacity="0.4"/>
<rect x="1366" y="660" width="2" height="6" fill="#000" fill-opacity="0.4"/>
<rect x="1404" y="660" width="2" height="6" fill="#000" fill-opacity="0.4"/>
<rect x="1440" y="660" width="2" height="6" fill="#000" fill-opacity="0.4"/>
<path fill="#6ae6fa" d="M1478 660h146v6h-146z"/>
<rect x="1478" y="660" width="2" height="6" fill="#000" fill-opacity="0.4"/>
<rect x="1514" y="660" width="2" height="6" fill="#000" fill-opacity="0.4"/>
<rect x="1550" y="660" width="2" height="6" fill="#000" fill-opacity="0.4"/>
<rect x="1588" y="660" width="2" height="6" fill="#000" fill-opacity="0.4"/>
<path fill="#5ccde0" d="M1330 668h148v6h-148z"/>
<rect x="1330" y="668" width="2" height="6" fill="#000" fill-opacity="0.4"/>
<rect x="1366" y="668" width="2" height="6" fill="#000" fill-opacity="0.4"/>
<rect x="1404" y="668" width="2" height="6" fill="#000" fill-opacity="0.4"/>
<rect x="1440" y="668" width="2" height="6" fill="#000" fill-opacity="0.4"/>
<path fill="#6ae6fa" d="M1478 668h146v6h-146z"/>
<rect x="1478" y="668" width="2" height="6" fill="#000" fill-opacity="0.4"/>
<rect x="1514" y="668" width="2" height="6" fill="#000" fill-opacity="0.4"/>
<rect x="1550" y="668" width="2" height="6" fill="#000" fill-opacity="0.4"/>
<rect x="1588" y="668" width="2" height="6" fill="#000" fill-opacity="0.4"/>
<path fill="#6be050" d="M1652 636h10v6h-10z"/>
<path fill="#cdf54f" d="M1662 628h112v6h-112z"/>
<rect x="1662" y="628" width="2" height="6" fill="#000" fill-opacity="0.4"/>
<rect x="1698" y="628" width="2" height="6" fill="#000" fill-opacity="0.4"/>
<rect x="1736" y="628" width="2" height="6" fill="#000" fill-opacity="0.4"/>
<rect x="1772" y="628" width="2" height="6" fill="#000" fill-opacity="0.4"/>
<path fill="#bde04a" d="M1774 628h294v6h-294z"/>
<rect x="1810" y="628" width="2" height="6" fill="#000" fill-opacity="0.4"/>
<rect x="1846" y="628" width="2" height="6" fill="#000" fill-opacity="0.4"/>
<rect x="1884" y="628" width="2" height="6" fill="#000" fill-opacity="0.4"/>
<rect x="1920" y="628" width="2" height="6" fill="#000" fill-opacity="0.4"/>
<rect x="1958" y="628" width="2" height="6" fill="#000" fill-opacity="0.4"/>
<rect x="1994" y="628" width="2" height="6" fill="#000" fill-opacity="0.4"/>
<rect x="2030" y="628" width="2" height="6" fill="#000" fill-opacity="0.4"/>
<rect x="2068" y="628" width="2" height="6" fill="#000" fill-opacity="0.4"/>
<path fill="#cdf54f" d="M2068 628h296v6h-296z"/>
<rect x="2068" y="628" width="2" height="6" fill="#000" fill-opacity="0.4"/>
<rect x="2104" y="628" width="2" height="6" fill="#000" fill-opacity="0.4"/>
<rect x="2142" y="628" width="2" height="6" fill="#000" fill-opacity="0.4"/>
<rect x="2178" y="628" width="2" height="6" fill="#000" fill-opacity="0.4"/>
<rect x="2216" y="628" width="2" height="6" fill="#000" fill-opacity="0.4"/>
<rect x="2252" y="628" width="2" height="6" fill="#000" fill-opacity="0.4"/>
<rect x="2290" y="628" width="2" height="6" fill="#000" fill-opacity="0.4"/>
<rect x="2326" y="628" width="2" height="6" fill="#000" fill-opacity="0.4"/>
<path fill="#bde04a" d="M2364 628h184v6h-184z"/>
<rect x="2364" y="628" width="2" height="6" fill="#000" fill-opacity="0.4"/>
<rect x="2400" y="628" width="2" height="6" fill="#000" fill-opacity="0.4"/>
<rect x="2438" y="628" width="2" height="6" fill="#000" fill-opacity="0.4"/>
<rect x="2474" y="628" width="2" height="6" fill="#000" fill-opacity="0.4"/>
<rect x="2510" y="628" width="2" height="6" fill="#000" fill-opacity="0.4"/>
<path fill="#7bf55a" d="M1662 636h112v6h-112z"/>
<rect x="1662" y="636" width="2" height="6" fill="#000" fill-opacity="0.4"/>
<rect x="1698" y="636" width="2" height="6" fill="#000" fill-opacity="0.4"/>
<rect x="1736" y="636" width="2" height="6" fill="#000" fill-opacity="0.4"/>
<rect x="1772" y="636" width="2" height="6" fill="#000" fill-opacity="0.4"/>
<path fill="#6be050" d="M1774 636h294v6h-294z"/>
<rect x="1810" y="636" width="2" height="6" fill="#000" fill-opacity="0.4"/>
<rect x="1846" y="636" width="2" height="6" fill="#000" fill-opacity="0.4"/>
<rect x="1884" y="636" width="2" height="6" fill="#000" fill-opacity="0.4"/>
<rect x="1920" y="636" width="2" height="6" fill="#000" fill-opacity="0.4"/>
<rect x="1958" y="636" width="2" height="6" fill="#000" fill-opacity="0.4"/>
<rect x="1994" y="636" width="2" height="6" fill="#000" fill-opacity="0.4"/>
<rect x="2030" y="636" width="2" height="6" fill="#000" fill-opacity="0.4"/>
<rect x="2068" y="636" width="2" height="6" fill="#000" fill-opacity="0.4"/>
<path fill="#7bf55a" d="M2068 636h296v6h-296z"/>
<rect x="2068" y="636" width="2" height="6" fill="#000" fill-opacity="0.4"/>
<rect x="2104" y="636" width="2" height="6" fill="#000" fill-opacity="0.4"/>
<rect x="2142" y="636" width="2" height="6" fill="#000" fill-opacity="0.4"/>
<rect x="2178" y="636" width="2" height="6" fill="#000" fill-opacity="0.4"/>
<rect x="2216" y="636" width="2" height="6" fill="#000" fill-opacity="0.4"/>
<rect x="2252" y="636" width="2" height="6" fill="#000" fill-opacity="0.4"/>
<rect x="2290" y="636" width="2" height="6" fill="#000" fill-opacity="0.4"/>
<rect x="2326" y="636" width="2" height="6" fill="#000" fill-opacity="0.4"/>
<path fill="#6be050" d="M2364 636h184v6h-184z"/>
<rect x="2364" y="636" width="2" height="6" fill="#000" fill-opacity="0.4"/>
<rect x="2400" y="636" width="2" height="6" fill="#000" fill-opacity="0.4"/>
<rect x="2438" y="636" width="2" height="6" fill="#000" fill-opacity="0.4"/>
<rect x="2474" y="636" width="2" height="6" fill="#000" fill-opacity="0.4"/>
<rect x="2510" y="636" width="2" height="6" fill="#000" fill-opacity="0.4"/>
<path fill="#cdf54f" d="M1662 644h112v6h-112z"/>
<rect x="1662" y="644" width="2" height="6" fill="#000" fill-opacity="0.4"/>
<rect x="1698" y="644" width="2" height="6" fill="#000" fill-opacity="0.4"/>
<rect x="1736" y="644" width="2" height="6" fill="#000" fill-opacity="0.4"/>
<rect x="1772" y="644" width="2" height="6" fill="#000" fill-opacity="0.4"/>
<path fill="#bde04a" d="M1774 644h294v6h-294z"/>
<rect x="1810" y="644" width="2" height="6" fill="#000" fill-opacity="0.4"/>
<rect x="1846" y="644" width="2" height="6" fill="#000" fill-opacity="0.4"/>
<rect x="1884" y="644" width="2" height="6" fill="#000" fill-opacity="0.4"/>
<rect x="1920" y="644" width="2" height="6" fill="#000" fill-opacity="0.4"/>
<rect x="1958" y="644" width="2" height="6" fill="#000" fill-opacity="0.4"/>
<rect x="1994" y="644" width="2" height="6" fill="#000" fill-opacity="0.4"/>
<rect x="2030" y="644" width="2" height="6" fill="#000" fill-opacity="0.4"/>
<rect x="2068" y="644" width="2" height="6" fill="#000" fill-opacity="0.4"/>
<path fill="#cdf54f" d="M2068 644h296v6h-296z"/>
<rect x="2068" y="644" width="2" height="6" fill="#000" fill-opacity="0.4"/>
<rect x="2104" y="644" width="2" height="6" fill="#000" fill-opacity="0.4"/>
<rect x="2142" y="644" width="2" height="6" fill="#000" fill-opacity="0.4"/>
<rect x="2178" y="644" width="2" height="6" fill="#000" fill-opacity="0.4"/>
<rect x="2216" y="644" width="2" height="6" fill="#000" fill-opacity="0.4"/>
<rect x="2252" y="644" width="2" height="6" fill="#000" fill-opacity="0.4"/>
<rect x="2290" y="644" width="2" height="6" fill="#000" fill-opacity="0.4"/>
<rect x="2326" y="644" width="2" height="6" fill="#000" fill-opacity="0.4"/>
<path fill="#bde04a" d="M2364 644h184v6h-184z"/>
<rect x="2364" y="644" width="2" height="6" fill="#000" fill-opacity="0.4"/>
<rect x="2400" y="644" width="2" height="6" fill="#000" fill-opacity="0.4"/>
<rect x="2438" y="644" width="2" height="6" fill="#000" fill-opacity="0.4"/>
<rect x="2474" y="644" width="2" height="6" fill="#000" fill-opacity="0.4"/>
<rect x="2510" y="644" width="2" height="6" fill="#000" fill-opacity="0.4"/>
<path fill="#c99c42" d="M1662 652h112v6h-112z"/>
<rect x="1662" y="652" width="2" height="6" fill="#000" fill-opacity="0.4"/>
<rect x="1698" y="652" width="2" height="6" fill="#000" fill-opacity="0.4"/>
<rect x="1736" y="652" width="2" height="6" fill="#000" fill-opacity="0.4"/>
<rect x="1772" y="652" width="2" height="6" fill="#000" fill-opacity="0.4"/>
<path fill="#b48c3c" d="M1774 652h294v6h-294z"/>
<rect x="1810" y="652" width="2" height="6" fill="#000" fill-opacity="0.4"/>
<rect x="1846" y="652" width="2" height="6" fill="#000" fill-opacity="0.4"/>
<rect x="1884" y="652" width="2" height="6" fill="#000" fill-opacity="0.4"/>
<rect x="1920" y="652" width="2" height="6" fill="#000" fill-opacity="0.4"/>
<rect x="1958" y="652" width="2" height="6" fill="#000" fill-opacity="0.4"/>
<rect x="1994" y="652" width="2" height="6" fill="#000" fill-opacity="0.4"/>
<rect x="2030" y="652" width="2" height="6" fill="#000" fill-opacity="0.4"/>
<rect x="2068" y="652" width="2" height="6" fill="#000" fill-opacity="0.4"/>
<path fill="#c99c42" d="M2068 652h296v6h-296z"/>
<rect x="2068" y="652" width="2" height="6" fill="#000" fill-opacity="0.4"/>
<rect x="2104" y="652" width="2" height="6" fill="#000" fill-opacity="0.4"/>
<rect x="2142" y="652" width="2" height="6" fill="#000" fill-opacity="0.4"/>
<rect x="2178" y="652" width="2" height="6" fill="#000" fill-opacity="0.4"/>
<rect x="2216" y="652" width="2" height="6" fill="#000" fill-opacity="0.4"/>
<rect x="2252" y="652" width="2" height="6" fill="#000" fill-opacity="0.4"/>
<rect x="2290" y="652" width="2" height="6" fill="#000" fill-opacity="0.4"/>
<rect x="2326" y="652" width="2" height="6" fill="#000" fill-opacity="0.4"/>
<path fill="#b48c3c" d="M2364 652h184v6h-184z"/>
<rect x="2364" y="652" width="2" height="6" fill="#000" fill-opacity="0.4"/>
<rect x="2400" y="652" width="2" height="6" fill="#000" fill-opacity="0.4"/>
<rect x="2438" y="652" width="2" height="6" fill="#000" fill-opacity="0.4"/>
<rect x="2474" y="652" width="2" height="6" fill="#000" fill-opacity="0.4"/>
<rect x="2510" y="652" width="2" height="6" fill="#000" fill-opacity="0.4"/>
<path fill="#6ae6fa" d="M1662 660h112v6h-112z"/>
<rect x="1662" y="660" width="2" height="6" fill="#000" fill-opacity="0.4"/>
<rect x="1698" y="660" width="2" height="6" fill="#000" fill-opacity="0.4"/>
<rect x="1736" y="660" width="2" height="6" fill="#000" fill-opacity="0.4"/>
<rect x="1772" y="660" width="2" height="6" fill="#000" fill-opacity="0.4"/>
<path fill="#5ccde0" d="M1774 660h294v6h-294z"/>
<rect x="1810" y="660" width="2" height="6" fill="#000" fill-opacity="0.4"/>
<rect x="1846" y="660" width="2" height="6" fill="#000" fill-opacity="0.4"/>
<rect x="1884" y="660" width="2" height="6" fill="#000" fill-opacity="0.4"/>
<rect x="1920" y="660" width="2" height="6" fill="#000" fill-opacity="0.4"/>
<rect x="1958" y="660" width="2" height="6" fill="#000" fill-opacity="0.4"/>
<rect x="1994" y="660" width="2" height="6" fill="#000" fill-opacity="0.4"/>
<rect x="2030" y="660" width="2" height="6" fill="#000" fill-opacity="0.4"/>
<rect x="2068" y="660" width="2" height="6" fill="#000" fill-opacity="0.4"/>
<path fill="#6ae6fa" d="M2068 660h296v6h-296z"/>
<rect x="2068" y="660" width="2" height="6" fill="#000" fill-opacity="0.4"/>
<rect x="2104" y="660" width="2" height="6" fill="#000" fill-opacity="0.4"/>
<rect x="2142" y="660" width="2" height="6" fill="#000" fill-opacity="0.4"/>
<rect x="2178" y="660" width="2" height="6" fill="#000" fill-opacity="0.4"/>
<rect x="2216" y="660" width="2" height="6" fill="#000" fill-opacity="0.4"/>
<rect x="2252" y="660" width="2" height="6" fill="#000" fill-opacity="0.4"/>
<rect x="2290" y="660" width="2" height="6" fill="#000" fill-opacity="0.4"/>
<rect x="2326" y="660" width="2" height="6" fill="#000" fill-opacity="0.4"/>
<path fill="#5ccde0" d="M2364 660h184v6h-184z"/>
<rect x="2364" y="660" width="2" height="6" fill="#000" fill-opacity="0.4"/>
<rect x="2400" y="660" width="2" height="6" fill="#000" fill-opacity="0.4"/>
<rect x="2438" y="660" width="2" height="6" fill="#000" fill-opacity="0.4"/>
<rect x="2474" y="660" width="2" height="6" fill="#000" fill-opacity="0.4"/>
<rect x="2510" y="660" width="2" height="6" fill="#000" fill-opacity="0.4"/>
<path fill="#6ae6fa" d="M1662 668h112v6h-112z"/>
<rect x="1662" y="668" width="2" height="6" fill="#000" fill-opacity="0.4"/>
<rect x="1698" y="668" width="2" height="6" fill="#000" fill-opacity="0.4"/>
<rect x="1736" y="668" width="2" height="6" fill="#000" fill-opacity="0.4"/>
<rect x="1772" y="668" width="2" height="6" fill="#000" fill-opacity="0.4"/>
<path fill="#5ccde0" d="M1774 668h294v6h-294z"/>
<rect x="1810" y="668" width="2" height="6" fill="#000" fill-opacity="0.4"/>
<rect x="1846" y="668" width="2" height="6" fill="#000" fill-opacity="0.4"/>
<rect x="1884" y="668" width="2" height="6" fill="#000" fill-opacity="0.4"/>
<rect x="1920" y="668" width="2" height="6" fill="#000" fill-opacity="0.4"/>
<rect x="1958" y="668" width="2" height="6" fill="#000" fill-opacity="0.4"/>
<rect x="1994" y="668" width="2" height="6" fill="#000" fill-opacity="0.4"/>
<rect x="2030" y="668" width="2" height="6" fill="#000" fill-opacity="0.4"/>
<rect x="2068" y="668" width="2" height="6" fill="#000" fill-opacity="0.4"/>
<path fill="#6ae6fa" d="M2068 668h184v6h-184z"/>
<rect x="2068" y="668" width="2" height="6" fill="#000" fill-opacity="0.4"/>
<rect x="2104" y="668" width="2" height="6" fill="#000" fill-opacity="0.4"/>
<rect x="2142" y="668" width="2" height="6" fill="#000" fill-opacity="0.4"/>
<rect x="2178" y="668" width="2" height="6" fill="#000" fill-opacity="0.4"/>
<rect x="2216" y="668" width="2" height="6" fill="#000" fill-opacity="0.4"/>
<path fill="#8a98e0" d="M32 676h42v6h-42z"/>
<rect x="36" y="676" width="2" height="6" fill="#000" fill-opacity="0.4"/>
<path fill="#8a98e0" d="M106 676h42v6h-42z"/>
<rect x="110" y="676" width="2" height="6" fill="#000" fill-opacity="0.4"/>
<path fill="#8a98e0" d="M180 676h42v6h-42z"/>
<rect x="184" y="676" width="2" height="6" fill="#000" fill-opacity="0.4"/>
<path fill="#8a98e0" d="M254 676h42v6h-42z"/>
<rect x="258" y="676" width="2" height="6" fill="#000" fill-opacity="0.4"/>
<path fill="#9aa8f8" d="M328 676h42v6h-42z"/>
<rect x="332" y="676" width="2" height="6" fill="#000" fill-opacity="0.4"/>
<path fill="#9aa8f8" d="M402 676h42v6h-42z"/>
<rect x="406" y="676" width="2" height="6" fill="#000" fill-opacity="0.4"/>
<path fill="#9aa8f8" d="M476 676h42v6h-42z"/>
<rect x="480" y="676" width="2" height="6" fill="#000" fill-opacity="0.4"/>
<rect x="516" y="676" width="2" height="6" fill="#000" fill-opacity="0.4"/>
<path fill="#9aa8f8" d="M548 676h42v6h-42z"/>
<rect x="554" y="676" width="2" height="6" fill="#000" fill-opacity="0.4"/>
<path fill="#8a98e0" d="M622 676h42v6h-42z"/>
<rect x="628" y="676" width="2" height="6" fill="#000" fill-opacity="0.4"/>
<path fill="#8a98e0" d="M696 676h42v6h-42z"/>
<rect x="702" y="676" width="2" height="6" fill="#000" fill-opacity="0.4"/>
<path fill="#8a98e0" d="M770 676h42v6h-42z"/>
<rect x="776" y="676" width="2" height="6" fill="#000" fill-opacity="0.4"/>
<path fill="#8a98e0" d="M844 676h42v6h-42z"/>
<rect x="850" y="676" width="2" height="6" fill="#000" fill-opacity="0.4"/>
<path fill="#9aa8f8" d="M918 676h42v6h-42z"/>
<rect x="924" y="676" width="2" height="6" fill="#000" fill-opacity="0.4"/>
<path fill="#9aa8f8" d="M992 676h42v6h-42z"/>
<rect x="996" y="676" width="2" height="6" fill="#000" fill-opacity="0.4"/>
<path fill="#9aa8f8" d="M1066 676h42v6h-42z"/>
<rect x="1070" y="676" width="2" height="6" fill="#000" fill-opacity="0.4"/>
<path fill="#9aa8f8" d="M1140 676h42v6h-42z"/>
<rect x="1144" y="676" width="2" height="6" fill="#000" fill-opacity="0.4"/>
<path fill="#8a98e0" d="M1214 676h42v6h-42z"/>
<rect x="1218" y="676" width="2" height="6" fill="#000" fill-opacity="0.4"/>
<path fill="#8a98e0" d="M1288 676h42v6h-42z"/>
<rect x="1292" y="676" width="2" height="6" fill="#000" fill-opacity="0.4"/>
<path fill="#8a98e0" d="M1362 676h42v6h-42z"/>
<rect x="1366" y="676" width="2" height="6" fill="#000" fill-opacity="0.4"/>
<path fill="#8a98e0" d="M1436 676h42v6h-42z"/>
<rect x="1440" y="676" width="2" height="6" fill="#000" fill-opacity="0.4"/>
<path fill="#9aa8f8" d="M1510 676h42v6h-42z"/>
<rect x="1514" y="676" width="2" height="6" fill="#000" fill-opacity="0.4"/>
<rect x="1550" y="676" width="2" height="6" fill="#000" fill-opacity="0.4"/>
<path fill="#9aa8f8" d="M1582 676h42v6h-42z"/>
<rect x="1588" y="676" width="2" height="6" fill="#000" fill-opacity="0.4"/>
<path fill="#9aa8f8" d="M1694 676h42v6h-42z"/>
<rect x="1698" y="676" width="2" height="6" fill="#000" fill-opacity="0.4"/>
<path fill="#9aa8f8" d="M1768 676h6v6h-6z"/>
<rect x="1772" y="676" width="2" height="6" fill="#000" fill-opacity="0.4"/>
<path fill="#8a98e0" d="M1774 676h36v6h-36zM1842 676h42v6h-42z"/>
<rect x="1846" y="676" width="2" height="6" fill="#000" fill-opacity="0.4"/>
<path fill="#8a98e0" d="M1916 676h42v6h-42z"/>
<rect x="1920" y="676" width="2" height="6" fill="#000" fill-opacity="0.4"/>
<path fill="#8a98e0" d="M1990 676h42v6h-42z"/>
<rect x="1994" y="676" width="2" height="6" fill="#000" fill-opacity="0.4"/>
<rect x="2030" y="676" width="2" height="6" fill="#000" fill-opacity="0.4"/>
<path fill="#8a98e0" d="M2062 676h6v6h-6z"/>
<rect x="2068" y="676" width="2" height="6" fill="#000" fill-opacity="0.4"/>
<path fill="#9aa8f8" d="M2068 676h36v6h-36z"/>
<rect x="2068" y="676" width="2" height="6" fill="#000" fill-opacity="0.4"/>
<path fill="#9aa8f8" d="M2136 676h42v6h-42z"/>
<rect x="2142" y="676" width="2" height="6" fill="#000" fill-opacity="0.4"/>
<path fill="#9aa8f8" d="M2210 676h42v6h-42z"/>
<rect x="2216" y="676" width="2" height="6" fill="#000" fill-opacity="0.4"/>
<path fill="#9aa8f8" d="M2284 676h42v6h-42z"/>
<rect x="2290" y="676" width="2" height="6" fill="#000" fill-opacity="0.4"/>
<path fill="#9aa8f8" d="M2358 676h6v6h-6z"/>
<path fill="#8a98e0" d="M2364 676h36v6h-36z"/>
<rect x="2364" y="676" width="2" height="6" fill="#000" fill-opacity="0.4"/>
<path fill="#8a98e0" d="M2432 676h42v6h-42z"/>
<rect x="2438" y="676" width="2" height="6" fill="#000" fill-opacity="0.4"/>
<path fill="#8a98e0" d="M2506 676h42v6h-42z"/>
<rect x="2510" y="676" width="2" height="6" fill="#000" fill-opacity="0.4"/>
<path fill="#6a9e42" d="M296 696h148v172h-148z"/>
<path fill="#4c7a32" d="M296 696h148v2h-148zM296 728h148v2h-148zM296 696h2v172h-2zM332 730h2v138h-2zM370 730h2v138h-2zM406 730h2v138h-2z"/>
<path fill="#1c201a" d="M300 778h144v20h-144z"/>
<path fill="#4c7a32" d="M296 778h2v20h-2zM306 778h2v20h-2zM314 778h2v20h-2zM326 778h2v20h-2zM332 778h2v20h-2zM344 778h2v20h-2zM354 778h2v20h-2zM362 778h2v20h-2zM370 778h2v20h-2zM380 778h2v20h-2zM388 778h2v20h-2zM400 778h2v20h-2zM406 778h2v20h-2zM418 778h2v20h-2zM424 778h2v20h-2zM436 778h2v20h-2zM444 778h2v20h-2z"/>
<path fill="#a6f97a" d="M444 696h294v172h-294z"/>
<path fill="#527f3e" d="M444 696h294v2h-294zM444 728h294v2h-294zM444 696h2v172h-2z"/>
<path fill="#70a64f" d="M480 730h2v138h-2zM516 730h2v138h-2zM554 730h2v138h-2zM590 730h2v138h-2zM628 730h2v138h-2zM664 730h2v138h-2zM702 730h2v138h-2z"/>
<path fill="#1c201a" d="M448 778h290v20h-290z"/>
<path fill="#527f3e" d="M444 778h2v20h-2zM454 778h2v20h-2zM462 778h2v20h-2zM474 778h2v20h-2zM480 778h2v20h-2zM492 778h2v20h-2zM502 778h2v20h-2zM510 778h2v20h-2zM516 778h2v20h-2zM528 778h2v20h-2zM536 778h2v20h-2zM548 778h2v20h-2zM554 778h2v20h-2zM566 778h2v20h-2zM572 778h2v20h-2zM584 778h2v20h-2zM590 778h2v20h-2zM594 778h2v20h-2zM602 778h2v20h-2zM610 778h2v20h-2zM622 778h2v20h-2zM628 778h2v20h-2zM640 778h2v20h-2zM650 778h2v20h-2zM658 778h2v20h-2zM664 778h2v20h-2zM676 778h2v20h-2zM684 778h2v20h-2zM696 778h2v20h-2zM702 778h2v20h-2zM714 778h2v20h-2zM720 778h2v20h-2zM732 778h2v20h-2z"/>
<path fill="#669a3c" d="M582 696h8v172h-8z"/>
<path fill="#a6f97a" d="M886 696h28v172h-28z"/>
<path fill="#527f3e" d="M886 696h28v2h-28zM886 728h28v2h-28zM886 696h2v172h-2z"/>
<path fill="#1c201a" d="M890 778h6v20h-6z"/>
<path fill="#a6f97a" d="M996 696h20v172h-20z"/>
<path fill="#527f3e" d="M996 696h20v2h-20zM996 728h20v2h-20zM996 696h2v172h-2z"/>
<path fill="#1c201a" d="M1002 778h8v20h-8z"/>
<path fill="#a6f97a" d="M1034 696h296v172h-296z"/>
<path fill="#527f3e" d="M1034 696h296v2h-296zM1034 728h296v2h-296zM1034 696h2v172h-2z"/>
<path fill="#70a64f" d="M1070 730h2v138h-2zM1108 730h2v138h-2zM1144 730h2v138h-2zM1182 730h2v138h-2zM1218 730h2v138h-2zM1256 730h2v138h-2zM1292 730h2v138h-2z"/>
<path fill="#689e3f" d="M1172 696h10v172h-10z"/>
<path fill="#1c201a" d="M1038 778h8v20h-8z"/>
<path fill="#62a043" d="M1064 778h2v20h-2z"/>
<path fill="#1c201a" d="M1066 778h6v20h-6z"/>
<path fill="#62a043" d="M1072 778h2v20h-2z"/>
<path fill="#1c201a" d="M1074 778h8v20h-8z"/>
<path fill="#62a043" d="M1102 778h2v20h-2z"/>
<path fill="#1c201a" d="M1104 778h6v20h-6z"/>
<path fill="#62a043" d="M1110 778h2v20h-2z"/>
<path fill="#1c201a" d="M1112 778h8v20h-8z"/>
<path fill="#62a043" d="M1138 778h2v20h-2z"/>
<path fill="#1c201a" d="M1140 778h6v20h-6z"/>
<path fill="#62a043" d="M1146 778h2v20h-2z"/>
<path fill="#1c201a" d="M1148 778h8v20h-8z"/>
<path fill="#62a043" d="M1176 778h2v20h-2z"/>
<path fill="#1c201a" d="M1178 778h6v20h-6z"/>
<path fill="#62a043" d="M1184 778h2v20h-2z"/>
<path fill="#1c201a" d="M1186 778h8v20h-8z"/>
<path fill="#62a043" d="M1212 778h2v20h-2z"/>
<path fill="#1c201a" d="M1214 778h6v20h-6z"/>
<path fill="#62a043" d="M1220 778h2v20h-2z"/>
<path fill="#1c201a" d="M1222 778h8v20h-8z"/>
<path fill="#62a043" d="M1250 778h2v20h-2z"/>
<path fill="#1c201a" d="M1252 778h6v20h-6z"/>
<path fill="#62a043" d="M1258 778h2v20h-2z"/>
<path fill="#1c201a" d="M1260 778h8v20h-8z"/>
<path fill="#62a043" d="M1286 778h2v20h-2z"/>
<path fill="#1c201a" d="M1288 778h6v20h-6z"/>
<path fill="#62a043" d="M1294 778h2v20h-2z"/>
<path fill="#1c201a" d="M1296 778h8v20h-8z"/>
<path fill="#62a043" d="M1324 778h2v20h-2z"/>
<path fill="#1c201a" d="M1326 778h6v20h-6z"/>
<path fill="#527f3e" d="M1108 696h2v32h-2zM1256 696h2v32h-2z"/>
<path fill="#a6f97a" d="M1810 696h294v172h-294z"/>
<path fill="#527f3e" d="M1810 696h294v2h-294zM1810 728h294v2h-294zM1810 696h2v172h-2z"/>
<path fill="#70a64f" d="M1846 730h2v138h-2zM1884 730h2v138h-2zM1920 730h2v138h-2zM1958 730h2v138h-2zM1994 730h2v138h-2zM2030 730h2v138h-2zM2068 730h2v138h-2z"/>
<path fill="#1c201a" d="M1814 778h8v20h-8z"/>
<path fill="#62a043" d="M1840 778h2v20h-2z"/>
<path fill="#1c201a" d="M1842 778h6v20h-6z"/>
<path fill="#62a043" d="M1848 778h2v20h-2z"/>
<path fill="#1c201a" d="M1850 778h8v20h-8z"/>
<path fill="#62a043" d="M1878 778h2v20h-2z"/>
<path fill="#1c201a" d="M1880 778h6v20h-6z"/>
<path fill="#62a043" d="M1886 778h2v20h-2z"/>
<path fill="#1c201a" d="M1888 778h8v20h-8z"/>
<path fill="#62a043" d="M1914 778h2v20h-2z"/>
<path fill="#1c201a" d="M1916 778h6v20h-6z"/>
<path fill="#62a043" d="M1922 778h2v20h-2z"/>
<path fill="#1c201a" d="M1924 778h8v20h-8z"/>
<path fill="#62a043" d="M1952 778h2v20h-2z"/>
<path fill="#1c201a" d="M1954 778h6v20h-6z"/>
<path fill="#62a043" d="M1960 778h2v20h-2z"/>
<path fill="#1c201a" d="M1962 778h8v20h-8z"/>
<path fill="#62a043" d="M1988 778h2v20h-2z"/>
<path fill="#1c201a" d="M1990 778h6v20h-6z"/>
<path fill="#62a043" d="M1996 778h2v20h-2z"/>
<path fill="#1c201a" d="M1998 778h8v20h-8z"/>
<path fill="#62a043" d="M2024 778h2v20h-2z"/>
<path fill="#1c201a" d="M2026 778h6v20h-6z"/>
<path fill="#62a043" d="M2032 778h2v20h-2z"/>
<path fill="#1c201a" d="M2034 778h8v20h-8z"/>
<path fill="#62a043" d="M2062 778h2v20h-2z"/>
<path fill="#1c201a" d="M2064 778h6v20h-6z"/>
<path fill="#62a043" d="M2070 778h2v20h-2z"/>
<path fill="#1c201a" d="M2072 778h8v20h-8z"/>
<path fill="#62a043" d="M2098 778h2v20h-2z"/>
<path fill="#1c201a" d="M2100 778h6v20h-6z"/>
<path fill="#527f3e" d="M1884 696h2v32h-2zM1958 696h2v32h-2zM2030 696h2v32h-2z"/>
<path fill="#666666" d="M2104 696h148v34h-148z"/>
<path fill="#4a4a4a" d="M2106 778h2v20h-2z"/>
<path fill="#666666" d="M2108 778h8v20h-8z"/>
<path fill="#4a4a4a" d="M2136 778h2v20h-2z"/>
<path fill="#666666" d="M2138 778h6v20h-6z"/>
<path fill="#4a4a4a" d="M2144 778h2v20h-2z"/>
<path fill="#666666" d="M2146 778h8v20h-8z"/>
<path fill="#4a4a4a" d="M2172 778h2v20h-2z"/>
<path fill="#666666" d="M2174 778h6v20h-6z"/>
<path fill="#4a4a4a" d="M2180 778h2v20h-2z"/>
<path fill="#666666" d="M2182 778h8v20h-8z"/>
<path fill="#4a4a4a" d="M2210 778h2v20h-2z"/>
<path fill="#666666" d="M2212 778h6v20h-6z"/>
<path fill="#4a4a4a" d="M2218 778h2v20h-2z"/>
<path fill="#666666" d="M2220 778h8v20h-8z"/>
<path fill="#4a4a4a" d="M2246 778h2v20h-2z"/>
<path fill="#666666" d="M2248 778h6v20h-6z"/>
<path fill="#8ffce8" d="M1034 948h148v32h-148z"/>
<path fill="#79d6c5" d="M1053 947 L1182 947 L1182 980 L1145 980 Z"/>
<path fill="#5fb5a5" d="M1034 978h148v2h-148z"/>
<clipPath id="op1035"><rect x="1035" y="940" width="147" height="45"/></clipPath>
<text x="1041" y="970" font-size="19.5" fill="#17332e" textLength="148" lengthAdjust="spacingAndGlyphs" clip-path="url(#op1035)">Operator (Free</text>
<path fill="#8ffce8" d="M1662 948h148v32h-148z"/>
<path fill="#79d6c5" d="M1681 947 L1810 947 L1810 980 L1773 980 Z"/>
<path fill="#5fb5a5" d="M1662 978h148v2h-148z"/>
<clipPath id="op1663"><rect x="1663" y="940" width="147" height="45"/></clipPath>
<text x="1669" y="970" font-size="19.5" fill="#17332e" textLength="148" lengthAdjust="spacingAndGlyphs" clip-path="url(#op1663)">Operator (Free</text>
<path fill="#8ffce8" d="M296 984h148v172h-148z"/>
<path fill="#4a837b" d="M296 984h148v2h-148zM296 1016h148v2h-148zM296 984h2v172h-2z"/>
<path fill="#5fa397" d="M332 1018h2v138h-2zM370 1018h2v138h-2zM406 1018h2v138h-2z"/>
<path fill="#111" d="M300 1038h2v4h-2zM304 1038h4v4h-4zM314 1038h2v4h-2zM318 1038h2v4h-2zM322 1038h2v4h-2zM326 1038h4v4h-4zM332 1038h2v4h-2zM336 1038h2v4h-2zM340 1038h2v4h-2zM344 1038h2v4h-2zM350 1038h2v4h-2zM356 1038h4v4h-4zM362 1038h4v4h-4zM374 1038h2v4h-2zM378 1038h4v4h-4zM388 1038h2v4h-2zM392 1038h2v4h-2zM396 1038h2v4h-2zM400 1038h4v4h-4zM406 1038h2v4h-2zM410 1038h2v4h-2zM414 1038h2v4h-2zM418 1038h2v4h-2zM424 1038h2v4h-2zM430 1038h4v4h-4zM436 1038h4v4h-4zM442 1134h2v4h-2z"/>
<text x="304" y="1008" font-size="19" fill="#17332e" textLength="94" lengthAdjust="spacingAndGlyphs">Albino 3 2</text>
<path fill="#8ffce8" d="M444 984h146v172h-146z"/>
<path fill="#4a837b" d="M444 984h146v2h-146zM444 1016h146v2h-146zM444 984h2v172h-2z"/>
<path fill="#5fa397" d="M480 1018h2v138h-2zM516 1018h2v138h-2zM554 1018h2v138h-2z"/>
<path fill="#111" d="M448 1038h2v4h-2zM452 1038h4v4h-4zM462 1038h2v4h-2zM466 1038h2v4h-2zM470 1038h2v4h-2zM474 1038h4v4h-4zM480 1038h2v4h-2zM484 1038h2v4h-2zM488 1038h2v4h-2zM492 1038h2v4h-2zM498 1038h2v4h-2zM504 1038h4v4h-4zM510 1038h4v4h-4zM520 1038h2v4h-2zM524 1038h4v4h-4zM534 1038h2v4h-2zM538 1038h2v4h-2zM542 1038h2v4h-2zM546 1038h4v4h-4zM552 1038h2v4h-2zM556 1038h2v4h-2zM560 1038h2v4h-2zM564 1038h2v4h-2zM570 1038h2v4h-2zM576 1038h4v4h-4zM582 1038h4v4h-4z"/>
<text x="452" y="1008" font-size="19" fill="#17332e" textLength="94" lengthAdjust="spacingAndGlyphs">Albino 3 2</text>
<path fill="#8ffce8" d="M590 984h148v172h-148z"/>
<path fill="#4a837b" d="M590 984h148v2h-148zM590 1016h148v2h-148zM590 984h2v172h-2z"/>
<path fill="#5fa397" d="M628 1018h2v138h-2zM664 1018h2v138h-2zM702 1018h2v138h-2z"/>
<path fill="#111" d="M594 1038h2v4h-2zM598 1038h4v4h-4zM608 1038h2v4h-2zM612 1038h2v4h-2zM616 1038h2v4h-2zM620 1038h4v4h-4zM626 1038h2v4h-2zM630 1038h2v4h-2zM634 1038h2v4h-2zM638 1038h2v4h-2zM644 1038h2v4h-2zM650 1038h4v4h-4zM656 1038h4v4h-4zM668 1038h2v4h-2zM672 1038h4v4h-4zM682 1038h2v4h-2zM686 1038h2v4h-2zM690 1038h2v4h-2zM694 1038h4v4h-4zM700 1038h2v4h-2zM704 1038h2v4h-2zM708 1038h2v4h-2zM712 1038h2v4h-2zM718 1038h2v4h-2zM724 1038h4v4h-4zM730 1038h4v4h-4z"/>
<text x="598" y="1008" font-size="19" fill="#17332e" textLength="94" lengthAdjust="spacingAndGlyphs">Albino 3 2</text>
<path fill="#8ffce8" d="M738 984h148v172h-148z"/>
<path fill="#4a837b" d="M738 984h148v2h-148zM738 1016h148v2h-148zM738 984h2v172h-2z"/>
<path fill="#5fa397" d="M776 1018h2v138h-2zM812 1018h2v138h-2zM850 1018h2v138h-2z"/>
<path fill="#111" d="M742 1038h2v4h-2zM746 1038h4v4h-4zM756 1038h2v4h-2zM760 1038h2v4h-2zM764 1038h2v4h-2zM768 1038h4v4h-4zM774 1038h2v4h-2zM778 1038h2v4h-2zM782 1038h2v4h-2zM786 1038h2v4h-2zM792 1038h2v4h-2zM798 1038h4v4h-4zM804 1038h4v4h-4zM816 1038h2v4h-2zM820 1038h4v4h-4zM830 1038h2v4h-2zM834 1038h2v4h-2zM838 1038h2v4h-2zM842 1038h4v4h-4zM848 1038h2v4h-2zM852 1038h2v4h-2zM856 1038h2v4h-2zM860 1038h2v4h-2zM866 1038h2v4h-2zM872 1038h4v4h-4zM878 1038h4v4h-4z"/>
<text x="746" y="1008" font-size="19" fill="#17332e" textLength="94" lengthAdjust="spacingAndGlyphs">Albino 3 2</text>
<path fill="#8ffce8" d="M886 984h130v172h-130z"/>
<path fill="#4a837b" d="M886 984h130v2h-130zM886 1016h130v2h-130zM886 984h2v172h-2z"/>
<path fill="#5fa397" d="M924 1018h2v138h-2zM960 1018h2v138h-2zM996 1018h2v138h-2z"/>
<path fill="#111" d="M890 1038h2v4h-2zM894 1038h4v4h-4zM904 1038h2v4h-2zM908 1038h2v4h-2zM912 1038h2v4h-2zM916 1038h4v4h-4zM922 1038h2v4h-2zM926 1038h2v4h-2zM930 1038h2v4h-2zM934 1038h2v4h-2zM940 1038h2v4h-2zM946 1038h4v4h-4zM952 1038h4v4h-4zM964 1038h2v4h-2zM968 1038h4v4h-4zM978 1038h2v4h-2zM982 1038h2v4h-2zM986 1038h2v4h-2zM990 1038h4v4h-4zM996 1038h2v4h-2zM1000 1038h2v4h-2zM1004 1038h2v4h-2zM1008 1038h2v4h-2z"/>
<text x="894" y="1008" font-size="19" fill="#17332e" textLength="94" lengthAdjust="spacingAndGlyphs">Albino 3 2</text>
<path fill="#8ffce8" d="M1034 984h148v172h-148z"/>
<path fill="#4a837b" d="M1034 984h148v2h-148zM1034 1016h148v2h-148zM1034 984h2v172h-2z"/>
<path fill="#5fa397" d="M1070 1018h2v138h-2zM1108 1018h2v138h-2zM1144 1018h2v138h-2z"/>
<path fill="#111" d="M1038 1038h2v4h-2zM1042 1038h4v4h-4zM1052 1038h2v4h-2zM1056 1038h2v4h-2zM1060 1038h2v4h-2zM1064 1038h4v4h-4zM1070 1038h2v4h-2zM1074 1038h2v4h-2zM1078 1038h2v4h-2zM1082 1038h2v4h-2zM1088 1038h2v4h-2zM1094 1038h4v4h-4zM1100 1038h4v4h-4zM1112 1038h2v4h-2zM1116 1038h4v4h-4zM1126 1038h2v4h-2zM1130 1038h2v4h-2zM1134 1038h2v4h-2zM1138 1038h4v4h-4zM1144 1038h2v4h-2zM1148 1038h2v4h-2zM1152 1038h2v4h-2zM1156 1038h2v4h-2zM1162 1038h2v4h-2zM1168 1038h4v4h-4zM1174 1038h4v4h-4zM1180 1134h2v4h-2z"/>
<text x="1042" y="1008" font-size="19" fill="#17332e" textLength="94" lengthAdjust="spacingAndGlyphs">Albino 3 2</text>
<path fill="#8ffce8" d="M1182 984h148v172h-148z"/>
<path fill="#4a837b" d="M1182 984h148v2h-148zM1182 1016h148v2h-148zM1182 984h2v172h-2z"/>
<path fill="#5fa397" d="M1218 1018h2v138h-2zM1256 1018h2v138h-2zM1292 1018h2v138h-2z"/>
<path fill="#111" d="M1186 1038h2v4h-2zM1190 1038h4v4h-4zM1200 1038h2v4h-2zM1204 1038h2v4h-2zM1208 1038h2v4h-2zM1212 1038h4v4h-4zM1218 1038h2v4h-2zM1222 1038h2v4h-2zM1226 1038h2v4h-2zM1230 1038h2v4h-2zM1236 1038h2v4h-2zM1242 1038h4v4h-4zM1248 1038h4v4h-4zM1260 1038h2v4h-2zM1264 1038h4v4h-4zM1274 1038h2v4h-2zM1278 1038h2v4h-2zM1282 1038h2v4h-2zM1286 1038h4v4h-4zM1292 1038h2v4h-2zM1296 1038h2v4h-2zM1300 1038h2v4h-2zM1304 1038h2v4h-2zM1310 1038h2v4h-2zM1316 1038h4v4h-4zM1322 1038h4v4h-4zM1328 1134h2v4h-2z"/>
<text x="1190" y="1008" font-size="19" fill="#17332e" textLength="94" lengthAdjust="spacingAndGlyphs">Albino 3 2</text>
<path fill="#8ffce8" d="M1330 984h148v172h-148z"/>
<path fill="#4a837b" d="M1330 984h148v2h-148zM1330 1016h148v2h-148zM1330 984h2v172h-2z"/>
<path fill="#5fa397" d="M1366 1018h2v138h-2zM1404 1018h2v138h-2zM1440 1018h2v138h-2z"/>
<path fill="#111" d="M1334 1038h2v4h-2zM1338 1038h4v4h-4zM1348 1038h2v4h-2zM1352 1038h2v4h-2zM1356 1038h2v4h-2zM1360 1038h4v4h-4zM1366 1038h2v4h-2zM1370 1038h2v4h-2zM1374 1038h2v4h-2zM1378 1038h2v4h-2zM1384 1038h2v4h-2zM1390 1038h4v4h-4zM1396 1038h4v4h-4zM1408 1038h2v4h-2zM1412 1038h4v4h-4zM1422 1038h2v4h-2zM1426 1038h2v4h-2zM1430 1038h2v4h-2zM1434 1038h4v4h-4zM1440 1038h2v4h-2zM1444 1038h2v4h-2zM1448 1038h2v4h-2zM1452 1038h2v4h-2zM1458 1038h2v4h-2zM1464 1038h4v4h-4zM1470 1038h4v4h-4zM1474 1134h2v4h-2z"/>
<text x="1338" y="1008" font-size="19" fill="#17332e" textLength="94" lengthAdjust="spacingAndGlyphs">Albino 3 2</text>
<path fill="#8ffce8" d="M1478 984h146v172h-146z"/>
<path fill="#4a837b" d="M1478 984h146v2h-146zM1478 1016h146v2h-146zM1478 984h2v172h-2z"/>
<path fill="#5fa397" d="M1514 1018h2v138h-2zM1550 1018h2v138h-2zM1588 1018h2v138h-2z"/>
<path fill="#111" d="M1482 1038h2v4h-2zM1486 1038h4v4h-4zM1496 1038h2v4h-2zM1500 1038h2v4h-2zM1504 1038h2v4h-2zM1508 1038h4v4h-4zM1514 1038h2v4h-2zM1518 1038h2v4h-2zM1522 1038h2v4h-2zM1526 1038h2v4h-2zM1532 1038h2v4h-2zM1538 1038h4v4h-4zM1544 1038h4v4h-4zM1554 1038h2v4h-2zM1558 1038h4v4h-4zM1568 1038h2v4h-2zM1572 1038h2v4h-2zM1576 1038h2v4h-2zM1580 1038h4v4h-4zM1586 1038h2v4h-2zM1590 1038h2v4h-2zM1594 1038h2v4h-2zM1598 1038h2v4h-2zM1604 1038h2v4h-2zM1610 1038h4v4h-4zM1616 1038h4v4h-4z"/>
<text x="1485" y="1008" font-size="19" fill="#17332e" textLength="94" lengthAdjust="spacingAndGlyphs">Albino 3 2</text>
<path fill="#8ffce8" d="M1662 984h148v172h-148z"/>
<path fill="#4a837b" d="M1662 984h148v2h-148zM1662 1016h148v2h-148zM1662 984h2v172h-2z"/>
<path fill="#5fa397" d="M1698 1018h2v138h-2zM1736 1018h2v138h-2zM1772 1018h2v138h-2z"/>
<path fill="#111" d="M1668 1038h2v4h-2zM1672 1038h2v4h-2zM1678 1038h2v4h-2zM1684 1038h4v4h-4zM1690 1038h4v4h-4zM1702 1038h2v4h-2zM1706 1038h4v4h-4zM1716 1038h2v4h-2zM1720 1038h2v4h-2zM1724 1038h2v4h-2zM1728 1038h4v4h-4zM1734 1038h2v4h-2zM1738 1038h2v4h-2zM1742 1038h2v4h-2zM1746 1038h2v4h-2zM1752 1038h2v4h-2zM1758 1038h4v4h-4zM1764 1038h4v4h-4zM1776 1038h2v4h-2zM1780 1038h4v4h-4zM1790 1038h2v4h-2zM1794 1038h2v4h-2zM1798 1038h2v4h-2zM1802 1038h4v4h-4zM1808 1038h2v4h-2zM1808 1134h2v4h-2z"/>
<text x="1670" y="1008" font-size="19" fill="#17332e" textLength="94" lengthAdjust="spacingAndGlyphs">Albino 3 2</text>
<path fill="#8ffce8" d="M1810 984h148v172h-148z"/>
<path fill="#4a837b" d="M1810 984h148v2h-148zM1810 1016h148v2h-148zM1810 984h2v172h-2z"/>
<path fill="#5fa397" d="M1846 1018h2v138h-2zM1884 1018h2v138h-2zM1920 1018h2v138h-2z"/>
<path fill="#111" d="M1816 1038h2v4h-2zM1820 1038h2v4h-2zM1826 1038h2v4h-2zM1832 1038h4v4h-4zM1838 1038h4v4h-4zM1850 1038h2v4h-2zM1854 1038h4v4h-4zM1864 1038h2v4h-2zM1868 1038h2v4h-2zM1872 1038h2v4h-2zM1876 1038h4v4h-4zM1882 1038h2v4h-2zM1886 1038h2v4h-2zM1890 1038h2v4h-2zM1894 1038h2v4h-2zM1900 1038h2v4h-2zM1906 1038h4v4h-4zM1912 1038h4v4h-4zM1924 1038h2v4h-2zM1928 1038h4v4h-4zM1938 1038h2v4h-2zM1942 1038h2v4h-2zM1946 1038h2v4h-2zM1950 1038h4v4h-4zM1956 1038h2v4h-2zM1956 1134h2v4h-2z"/>
<text x="1818" y="1008" font-size="19" fill="#17332e" textLength="94" lengthAdjust="spacingAndGlyphs">Albino 3 2</text>
<path fill="#8ffce8" d="M1958 984h146v172h-146z"/>
<path fill="#4a837b" d="M1958 984h146v2h-146zM1958 1016h146v2h-146zM1958 984h2v172h-2z"/>
<path fill="#5fa397" d="M1994 1018h2v138h-2zM2030 1018h2v138h-2zM2068 1018h2v138h-2z"/>
<path fill="#111" d="M1964 1038h2v4h-2zM1968 1038h2v4h-2zM1974 1038h2v4h-2zM1980 1038h4v4h-4zM1986 1038h4v4h-4zM1998 1038h2v4h-2zM2002 1038h4v4h-4zM2012 1038h2v4h-2zM2016 1038h2v4h-2zM2020 1038h2v4h-2zM2024 1038h4v4h-4zM2030 1038h2v4h-2zM2034 1038h2v4h-2zM2038 1038h2v4h-2zM2042 1038h2v4h-2zM2048 1038h2v4h-2zM2054 1038h4v4h-4zM2060 1038h4v4h-4zM2072 1038h2v4h-2zM2076 1038h4v4h-4zM2086 1038h2v4h-2zM2090 1038h2v4h-2zM2094 1038h2v4h-2zM2098 1038h4v4h-4z"/>
<text x="1966" y="1008" font-size="19" fill="#17332e" textLength="94" lengthAdjust="spacingAndGlyphs">Albino 3 2</text>
<path fill="#8ffce8" d="M2104 984h148v172h-148z"/>
<path fill="#4a837b" d="M2104 984h148v2h-148zM2104 1016h148v2h-148zM2104 984h2v172h-2z"/>
<path fill="#5fa397" d="M2142 1018h2v138h-2zM2178 1018h2v138h-2zM2216 1018h2v138h-2z"/>
<path fill="#111" d="M2108 1038h2v4h-2zM2112 1038h2v4h-2zM2116 1038h2v4h-2zM2122 1038h2v4h-2zM2128 1038h4v4h-4zM2134 1038h4v4h-4zM2146 1038h2v4h-2zM2150 1038h4v4h-4zM2160 1038h2v4h-2zM2164 1038h2v4h-2zM2168 1038h2v4h-2zM2172 1038h4v4h-4zM2178 1038h2v4h-2zM2182 1038h2v4h-2zM2186 1038h2v4h-2zM2190 1038h2v4h-2zM2196 1038h2v4h-2zM2202 1038h4v4h-4zM2208 1038h4v4h-4zM2220 1038h2v4h-2zM2224 1038h4v4h-4zM2234 1038h2v4h-2zM2238 1038h2v4h-2zM2242 1038h2v4h-2zM2246 1038h4v4h-4z"/>
<text x="2112" y="1008" font-size="19" fill="#17332e" textLength="94" lengthAdjust="spacingAndGlyphs">Albino 3 2</text>
<path fill="#8ffce8" d="M2252 984h148v172h-148z"/>
<path fill="#4a837b" d="M2252 984h148v2h-148zM2252 1016h148v2h-148zM2252 984h2v172h-2z"/>
<path fill="#5fa397" d="M2290 1018h2v138h-2zM2326 1018h2v138h-2zM2364 1018h2v138h-2z"/>
<path fill="#111" d="M2256 1038h2v4h-2zM2260 1038h2v4h-2zM2264 1038h2v4h-2zM2270 1038h2v4h-2zM2276 1038h4v4h-4zM2282 1038h4v4h-4zM2294 1038h2v4h-2zM2298 1038h4v4h-4zM2308 1038h2v4h-2zM2312 1038h2v4h-2zM2316 1038h2v4h-2zM2320 1038h4v4h-4zM2326 1038h2v4h-2zM2330 1038h2v4h-2zM2334 1038h2v4h-2zM2338 1038h2v4h-2zM2344 1038h2v4h-2zM2350 1038h4v4h-4zM2356 1038h4v4h-4zM2368 1038h2v4h-2zM2372 1038h4v4h-4zM2382 1038h2v4h-2zM2386 1038h2v4h-2zM2390 1038h2v4h-2zM2394 1038h4v4h-4zM2398 1134h2v4h-2z"/>
<text x="2260" y="1008" font-size="19" fill="#17332e" textLength="94" lengthAdjust="spacingAndGlyphs">Albino 3 2</text>
<path fill="#8ffce8" d="M2400 984h148v172h-148z"/>
<path fill="#4a837b" d="M2400 984h148v2h-148zM2400 1016h148v2h-148zM2400 984h2v172h-2z"/>
<path fill="#5fa397" d="M2438 1018h2v138h-2zM2474 1018h2v138h-2zM2510 1018h2v138h-2z"/>
<path fill="#111" d="M2404 1038h2v4h-2zM2408 1038h2v4h-2zM2412 1038h2v4h-2zM2418 1038h2v4h-2zM2424 1038h4v4h-4zM2430 1038h4v4h-4zM2442 1038h2v4h-2zM2446 1038h4v4h-4zM2456 1038h2v4h-2zM2460 1038h2v4h-2zM2464 1038h2v4h-2zM2468 1038h4v4h-4zM2474 1038h2v4h-2zM2478 1038h2v4h-2zM2482 1038h2v4h-2zM2486 1038h2v4h-2zM2492 1038h2v4h-2zM2498 1038h4v4h-4zM2504 1038h4v4h-4zM2514 1038h2v4h-2zM2518 1038h4v4h-4zM2528 1038h2v4h-2zM2532 1038h2v4h-2zM2536 1038h2v4h-2zM2540 1038h4v4h-4zM2544 1134h2v4h-2z"/>
<text x="2408" y="1008" font-size="19" fill="#17332e" textLength="94" lengthAdjust="spacingAndGlyphs">Albino 3 2</text>
<path fill="#666666" d="M1624 984h38v34h-38z"/>
<path fill="#777777" d="M1628 1038h2v4h-2zM1632 1038h4v4h-4zM1642 1038h2v4h-2zM1646 1038h2v4h-2zM1650 1038h2v4h-2zM1654 1038h4v4h-4z"/>
<text x="1630" y="1008" font-size="19" fill="#3a3a3a" textLength="30" lengthAdjust="spacingAndGlyphs">Alb</text>
<path fill="#617fdf" d="M1182 1160h1070v172h-1070z"/>
<path fill="#3d4f97" d="M1182 1160h1070v2h-1070zM1182 1192h1070v2h-1070zM1182 1160h2v172h-2zM1218 1194h2v138h-2zM1256 1194h2v138h-2zM1292 1194h2v138h-2zM1330 1194h2v138h-2zM1366 1194h2v138h-2zM1404 1194h2v138h-2zM1440 1194h2v138h-2zM1478 1194h2v138h-2zM1514 1194h2v138h-2zM1550 1194h2v138h-2zM1588 1194h2v138h-2zM1624 1194h2v138h-2zM1662 1194h2v138h-2zM1698 1194h2v138h-2zM1736 1194h2v138h-2zM1772 1194h2v138h-2zM1810 1194h2v138h-2zM1846 1194h2v138h-2zM1884 1194h2v138h-2zM1920 1194h2v138h-2zM1958 1194h2v138h-2zM1994 1194h2v138h-2zM2030 1194h2v138h-2zM2068 1194h2v138h-2zM2104 1194h2v138h-2zM2142 1194h2v138h-2zM2178 1194h2v138h-2zM2216 1194h2v138h-2zM1478 1160h2v172h-2zM1624 1160h2v172h-2zM1810 1160h2v172h-2zM1958 1160h2v172h-2zM2104 1160h2v172h-2z"/>
<path fill="#0f1630" d="M1186 1204h2v6h-2zM1192 1220h2v6h-2zM1186 1300h2v6h-2zM1218 1204h2v6h-2zM1226 1220h2v6h-2zM1222 1300h2v6h-2zM1256 1204h2v6h-2zM1260 1204h2v6h-2zM1268 1220h2v6h-2zM1262 1300h2v6h-2zM1292 1204h2v6h-2zM1302 1220h2v6h-2zM1294 1300h2v6h-2zM1300 1316h2v6h-2zM1334 1204h2v6h-2zM1340 1220h2v6h-2zM1334 1300h2v6h-2zM1366 1204h2v6h-2zM1374 1220h2v6h-2zM1370 1300h2v6h-2zM1404 1204h2v6h-2zM1408 1204h2v6h-2zM1416 1220h2v6h-2zM1410 1300h2v6h-2zM1440 1204h2v6h-2zM1450 1220h2v6h-2zM1442 1300h2v6h-2zM1448 1316h2v6h-2zM1482 1204h2v6h-2zM1488 1220h2v6h-2zM1482 1300h2v6h-2zM1514 1204h2v6h-2zM1522 1220h2v6h-2zM1518 1300h2v6h-2zM1550 1204h2v6h-2zM1554 1204h2v6h-2zM1562 1220h2v6h-2zM1556 1300h2v6h-2zM1588 1204h2v6h-2zM1598 1220h2v6h-2zM1590 1300h2v6h-2zM1596 1316h2v6h-2zM1628 1204h2v6h-2zM1634 1220h2v6h-2zM1628 1300h2v6h-2zM1662 1204h2v6h-2zM1670 1220h2v6h-2zM1666 1300h2v6h-2zM1698 1204h2v6h-2zM1702 1204h2v6h-2zM1710 1220h2v6h-2zM1704 1300h2v6h-2zM1736 1204h2v6h-2zM1746 1220h2v6h-2zM1738 1300h2v6h-2zM1744 1316h2v6h-2zM1776 1204h2v6h-2zM1782 1220h2v6h-2zM1776 1300h2v6h-2zM1810 1204h2v6h-2zM1818 1220h2v6h-2zM1814 1300h2v6h-2zM1846 1204h2v6h-2zM1850 1204h2v6h-2zM1858 1220h2v6h-2zM1852 1300h2v6h-2zM1884 1204h2v6h-2zM1894 1220h2v6h-2zM1886 1300h2v6h-2zM1892 1316h2v6h-2zM1924 1204h2v6h-2zM1930 1220h2v6h-2zM1924 1300h2v6h-2zM1958 1204h2v6h-2zM1966 1220h2v6h-2zM1962 1300h2v6h-2zM1994 1204h2v6h-2zM1998 1204h2v6h-2zM2006 1220h2v6h-2zM2000 1300h2v6h-2zM2030 1204h2v6h-2zM2040 1220h2v6h-2zM2032 1300h2v6h-2zM2038 1316h2v6h-2zM2072 1204h2v6h-2zM2078 1220h2v6h-2zM2072 1300h2v6h-2zM2104 1204h2v6h-2zM2112 1220h2v6h-2zM2108 1300h2v6h-2zM2142 1204h2v6h-2zM2146 1204h2v6h-2zM2154 1220h2v6h-2zM2148 1300h2v6h-2zM2178 1204h2v6h-2zM2188 1220h2v6h-2zM2180 1300h2v6h-2zM2186 1316h2v6h-2zM2220 1204h2v6h-2zM2226 1220h2v6h-2zM2220 1300h2v6h-2z"/>
<path fill="#8ffce8" d="M1606 1336h352v172h-352z"/>
<path fill="#4a837b" d="M1606 1336h352v2h-352zM1606 1368h352v2h-352zM1606 1336h2v172h-2z"/>
<path fill="#5fa397" d="M1624 1370h2v138h-2zM1662 1370h2v138h-2zM1698 1370h2v138h-2zM1736 1370h2v138h-2zM1772 1370h2v138h-2zM1810 1370h2v138h-2zM1846 1370h2v138h-2zM1884 1370h2v138h-2zM1920 1370h2v138h-2z"/>
<path fill="#4a837b" d="M1624 1336h2v172h-2z"/>
<text x="1612" y="1360" font-size="19" fill="#17332e">B</text>
<text x="1631" y="1360" font-size="19" fill="#17332e" textLength="93" lengthAdjust="spacingAndGlyphs">Bassline 8</text>
<path fill="#111" d="M1618 1380h2v4h-2zM1618 1392h2v4h-2zM1618 1400h2v4h-2zM1618 1420h2v4h-2zM1622 1380h2v4h-2zM1622 1392h2v4h-2zM1622 1400h2v4h-2zM1622 1420h2v4h-2zM1624 1380h6v4h-6zM1624 1392h6v4h-6zM1624 1400h6v4h-6zM1624 1420h6v4h-6zM1636 1380h2v4h-2zM1636 1392h2v4h-2zM1636 1400h2v4h-2zM1636 1420h2v4h-2zM1654 1380h2v4h-2zM1654 1392h2v4h-2zM1654 1400h2v4h-2zM1654 1420h2v4h-2zM1660 1380h2v4h-2zM1660 1392h2v4h-2zM1660 1400h2v4h-2zM1660 1420h2v4h-2zM1662 1380h4v4h-4zM1662 1392h4v4h-4zM1662 1400h4v4h-4zM1662 1420h4v4h-4zM1674 1380h2v4h-2zM1674 1392h2v4h-2zM1674 1400h2v4h-2zM1674 1420h2v4h-2zM1692 1380h2v4h-2zM1692 1392h2v4h-2zM1692 1400h2v4h-2zM1692 1420h2v4h-2zM1696 1380h2v4h-2zM1696 1392h2v4h-2zM1696 1400h2v4h-2zM1696 1420h2v4h-2zM1698 1380h6v4h-6zM1698 1392h6v4h-6zM1698 1400h6v4h-6zM1698 1420h6v4h-6zM1710 1380h2v4h-2zM1710 1392h2v4h-2zM1710 1400h2v4h-2zM1710 1420h2v4h-2zM1728 1380h2v4h-2zM1728 1392h2v4h-2zM1728 1400h2v4h-2zM1728 1420h2v4h-2zM1732 1380h2v4h-2zM1732 1392h2v4h-2zM1732 1400h2v4h-2zM1732 1420h2v4h-2zM1736 1380h4v4h-4zM1736 1392h4v4h-4zM1736 1400h4v4h-4zM1736 1420h4v4h-4zM1748 1380h2v4h-2zM1748 1392h2v4h-2zM1748 1400h2v4h-2zM1748 1420h2v4h-2zM1766 1380h2v4h-2zM1766 1392h2v4h-2zM1766 1400h2v4h-2zM1766 1420h2v4h-2zM1770 1380h2v4h-2zM1770 1392h2v4h-2zM1770 1400h2v4h-2zM1770 1420h2v4h-2zM1772 1380h6v4h-6zM1772 1392h6v4h-6zM1772 1400h6v4h-6zM1772 1420h6v4h-6zM1784 1380h2v4h-2zM1784 1392h2v4h-2zM1784 1400h2v4h-2zM1784 1420h2v4h-2zM1802 1380h2v4h-2zM1802 1392h2v4h-2zM1802 1400h2v4h-2zM1802 1420h2v4h-2zM1806 1380h2v4h-2zM1806 1392h2v4h-2zM1806 1400h2v4h-2zM1806 1420h2v4h-2zM1810 1380h4v4h-4zM1810 1392h4v4h-4zM1810 1400h4v4h-4zM1810 1420h4v4h-4zM1822 1380h2v4h-2zM1822 1392h2v4h-2zM1822 1400h2v4h-2zM1822 1420h2v4h-2zM1840 1380h2v4h-2zM1840 1392h2v4h-2zM1840 1400h2v4h-2zM1840 1420h2v4h-2zM1844 1380h2v4h-2zM1844 1392h2v4h-2zM1844 1400h2v4h-2zM1844 1420h2v4h-2zM1846 1380h6v4h-6zM1846 1392h6v4h-6zM1846 1400h6v4h-6zM1846 1420h6v4h-6zM1858 1380h2v4h-2zM1858 1392h2v4h-2zM1858 1400h2v4h-2zM1858 1420h2v4h-2zM1876 1380h2v4h-2zM1876 1392h2v4h-2zM1876 1400h2v4h-2zM1876 1420h2v4h-2zM1880 1380h2v4h-2zM1880 1392h2v4h-2zM1880 1400h2v4h-2zM1880 1420h2v4h-2zM1884 1380h4v4h-4zM1884 1392h4v4h-4zM1884 1400h4v4h-4zM1884 1420h4v4h-4zM1896 1380h2v4h-2zM1896 1392h2v4h-2zM1896 1400h2v4h-2zM1896 1420h2v4h-2zM1914 1380h2v4h-2zM1914 1392h2v4h-2zM1914 1400h2v4h-2zM1914 1420h2v4h-2zM1916 1380h2v4h-2zM1916 1392h2v4h-2zM1916 1400h2v4h-2zM1916 1420h2v4h-2zM1920 1380h6v4h-6zM1920 1392h6v4h-6zM1920 1400h6v4h-6zM1920 1420h6v4h-6zM1932 1380h2v4h-2zM1932 1392h2v4h-2zM1932 1400h2v4h-2zM1932 1420h2v4h-2zM1950 1380h2v4h-2zM1950 1392h2v4h-2zM1950 1400h2v4h-2zM1950 1420h2v4h-2zM1954 1380h2v4h-2zM1954 1392h2v4h-2zM1954 1400h2v4h-2zM1954 1420h2v4h-2zM1654 1496h2v4h-2zM1728 1496h2v4h-2zM1802 1496h2v4h-2zM1876 1496h2v4h-2zM1950 1496h2v4h-2z"/>
<path fill="#aaaaaa" d="M296 1532h148v4h-148zM434 1538h10v6h-10zM730 1538h8v6h-8zM886 1532h130v4h-130zM1016 1524h18v6h-18zM1024 1538h10v6h-10zM1320 1538h10v6h-10zM1330 1532h148v4h-148zM1550 1516h68v6h-68zM1644 1524h18v6h-18zM1624 1532h38v4h-38zM1652 1538h10v6h-10zM1804 1538h6v6h-6zM1948 1538h10v6h-10z"/>
<path fill="#333333" d="M2 1550h2576v2h-2576z"/>
<path fill="#2a2a2a" d="M36 1550h2v2h-2zM74 1550h2v2h-2zM110 1550h2v2h-2zM148 1550h2v2h-2zM184 1550h2v2h-2zM222 1550h2v2h-2zM258 1550h2v2h-2zM296 1550h2v2h-2zM332 1550h2v2h-2zM370 1550h2v2h-2zM406 1550h2v2h-2zM444 1550h2v2h-2zM480 1550h2v2h-2zM516 1550h2v2h-2zM554 1550h2v2h-2zM590 1550h2v2h-2zM628 1550h2v2h-2zM664 1550h2v2h-2zM702 1550h2v2h-2zM738 1550h2v2h-2zM776 1550h2v2h-2zM812 1550h2v2h-2zM850 1550h2v2h-2zM886 1550h2v2h-2zM924 1550h2v2h-2zM960 1550h2v2h-2zM996 1550h2v2h-2zM1034 1550h2v2h-2zM1070 1550h2v2h-2zM1108 1550h2v2h-2zM1144 1550h2v2h-2zM1182 1550h2v2h-2zM1218 1550h2v2h-2zM1256 1550h2v2h-2zM1292 1550h2v2h-2zM1330 1550h2v2h-2zM1366 1550h2v2h-2zM1404 1550h2v2h-2zM1440 1550h2v2h-2zM1478 1550h2v2h-2zM1514 1550h2v2h-2zM1550 1550h2v2h-2zM1588 1550h2v2h-2zM1624 1550h2v2h-2zM1662 1550h2v2h-2zM1698 1550h2v2h-2zM1736 1550h2v2h-2zM1772 1550h2v2h-2zM1810 1550h2v2h-2zM1846 1550h2v2h-2zM1884 1550h2v2h-2zM1920 1550h2v2h-2zM1958 1550h2v2h-2zM1994 1550h2v2h-2zM2030 1550h2v2h-2zM2068 1550h2v2h-2zM2104 1550h2v2h-2zM2142 1550h2v2h-2zM2178 1550h2v2h-2zM2216 1550h2v2h-2zM2252 1550h2v2h-2zM2290 1550h2v2h-2zM2326 1550h2v2h-2zM2364 1550h2v2h-2zM2400 1550h2v2h-2zM2438 1550h2v2h-2zM2474 1550h2v2h-2zM2510 1550h2v2h-2z"/>
<path fill="#212121" d="M2578 1550h4v2h-4z"/>
<path fill="#333333" d="M0 34h2582v42h-2582zM2 98h2548v24h-2548z"/>
<path fill="#2a2a2a" d="M36 98h2v24h-2zM74 98h2v24h-2zM110 98h2v24h-2zM148 98h2v24h-2zM184 98h2v24h-2zM222 98h2v24h-2zM258 98h2v24h-2zM296 98h2v24h-2zM332 98h2v24h-2zM370 98h2v24h-2zM406 98h2v24h-2zM444 98h2v24h-2zM480 98h2v24h-2zM516 98h2v24h-2zM554 98h2v24h-2zM590 98h2v24h-2zM628 98h2v24h-2zM664 98h2v24h-2zM702 98h2v24h-2zM738 98h2v24h-2zM776 98h2v24h-2zM812 98h2v24h-2zM850 98h2v24h-2zM886 98h2v24h-2zM924 98h2v24h-2zM960 98h2v24h-2zM996 98h2v24h-2zM1034 98h2v24h-2zM1070 98h2v24h-2zM1108 98h2v24h-2zM1144 98h2v24h-2zM1182 98h2v24h-2zM1218 98h2v24h-2zM1256 98h2v24h-2zM1292 98h2v24h-2zM1330 98h2v24h-2zM1366 98h2v24h-2zM1404 98h2v24h-2zM1440 98h2v24h-2zM1478 98h2v24h-2zM1514 98h2v24h-2zM1550 98h2v24h-2zM1588 98h2v24h-2zM1624 98h2v24h-2zM1662 98h2v24h-2zM1698 98h2v24h-2zM1736 98h2v24h-2zM1772 98h2v24h-2zM1810 98h2v24h-2zM1846 98h2v24h-2zM1884 98h2v24h-2zM1920 98h2v24h-2zM1958 98h2v24h-2zM1994 98h2v24h-2zM2030 98h2v24h-2zM2068 98h2v24h-2zM2104 98h2v24h-2zM2142 98h2v24h-2zM2178 98h2v24h-2zM2216 98h2v24h-2zM2252 98h2v24h-2zM2290 98h2v24h-2zM2326 98h2v24h-2zM2364 98h2v24h-2zM2400 98h2v24h-2zM2438 98h2v24h-2zM2474 98h2v24h-2zM2510 98h2v24h-2z"/>
<path fill="#363636" d="M2550 76h30v46h-30z"/>
<path fill="#8a8a8a" d="M0 64h2v12h-2zM0 64h4v2h-4z"/>
<text x="11" y="72.5" font-size="20" fill="#a9a9a9" textLength="11.3" lengthAdjust="spacingAndGlyphs">1</text>
<path fill="#8a8a8a" d="M148 64h2v12h-2zM148 64h4v2h-4z"/>
<text x="159" y="72.5" font-size="20" fill="#a9a9a9" textLength="11.3" lengthAdjust="spacingAndGlyphs">9</text>
<path fill="#8a8a8a" d="M296 64h2v12h-2zM296 64h4v2h-4z"/>
<text x="307" y="72.5" font-size="20" fill="#a9a9a9" textLength="22.6" lengthAdjust="spacingAndGlyphs">17</text>
<path fill="#8a8a8a" d="M444 64h2v12h-2zM444 64h4v2h-4z"/>
<text x="455" y="72.5" font-size="20" fill="#a9a9a9" textLength="22.6" lengthAdjust="spacingAndGlyphs">25</text>
<path fill="#8a8a8a" d="M590 64h2v12h-2zM590 64h4v2h-4z"/>
<text x="601" y="72.5" font-size="20" fill="#a9a9a9" textLength="22.6" lengthAdjust="spacingAndGlyphs">33</text>
<path fill="#8a8a8a" d="M738 64h2v12h-2zM738 64h4v2h-4z"/>
<text x="749" y="72.5" font-size="20" fill="#a9a9a9" textLength="22.6" lengthAdjust="spacingAndGlyphs">41</text>
<path fill="#8a8a8a" d="M886 64h2v12h-2zM886 64h4v2h-4z"/>
<text x="897" y="72.5" font-size="20" fill="#a9a9a9" textLength="22.6" lengthAdjust="spacingAndGlyphs">49</text>
<path fill="#8a8a8a" d="M1034 64h2v12h-2zM1034 64h4v2h-4z"/>
<text x="1045" y="72.5" font-size="20" fill="#a9a9a9" textLength="22.6" lengthAdjust="spacingAndGlyphs">57</text>
<path fill="#8a8a8a" d="M1182 64h2v12h-2zM1182 64h4v2h-4z"/>
<text x="1193" y="72.5" font-size="20" fill="#a9a9a9" textLength="22.6" lengthAdjust="spacingAndGlyphs">65</text>
<path fill="#8a8a8a" d="M1330 64h2v12h-2zM1330 64h4v2h-4z"/>
<text x="1341" y="72.5" font-size="20" fill="#a9a9a9" textLength="22.6" lengthAdjust="spacingAndGlyphs">73</text>
<path fill="#8a8a8a" d="M1478 64h2v12h-2zM1478 64h4v2h-4z"/>
<text x="1489" y="72.5" font-size="20" fill="#a9a9a9" textLength="22.6" lengthAdjust="spacingAndGlyphs">81</text>
<path fill="#8a8a8a" d="M1624 64h2v12h-2zM1624 64h4v2h-4z"/>
<text x="1635" y="72.5" font-size="20" fill="#a9a9a9" textLength="22.6" lengthAdjust="spacingAndGlyphs">89</text>
<path fill="#8a8a8a" d="M1772 64h2v12h-2zM1772 64h4v2h-4z"/>
<text x="1783" y="72.5" font-size="20" fill="#a9a9a9" textLength="22.6" lengthAdjust="spacingAndGlyphs">97</text>
<path fill="#8a8a8a" d="M1920 64h2v12h-2zM1920 64h4v2h-4z"/>
<text x="1931" y="72.5" font-size="20" fill="#a9a9a9" textLength="33.9" lengthAdjust="spacingAndGlyphs">105</text>
<path fill="#8a8a8a" d="M2068 64h2v12h-2zM2068 64h4v2h-4z"/>
<text x="2079" y="72.5" font-size="20" fill="#a9a9a9" textLength="33.9" lengthAdjust="spacingAndGlyphs">113</text>
<path fill="#8a8a8a" d="M2216 64h2v12h-2zM2216 64h4v2h-4z"/>
<text x="2227" y="72.5" font-size="20" fill="#a9a9a9" textLength="33.9" lengthAdjust="spacingAndGlyphs">121</text>
<path fill="#8a8a8a" d="M2364 64h2v12h-2zM2364 64h4v2h-4z"/>
<text x="2375" y="72.5" font-size="20" fill="#a9a9a9" textLength="33.9" lengthAdjust="spacingAndGlyphs">129</text>
<path fill="#8a8a8a" d="M2510 64h2v12h-2zM2510 64h4v2h-4z"/>
<text x="2521" y="72.5" font-size="20" fill="#a9a9a9" textLength="33.9" lengthAdjust="spacingAndGlyphs">137</text>
<path fill="#8a8a8a" d="M74 74h2v2h-2zM222 74h2v2h-2zM370 74h2v2h-2zM516 74h2v2h-2zM664 74h2v2h-2zM812 74h2v2h-2zM960 74h2v2h-2zM1108 74h2v2h-2zM1256 74h2v2h-2zM1404 74h2v2h-2zM1550 74h2v2h-2zM1698 74h2v2h-2zM1846 74h2v2h-2zM1994 74h2v2h-2zM2142 74h2v2h-2zM2290 74h2v2h-2zM2438 74h2v2h-2z"/>
<path fill="#9b9b9b" d="M2 76h2548v22h-2548z"/>
<path fill="#606060" d="M2 78h2546v18h-2546z"/>
<path class="gp" fill="#5a5a5a" stroke="#9b9b9b" stroke-width="1.5" d="M2 78.5 L19 87 L2 95.5"/>
<path class="gp" fill="#5a5a5a" stroke="#9b9b9b" stroke-width="1.5" d="M2548 78.5 L2531 87 L2548 95.5"/>
<path fill="#363636" d="M22 98h56v24h-56zM318 98h70v24h-70zM760 98h64v24h-64zM1056 98h70v24h-70zM1352 98h64v24h-64zM1684 98h70v24h-70zM2274 98h64v24h-64z"/>
<path class="gp" fill="#5c5c5c" stroke="#9a9a9a" stroke-width="1.6" d="M1 99.5 L18 110.5 L1 121.5 Z"/>
<text x="25" y="118" font-size="19.5" fill="#d4d4d4" textLength="46" lengthAdjust="spacingAndGlyphs">Intro</text>
<path class="gp" fill="#5c5c5c" stroke="#9a9a9a" stroke-width="1.6" d="M297 99.5 L314 110.5 L297 121.5 Z"/>
<text x="320" y="118" font-size="19.5" fill="#d4d4d4" textLength="62" lengthAdjust="spacingAndGlyphs">Drums</text>
<path class="gp" fill="#5c5c5c" stroke="#9a9a9a" stroke-width="1.6" d="M739 99.5 L756 110.5 L739 121.5 Z"/>
<text x="762" y="118" font-size="19.5" fill="#d4d4d4" textLength="55" lengthAdjust="spacingAndGlyphs">Break</text>
<path class="gp" fill="#5c5c5c" stroke="#9a9a9a" stroke-width="1.6" d="M1035 99.5 L1052 110.5 L1035 121.5 Z"/>
<text x="1058" y="118" font-size="19.5" fill="#d4d4d4" textLength="63" lengthAdjust="spacingAndGlyphs">Drop 1</text>
<path class="gp" fill="#5c5c5c" stroke="#9a9a9a" stroke-width="1.6" d="M1331 99.5 L1348 110.5 L1331 121.5 Z"/>
<text x="1354" y="118" font-size="19.5" fill="#d4d4d4" textLength="55" lengthAdjust="spacingAndGlyphs">Break</text>
<path class="gp" fill="#5c5c5c" stroke="#9a9a9a" stroke-width="1.6" d="M1663 99.5 L1680 110.5 L1663 121.5 Z"/>
<text x="1686" y="118" font-size="19.5" fill="#d4d4d4" textLength="63" lengthAdjust="spacingAndGlyphs">Drop 2</text>
<path class="gp" fill="#5c5c5c" stroke="#9a9a9a" stroke-width="1.6" d="M2253 99.5 L2270 110.5 L2253 121.5 Z"/>
<text x="2276" y="118" font-size="19.5" fill="#d4d4d4" textLength="56" lengthAdjust="spacingAndGlyphs">Outro</text>
<path fill="#9a9a9a" d="M296 98h2v1498h-2zM738 98h2v1498h-2zM1034 98h2v1498h-2zM1330 98h2v1498h-2zM1662 98h2v1498h-2zM2252 98h2v1498h-2zM2548 96h2v1500h-2zM0 76h2v1522h-2z"/>
<path fill="#333333" d="M2 1596h2576v40h-2576z"/>
<path fill="#8a8a8a" d="M49 1596h2v4h-2zM98 1596h2v4h-2zM147 1596h2v4h-2zM196 1596h2v16h-2zM196 1610h4v2h-4z"/>
<text x="202.2" y="1618" font-size="20" fill="#a9a9a9" textLength="41" lengthAdjust="spacingAndGlyphs">0:20</text>
<path fill="#8a8a8a" d="M245 1596h2v4h-2zM293 1596h2v4h-2zM342 1596h2v4h-2zM391 1596h2v16h-2zM391 1610h4v2h-4z"/>
<text x="397.5" y="1618" font-size="20" fill="#a9a9a9" textLength="41" lengthAdjust="spacingAndGlyphs">0:40</text>
<path fill="#8a8a8a" d="M440 1596h2v4h-2zM489 1596h2v4h-2zM537 1596h2v4h-2zM586 1596h2v16h-2zM586 1610h4v2h-4z"/>
<text x="592.8" y="1618" font-size="20" fill="#a9a9a9" textLength="40" lengthAdjust="spacingAndGlyphs">1:00</text>
<path fill="#8a8a8a" d="M635 1596h2v4h-2zM684 1596h2v4h-2zM733 1596h2v4h-2zM782 1596h2v16h-2zM782 1610h4v2h-4z"/>
<text x="788.1" y="1618" font-size="20" fill="#a9a9a9" textLength="40" lengthAdjust="spacingAndGlyphs">1:20</text>
<path fill="#8a8a8a" d="M830 1596h2v4h-2zM879 1596h2v4h-2zM928 1596h2v4h-2zM977 1596h2v16h-2zM977 1610h4v2h-4z"/>
<text x="983.4" y="1618" font-size="20" fill="#a9a9a9" textLength="40" lengthAdjust="spacingAndGlyphs">1:40</text>
<path fill="#8a8a8a" d="M1026 1596h2v4h-2zM1075 1596h2v4h-2zM1123 1596h2v4h-2zM1172 1596h2v16h-2zM1172 1610h4v2h-4z"/>
<text x="1178.7" y="1618" font-size="20" fill="#a9a9a9" textLength="40" lengthAdjust="spacingAndGlyphs">2:00</text>
<path fill="#8a8a8a" d="M1221 1596h2v4h-2zM1270 1596h2v4h-2zM1319 1596h2v4h-2zM1368 1596h2v16h-2zM1368 1610h4v2h-4z"/>
<text x="1374" y="1618" font-size="20" fill="#a9a9a9" textLength="40" lengthAdjust="spacingAndGlyphs">2:20</text>
<path fill="#8a8a8a" d="M1416 1596h2v4h-2zM1465 1596h2v4h-2zM1514 1596h2v4h-2zM1563 1596h2v16h-2zM1563 1610h4v2h-4z"/>
<text x="1569.3" y="1618" font-size="20" fill="#a9a9a9" textLength="40" lengthAdjust="spacingAndGlyphs">2:40</text>
<path fill="#8a8a8a" d="M1612 1596h2v4h-2zM1660 1596h2v4h-2zM1709 1596h2v4h-2zM1758 1596h2v16h-2zM1758 1610h4v2h-4z"/>
<text x="1764.6" y="1618" font-size="20" fill="#a9a9a9" textLength="40" lengthAdjust="spacingAndGlyphs">3:00</text>
<path fill="#8a8a8a" d="M1807 1596h2v4h-2zM1856 1596h2v4h-2zM1905 1596h2v4h-2zM1953 1596h2v16h-2zM1953 1610h4v2h-4z"/>
<text x="1959.9" y="1618" font-size="20" fill="#a9a9a9" textLength="40" lengthAdjust="spacingAndGlyphs">3:20</text>
<path fill="#8a8a8a" d="M2002 1596h2v4h-2zM2051 1596h2v4h-2zM2100 1596h2v4h-2zM2149 1596h2v16h-2zM2149 1610h4v2h-4z"/>
<text x="2155.2" y="1618" font-size="20" fill="#a9a9a9" textLength="40" lengthAdjust="spacingAndGlyphs">3:40</text>
<path fill="#8a8a8a" d="M2198 1596h2v4h-2zM2246 1596h2v4h-2zM2295 1596h2v4h-2zM2344 1596h2v16h-2zM2344 1610h4v2h-4z"/>
<text x="2350.5" y="1618" font-size="20" fill="#a9a9a9" textLength="40" lengthAdjust="spacingAndGlyphs">4:00</text>
<path fill="#8a8a8a" d="M2393 1596h2v4h-2zM2442 1596h2v4h-2zM2490 1596h2v4h-2zM2539 1596h2v4h-2z"/>
<text x="6" y="1618" font-size="20" fill="#a9a9a9" textLength="41" lengthAdjust="spacingAndGlyphs">0:00</text>
<path fill="#dfeef2" d="M0 1558h2v34h-2z"/>
<path fill="#8a8a8a" d="M0 1596h2v16h-2zM0 1610h4v2h-4z"/>
<path fill="#4fc3e0" d="M0 1598 L8 1606 L0 1606 Z"/>
<path fill="#212121" d="M2578 122h4v1474h-4zM2798 122h4v1474h-4z"/>
<path fill="#333333" d="M2580 34h268v88h-268z"/>
<path fill="#212121" d="M2580 122h264v4h-264z"/>
<path fill="#3d3d3d" d="M2582 126h216v34h-216z"/>
<g class="gp"><circle cx="2601" cy="143" r="12" fill="none" stroke="#d6d6d6" stroke-width="1.7"/><path fill="#d6d6d6" d="M2597.8 136.5 L2607.5 143 L2597.8 149.5 Z"/></g>
<text x="2628" y="150.3" font-size="19.5" fill="#d6d6d6" textLength="26" lengthAdjust="spacingAndGlyphs" font-weight="bold">SC</text>
<path fill="#3a3a3a" d="M2802 126h42v34h-42z"/>
<path fill="#1c1c1c" d="M2810 130h5v2h-5zM2818 130h6v2h-6zM2810 133h5v23h-5zM2818 133h6v23h-6z"/>
<path fill="#80fcb0" d="M2582 164h216v456h-216zM2582 164h216v70h-216z"/>
<g class="gp"><circle cx="2601" cy="181" r="12" fill="none" stroke="#16382a" stroke-width="1.7"/><path stroke="#16382a" stroke-width="1.6" d="M2594.5 176.8 h9.5 M2598 181 h10 M2598 184.8 h10"/></g>
<text x="2628" y="188.3" font-size="19.5" fill="#16382a" textLength="88" lengthAdjust="spacingAndGlyphs" font-weight="bold">LOW END</text>
<path fill="#3a3a3a" d="M2802 164h42v70h-42z"/>
<path fill="#1c1c1c" d="M2810 168h5v2h-5zM2818 168h6v2h-6zM2810 171h5v59h-5zM2818 171h6v59h-6z"/>
<path fill="#1a1a1a" d="M2590 234h208v4h-208zM2590 234h2v386h-2z"/>
<path fill="#80fcb0" d="M2592 238h206v173h-206z"/>
<g class="gp"><circle cx="2611" cy="255" r="12" fill="none" stroke="#16382a" stroke-width="1.7"/><path fill="#16382a" d="M2604.5 252.5 L2617.5 252.5 L2611 261.3 Z"/></g>
<text x="2637" y="262.3" font-size="19.5" fill="#16382a" textLength="40" lengthAdjust="spacingAndGlyphs" font-weight="bold">Kick</text>
<path fill="#3a3a3a" d="M2802 238h42v173h-42z"/>
<path fill="#1c1c1c" d="M2810 242h5v2h-5zM2818 242h6v2h-6zM2810 245h5v162h-5zM2818 245h6v162h-6z"/>
<path fill="#1a1a1a" d="M2592 411h206v3h-206z"/>
<path fill="#5bbdb0" d="M2592 414h206v206h-206z"/>
<g class="gp"><circle cx="2611" cy="431" r="12" fill="none" stroke="#14302c" stroke-width="1.7"/><path fill="#14302c" d="M2604.5 428.5 L2617.5 428.5 L2611 437.3 Z"/></g>
<text x="2637" y="438.3" font-size="19.5" fill="#14302c" textLength="82" lengthAdjust="spacingAndGlyphs" font-weight="bold">Bassline</text>
<path fill="#3a3a3a" d="M2802 414h42v206h-42z"/>
<path fill="#1c1c1c" d="M2810 418h5v2h-5zM2818 418h6v2h-6zM2810 421h5v195h-5zM2818 421h6v195h-6z"/>
<path fill="#cdf54f" d="M2582 624h216v68h-216z"/>
<g class="gp"><circle cx="2601" cy="641" r="12" fill="none" stroke="#2a3010" stroke-width="1.7"/><path stroke="#2a3010" stroke-width="1.6" d="M2595.5 637 h11 M2595.5 641 h11 M2595.5 645 h11"/></g>
<text x="2628" y="648.3" font-size="19.5" fill="#2a3010" textLength="69" lengthAdjust="spacingAndGlyphs" font-weight="bold">DRUMS</text>
<path fill="#3a3a3a" d="M2802 624h42v68h-42z"/>
<path fill="#1c1c1c" d="M2810 628h5v2h-5zM2818 628h6v2h-6zM2810 631h5v57h-5zM2818 631h6v57h-6z"/>
<path fill="#a6f97a" d="M2582 696h216v172h-216z"/>
<g class="gp"><circle cx="2601" cy="713" r="12" fill="none" stroke="#1e3410" stroke-width="1.7"/><path fill="#1e3410" d="M2594.5 710.5 L2607.5 710.5 L2601 719.3 Z"/></g>
<text x="2628" y="720.3" font-size="19.5" fill="#1e3410" textLength="78" lengthAdjust="spacingAndGlyphs" font-weight="bold">VOCALS</text>
<path fill="#3a3a3a" d="M2802 696h42v172h-42z"/>
<path fill="#1c1c1c" d="M2810 700h5v2h-5zM2818 700h6v2h-6zM2810 703h5v161h-5zM2818 703h6v161h-6z"/>
<path fill="#8ffce8" d="M2582 872h216v636h-216zM2582 872h216v70h-216z"/>
<g class="gp"><circle cx="2601" cy="889" r="12" fill="none" stroke="#17332e" stroke-width="1.7"/><path stroke="#17332e" stroke-width="1.6" d="M2594.5 884.8 h9.5 M2598 889 h10 M2598 892.8 h10"/></g>
<text x="2628" y="896.3" font-size="19.5" fill="#17332e" textLength="78" lengthAdjust="spacingAndGlyphs" font-weight="bold">SYNTHS</text>
<path fill="#3a3a3a" d="M2802 872h42v70h-42z"/>
<path fill="#1c1c1c" d="M2810 876h5v2h-5zM2818 876h6v2h-6zM2810 879h5v59h-5zM2818 879h6v59h-6z"/>
<path fill="#1a1a1a" d="M2590 942h208v4h-208zM2590 942h2v566h-2z"/>
<path fill="#8ffce8" d="M2592 946h206v34h-206z"/>
<g class="gp"><circle cx="2611" cy="963" r="12" fill="none" stroke="#17332e" stroke-width="1.7"/><path fill="#17332e" d="M2607.8 956.5 L2617.5 963 L2607.8 969.5 Z"/></g>
<text x="2637" y="970.3" font-size="19.5" fill="#17332e" textLength="90" lengthAdjust="spacingAndGlyphs" font-weight="bold">String FX</text>
<path fill="#3a3a3a" d="M2802 946h42v34h-42z"/>
<path fill="#1c1c1c" d="M2810 950h5v2h-5zM2818 950h6v2h-6zM2810 953h5v23h-5zM2818 953h6v23h-6z"/>
<path fill="#1a1a1a" d="M2592 980h206v4h-206z"/>
<path fill="#8ffce8" d="M2592 984h206v172h-206z"/>
<g class="gp"><circle cx="2611" cy="1001" r="12" fill="none" stroke="#17332e" stroke-width="1.7"/><path fill="#17332e" d="M2604.5 998.5 L2617.5 998.5 L2611 1007.3 Z"/></g>
<text x="2637" y="1008.3" font-size="19.5" fill="#17332e" textLength="56" lengthAdjust="spacingAndGlyphs" font-weight="bold">Synth</text>
<path fill="#3a3a3a" d="M2802 984h42v172h-42z"/>
<path fill="#1c1c1c" d="M2810 988h5v2h-5zM2818 988h6v2h-6zM2810 991h5v161h-5zM2818 991h6v161h-6z"/>
<path fill="#1a1a1a" d="M2592 1156h206v4h-206z"/>
<path fill="#617fdf" d="M2592 1160h206v172h-206z"/>
<g class="gp"><circle cx="2611" cy="1177" r="12" fill="none" stroke="#141c40" stroke-width="1.7"/><path fill="#141c40" d="M2604.5 1174.5 L2617.5 1174.5 L2611 1183.3 Z"/></g>
<text x="2637" y="1184.3" font-size="19.5" fill="#141c40" textLength="76" lengthAdjust="spacingAndGlyphs" font-weight="bold">Scratch</text>
<path fill="#3a3a3a" d="M2802 1160h42v172h-42z"/>
<path fill="#1c1c1c" d="M2810 1164h5v2h-5zM2818 1164h6v2h-6zM2810 1167h5v161h-5zM2818 1167h6v161h-6z"/>
<path fill="#1a1a1a" d="M2592 1332h206v4h-206z"/>
<path fill="#8ffce8" d="M2592 1336h206v172h-206z"/>
<g class="gp"><circle cx="2611" cy="1353" r="12" fill="none" stroke="#17332e" stroke-width="1.7"/><path fill="#17332e" d="M2604.5 1350.5 L2617.5 1350.5 L2611 1359.3 Z"/></g>
<text x="2637" y="1360.3" font-size="19.5" fill="#17332e" textLength="70" lengthAdjust="spacingAndGlyphs" font-weight="bold">Chords</text>
<path fill="#3a3a3a" d="M2802 1336h42v172h-42z"/>
<path fill="#1c1c1c" d="M2810 1340h5v2h-5zM2818 1340h6v2h-6zM2810 1343h5v161h-5zM2818 1343h6v161h-6z"/>
<path fill="#aaaaaa" d="M2582 1512h216v34h-216z"/>
<g class="gp"><circle cx="2601" cy="1529" r="12" fill="none" stroke="#2a2a2a" stroke-width="1.7"/><path stroke="#2a2a2a" stroke-width="1.6" d="M2595.5 1525 h11 M2595.5 1529 h11 M2595.5 1533 h11"/></g>
<text x="2626" y="1536.3" font-size="19.5" fill="#2a2a2a" textLength="48" lengthAdjust="spacingAndGlyphs" font-weight="bold">FX'S</text>
<path fill="#3a3a3a" d="M2802 1512h42v34h-42z"/>
<path fill="#1c1c1c" d="M2810 1516h5v2h-5zM2818 1516h6v2h-6zM2810 1519h5v23h-5zM2818 1519h6v23h-6z"/>
<path fill="#bbdfe9" d="M2582 1558h216v34h-216z"/>
<g class="gp"><circle cx="2601" cy="1575" r="12" fill="none" stroke="#1e2a2e" stroke-width="1.7"/><path fill="#1e2a2e" d="M2597.8 1568.5 L2607.5 1575 L2597.8 1581.5 Z"/></g>
<text x="2632" y="1582.3" font-size="19.5" fill="#1e2a2e" textLength="50" lengthAdjust="spacingAndGlyphs" font-weight="bold">Main</text>
<path fill="#3a3a3a" d="M2802 1558h42v34h-42z"/>
<path fill="#1c1c1c" d="M2810 1562h5v2h-5zM2818 1562h6v2h-6zM2810 1565h5v23h-5zM2818 1565h6v23h-6z"/>
<path fill="#212121" d="M2802 1546h42v12h-42z"/>
<text x="2518" y="1586" font-size="33" fill="#7a7a7a" textLength="52" lengthAdjust="spacingAndGlyphs" font-weight="bold">2/1</text>
<rect x="2588.5" y="52.5" width="57" height="25" rx="12.5" fill="#1e1e1e" stroke="#141414" stroke-width="1.5" class="gp"/>
<text x="2603.3" y="72" font-size="19" fill="#d0d0d0" textLength="29" lengthAdjust="spacingAndGlyphs" font-weight="bold">Del</text>
<rect x="2668.5" y="52.5" width="45" height="25" fill="#1e1e1e" stroke="#121212" stroke-width="1.5"/>
<g class="gp"><path d="M2686.7 69.1 L2695 60.8" stroke="#c4c4c4" stroke-width="2.6"/><circle cx="2686.7" cy="69.1" r="3.2" fill="#c4c4c4"/><circle cx="2695" cy="60.8" r="3.2" fill="#c4c4c4"/></g>
<rect x="2722.5" y="52.5" width="45" height="25" fill="#1e1e1e" stroke="#121212" stroke-width="1.5"/>
<g class="gp"><path d="M2740.2 65 v-3 a4.6 4.6 0 0 1 9.2 0 v3" fill="none" stroke="#c4c4c4" stroke-width="2"/><rect x="2737.7" y="64" width="14.3" height="8" fill="#c4c4c4"/></g>
<circle cx="2601" cy="100.7" r="12.4" fill="#1e1e1e" stroke="#151515" stroke-width="1.5" class="gp"/>
<circle cx="2632.8" cy="100.7" r="12.4" fill="#1e1e1e" stroke="#151515" stroke-width="1.5" class="gp"/>
<g class="gp"><path fill="#7a7a7a" d="M2594.2 100.9 L2601.7 94.8 L2601.7 107 Z"/><rect x="2601.5" y="99.8" width="6.5" height="2.2" fill="#7a7a7a"/><path fill="#c8c8c8" d="M2640 100.9 L2631.8 94.8 L2631.8 107 Z"/><rect x="2625.9" y="99.8" width="6.1" height="2.2" fill="#c8c8c8"/></g>
<path fill="#333333" d="M2578 1592h266v44h-266z"/>
<path fill="#212121" d="M2578 1592h266v4h-266z"/>
<rect x="2582.5" y="1604.5" width="29" height="25" fill="#f0b062" stroke="#1c1c1c" stroke-width="1.5"/>
<rect x="2588.1" y="1614.0" width="1.7" height="6" fill="#111"/>
<rect x="2592.0" y="1610.0" width="1.7" height="14" fill="#111"/>
<rect x="2596.0" y="1608.0" width="1.7" height="18" fill="#111"/>
<rect x="2600.1" y="1612.0" width="1.7" height="10" fill="#111"/>
<rect x="2604.1" y="1614.0" width="1.7" height="6" fill="#111"/>
<rect x="2618.5" y="1605.5" width="69" height="24" fill="#1e1e1e" stroke="#121212"/>
<path fill="#2f6d82" d="M2620 1607h20v21h-20z"/>
<text x="2623" y="1624" font-size="19" fill="#c4c4c4" textLength="54" lengthAdjust="spacingAndGlyphs">1.00x</text>
<rect x="2730.5" y="1605.5" width="29" height="24" fill="#1e1e1e" stroke="#121212"/>
<rect x="2766.5" y="1605.5" width="29" height="24" fill="#1e1e1e" stroke="#121212"/>
<text x="2745" y="1624" font-size="19" fill="#c4c4c4" text-anchor="middle">H</text>
<text x="2781" y="1624" font-size="19" fill="#c4c4c4" text-anchor="middle">W</text>
<path fill="#333333" d="M2 6h2478v24h-2478z"/>
<path fill="#2a2424" d="M2 6h2478v1h-2478z"/>
<path fill="#80fcb0" d="M1 8h131v1h-131zM142 8h122v1h-122zM285 8h121v1h-121zM427 8h133v1h-133zM568 8h134v1h-134zM710 8h132v1h-132zM996 8h123v1h-123zM1137 8h136v1h-136zM1281 8h104v1h-104zM1422 8h132v1h-132zM1599 8h136v1h-136zM1742 8h131v1h-131zM1884 8h136v1h-136zM2024 8h138v1h-138zM2167 8h138v1h-138zM2309 8h71v1h-71z"/>
<path fill="#5bbdb0" d="M142 9h142v1h-142zM285 9h142v1h-142zM427 9h141v1h-141zM568 9h137v1h-137zM710 9h141v1h-141zM996 9h134v1h-134zM1137 9h132v1h-132zM1281 9h134v1h-134zM1422 9h132v1h-132zM1599 9h143v1h-143zM1742 9h135v1h-135zM1884 9h140v1h-140zM2024 9h143v1h-143zM2167 9h142v1h-142zM2309 9h142v1h-142z"/>
<path fill="#c8ef4d" d="M1 11h263v1h-263z"/>
<path fill="#7bf55a" d="M1 12h263v1h-263z"/>
<path fill="#c99c42" d="M1 14h263v1h-263z"/>
<path fill="#cdf54f" d="M285 11h425v1h-425z"/>
<path fill="#7bf55a" d="M285 12h283v1h-283z"/>
<path fill="#c99c42" d="M285 14h425v1h-425z"/>
<path fill="#6ae6fa" d="M285 16h425v2h-425zM710 16h266v1h-266z"/>
<path fill="#cdf54f" d="M995 11h586v1h-586z"/>
<path fill="#7bf55a" d="M995 12h567v1h-567z"/>
<path fill="#cdf54f" d="M995 13h586v1h-586z"/>
<path fill="#c99c42" d="M995 14h586v1h-586z"/>
<path fill="#6ae6fa" d="M995 16h567v2h-567z"/>
<path fill="#cdf54f" d="M1599 11h852v1h-852z"/>
<path fill="#7bf55a" d="M1599 12h852v1h-852z"/>
<path fill="#cdf54f" d="M1599 13h852v1h-852z"/>
<path fill="#c99c42" d="M1599 14h852v1h-852z"/>
<path fill="#6ae6fa" d="M1599 16h852v2h-852z"/>
<path fill="#9aa8f8" d="M30 18h40v1h-40zM101 18h40v1h-40zM172 18h40v1h-40zM243 18h41v1h-41zM314 18h41v1h-41zM386 18h40v1h-40zM457 18h40v1h-40zM526 18h41v1h-41zM597 18h41v1h-41zM669 18h40v1h-40zM740 18h40v1h-40zM811 18h40v1h-40zM882 18h41v1h-41zM953 18h41v1h-41zM1025 18h40v1h-40zM1096 18h40v1h-40zM1167 18h40v1h-40zM1238 18h41v1h-41zM1309 18h41v1h-41zM1381 18h40v1h-40zM1452 18h40v1h-40zM1521 18h41v1h-41zM1629 18h40v1h-40zM1700 18h41v1h-41zM1771 18h41v1h-41zM1843 18h40v1h-40zM1914 18h40v1h-40zM1983 18h40v1h-40zM2054 18h41v1h-41zM2125 18h41v1h-41zM2197 18h40v1h-40zM2268 18h40v1h-40zM2339 18h41v1h-41zM2410 18h41v1h-41z"/>
<path fill="#a6f97a" d="M285 19h424v1h-424zM852 19h26v1h-26zM995 19h285v1h-285zM1742 19h281v1h-281z"/>
<path fill="#8ffce8" d="M285 21h142v2h-142zM427 21h141v2h-141zM568 21h142v2h-142zM710 21h142v2h-142zM852 21h124v2h-124zM995 21h142v2h-142zM1137 21h143v2h-143zM1280 21h141v2h-141zM1421 21h141v2h-141zM1599 21h143v2h-143zM1742 21h142v2h-142zM1884 21h140v2h-140zM2024 21h143v2h-143zM2167 21h142v2h-142zM2309 21h142v2h-142z"/>
<path fill="#617fdf" d="M1137 23h1029v1h-1029z"/>
<path fill="#8ffce8" d="M1544 24h339v1h-339z"/>
<path fill="#aaaaaa" d="M285 27h141v1h-141zM851 27h144v1h-144zM1280 27h141v1h-141zM1491 26h107v2h-107z"/>
<path fill="#6a6a6a" d="M284 6h2v24h-2zM709 6h2v24h-2zM994 6h2v24h-2zM1598 6h2v24h-2zM2166 6h2v24h-2z"/>
<rect x="-0.25" y="4" width="2482" height="28" rx="6" fill="none" stroke="#7a7a7a" stroke-width="4.2" style="shape-rendering:geometricPrecision"/>
<path fill="none" stroke="#7a7a7a" stroke-width="4.2" style="shape-rendering:geometricPrecision" d="M2470 4 H2838 Q2846 4 2846 12 V1630 Q2846 1638 2838 1638 H10"/>
<path fill="#7a7a7a" d="M0 1627 Q0 1636 9 1636 L11 1636 L11 1640 L0 1640 Z"/>
<path fill="#262626" d="M2482 30h362v4h-362z"/>
</svg></body></html>
